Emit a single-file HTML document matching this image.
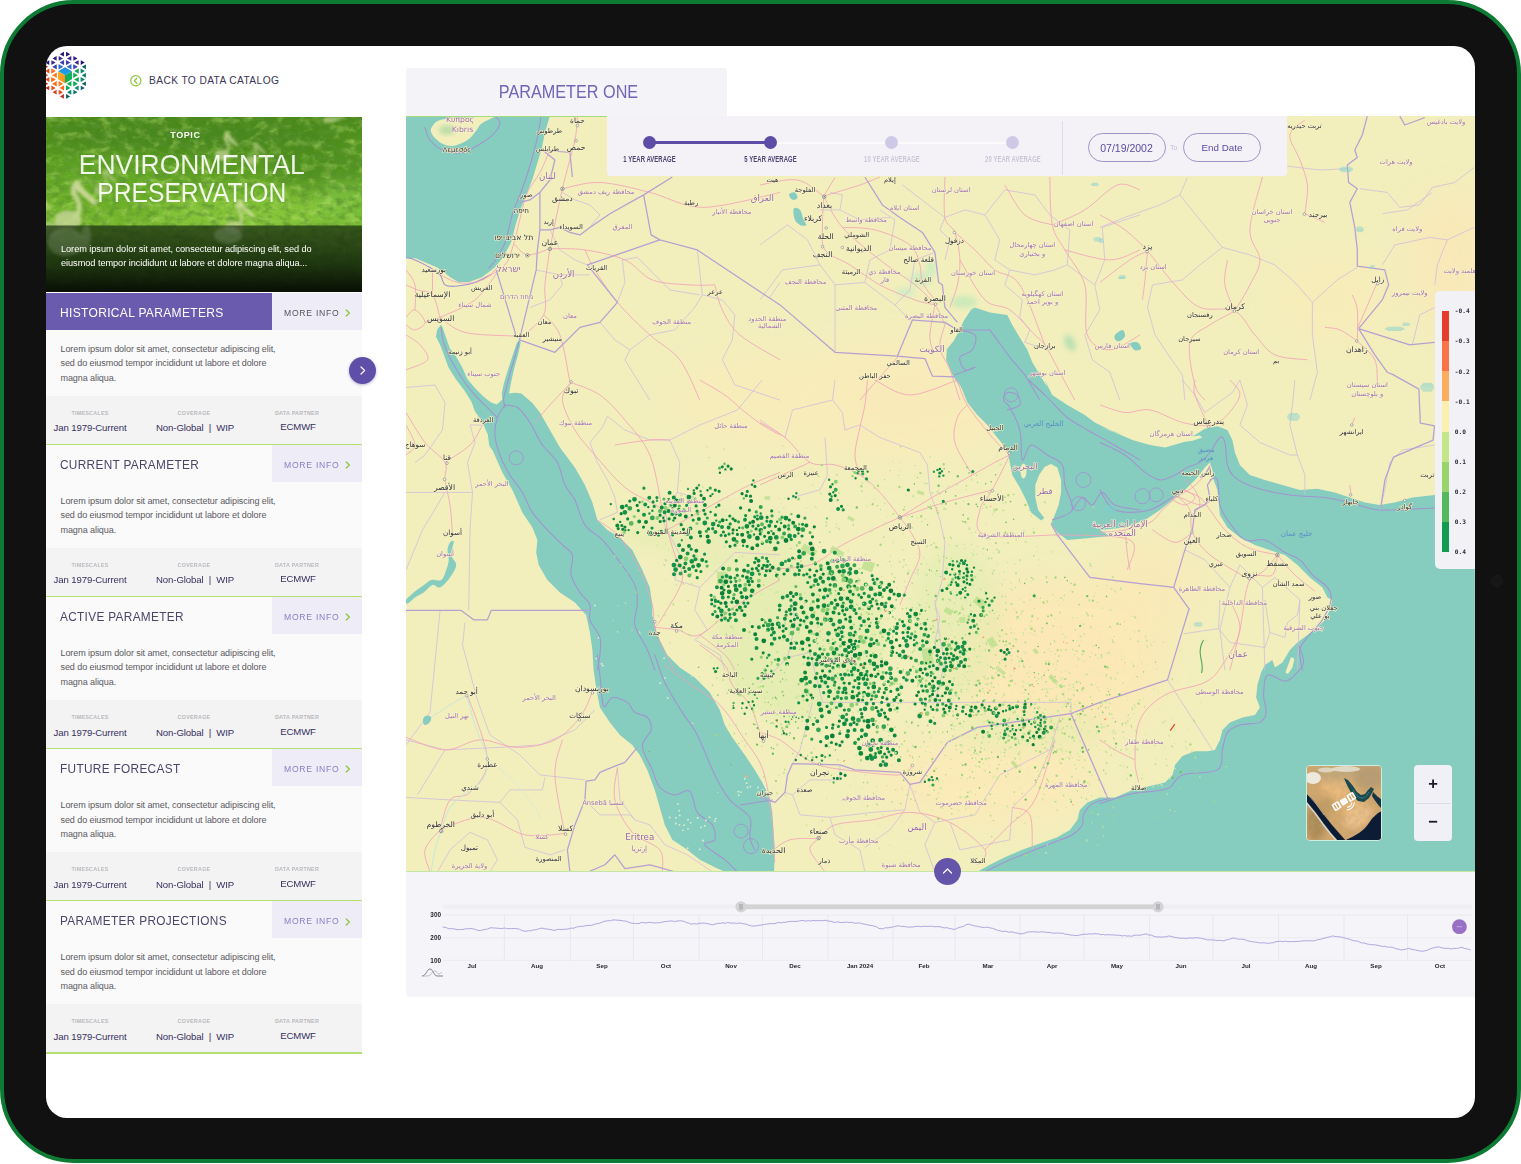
<!DOCTYPE html>
<html lang="en"><head><meta charset="utf-8"><title>Parameter One – Environmental Preservation</title>
<style>
*{box-sizing:border-box;margin:0;padding:0}
html,body{width:1521px;height:1164px;overflow:hidden;background:#fff}
body{position:relative;font-family:"Liberation Sans",sans-serif;color:#3b3558}
.frame{position:absolute;left:0;top:0;width:1520.6px;height:1163.2px;background:#111;border:4px solid #0e7b35;border-radius:74px}
.cam{position:absolute;left:1491px;top:575px;width:12px;height:12px;border-radius:50%;background:#161616;border:1px solid #1b1b1b}
.screen{position:absolute;left:46px;top:46px;width:1428.6px;height:1072px;border-radius:21px;background:#fff;overflow:hidden}
.pg{position:absolute;left:-46px;top:-46px;width:1521px;height:1164px}
.abs{position:absolute}
.nw{white-space:nowrap}
/* sidebar */
.back{position:absolute;left:149px;top:74px;font-size:10.2px;letter-spacing:.4px;color:#3b3558;white-space:nowrap;line-height:14px}
.photo{position:absolute;left:46px;top:117px;width:316px;height:175px;overflow:hidden;background:#4c9422}
.topic{position:absolute;left:-18.6px;width:316px;top:13px;text-align:center;font-size:9px;font-weight:bold;letter-spacing:.55px;color:#fff;line-height:11px}
.big{position:absolute;left:-12.4px;width:316px;text-align:center;color:rgba(255,255,255,.9);font-size:27.6px;line-height:27px;white-space:nowrap}
.big span{display:inline-block;transform-origin:50% 50%}
.plorem{position:absolute;left:15px;top:125px;color:#fff;font-size:9.2px;line-height:14.4px;white-space:nowrap;letter-spacing:-.05px}
.card{position:absolute;left:46px;width:316px;height:153px}
.chd{position:absolute;left:0;top:0;width:226px;height:37px;background:#fbfafb}
.chd.on{background:#6a5bae}
.ctt{position:absolute;left:14px;top:12.2px;font-size:13px;line-height:16px;letter-spacing:.35px;color:#4b4569;white-space:nowrap;transform-origin:0 50%;transform:scaleX(.91)}
.on .ctt{transform:scaleX(.925)}
.on .ctt{color:#fff}
.cmi{position:absolute;left:226px;top:0;width:90px;height:37px;background:#edecf7;font-size:8.6px;letter-spacing:.75px;color:#8a7cc4;line-height:40.6px;padding-left:12px;overflow:hidden;white-space:nowrap}
.cmi.dk{color:#55535f}
.cmi svg{position:absolute;left:73px;top:16.3px}
.cds{position:absolute;left:0;top:37px;width:316px;height:66px;background:#fbfafb;font-size:9.02px;line-height:14.4px;color:#5a5960;padding:12.2px 0 0 14.5px;white-space:nowrap;letter-spacing:-.08px}
.cmt{position:absolute;left:0;top:103px;width:316px;height:48px;background:#f3f3f4}
.cln{position:absolute;left:0;top:151px;width:316px;height:1.6px;background:#b4df72}
.ml{position:absolute;top:14px;font-size:5.4px;letter-spacing:.25px;color:#b9b9be;font-weight:bold;text-align:center;white-space:nowrap;line-height:7px;width:80px}
.mv{position:absolute;top:26.8px;font-size:9.6px;color:#372f5c;text-align:center;white-space:nowrap;line-height:12px;width:100px;letter-spacing:-.1px}
.rbtn{position:absolute;left:349px;top:357px;width:27px;height:27px;border-radius:50%;background:#5f4fa8;box-shadow:0 1px 3px rgba(60,40,120,.35)}
/* right */
.tab{position:absolute;left:406px;top:68.4px;width:321px;height:48px;background:#f4f3f8;border-radius:3px 3px 0 0}
.tabl{position:absolute;left:406px;top:115.6px;width:321px;height:1.1px;background:#a6dc7e}
.tab span{position:absolute;left:2px;width:321px;top:12.8px;text-align:center;font-size:18.6px;line-height:22px;color:#7165b6;white-space:nowrap;transform:scaleX(.872);display:block}
.map{position:absolute;left:406px;top:116px;width:1069px;height:756px;overflow:hidden;background:#f2efbd;border-bottom:1px solid #c3e8a6}
.ctl{position:absolute;left:607px;top:116px;width:680px;height:60px;background:rgba(244,242,249,.965);border-radius:0 0 4px 4px}
.trk{position:absolute;left:42px;top:25.5px;width:364px;height:2px;background:#fbfbfd}
.trk2{position:absolute;left:42px;top:25px;width:122px;height:3px;background:#5d4da6}
.dot{position:absolute;top:20.4px;width:13px;height:13px;border-radius:50%;background:#5d4da6}
.dot.off{background:#cfc9e8}
.sl{position:absolute;top:39px;width:120px;text-align:center;font-size:8.7px;line-height:9px;color:#4a4370;white-space:nowrap;font-weight:bold}
.sl span{display:inline-block;transform:scaleX(.68);letter-spacing:.1px}
.sl.off{color:#c9c6d6}
.vdiv{position:absolute;left:455px;top:5px;width:1.4px;height:54px;background:#e0dcee}
.pill{position:absolute;top:17px;width:78px;height:28.5px;border:1.1px solid #9d94c6;border-radius:15px;text-align:center;font-size:9.8px;line-height:28.3px;color:#5b4ca3;white-space:nowrap}
.to{position:absolute;left:563px;top:27px;font-size:7px;color:#c3bfd3;line-height:9px}
.legend{position:absolute;left:1435px;top:291px;width:45px;height:278px;background:#f2f1f6;border-radius:5px}
.lg{position:absolute;left:6.5px;width:7.4px;height:30.2px}
.ll{position:absolute;left:19.8px;font-family:"DejaVu Sans Mono","Liberation Mono",monospace;font-weight:bold;font-size:6.2px;line-height:8px;color:#2d2d3a;white-space:nowrap;width:20px;text-align:left}
.mini{position:absolute;left:1306px;top:765px;width:76px;height:76px;border-radius:4px;border:1px solid #cdeee4;overflow:hidden;background:#c9a36b}
.zoom{position:absolute;left:1414px;top:765px;width:38px;height:76px;border-radius:4px;background:#f1f0f6}
.zoom i{position:absolute;left:2px;right:2px;top:37.5px;height:1px;background:#dddbe6}
.zoom b{position:absolute;left:0;width:38px;text-align:center;font-size:16.5px;line-height:16px;color:#1a1a2a;font-weight:bold}
.chart{position:absolute;left:406px;top:872px;width:1069px;height:124.5px;background:#f5f4f9;border-radius:0 0 0 4px}
.upb{position:absolute;left:934px;top:858px;width:27px;height:27px;border-radius:50%;background:#6454aa}
</style></head><body>
<div class="frame"></div><div class="cam"></div><div class="screen"><div class="pg"><svg class="abs" style="left:0;top:0" width="110" height="110" viewBox="0 0 110 110"><defs><linearGradient id="lgT" x1="0" y1="0" x2="0" y2="1"><stop offset="0" stop-color="#2a86dc"/><stop offset="1" stop-color="#12a8ec"/></linearGradient><linearGradient id="lgL" x1="0" y1="0" x2="1" y2="1"><stop offset="0" stop-color="#ffb22a"/><stop offset="1" stop-color="#ff8a1f"/></linearGradient><linearGradient id="lgR" x1="0" y1="0" x2="0" y2="1"><stop offset="0" stop-color="#12a86a"/><stop offset="1" stop-color="#12b652"/></linearGradient></defs><path d="M49.28 60.29 49.28 64.96 45.22 62.62z" fill="#1e1677"/><path d="M44.13 64.51 44.13 69.19 48.19 66.85z" fill="#bc3623"/><path d="M49.35 68.61 49.35 73.54 45.07 71.08z" fill="#e84c1b"/><path d="M44.10 72.90 44.10 77.70 48.26 75.30z" fill="#d1411f"/><path d="M49.35 77.06 49.35 81.99 45.07 79.52z" fill="#e84c1b"/><path d="M44.13 81.41 44.13 86.09 48.19 83.75z" fill="#bc3623"/><path d="M49.28 85.64 49.28 90.31 45.22 87.97z" fill="#bc3623"/><path d="M56.63 56.00 56.63 60.80 52.47 58.40z" fill="#2a1e83"/><path d="M51.38 60.16 51.38 65.09 55.65 62.62z" fill="#392791"/><path d="M56.76 64.22 56.76 69.48 52.20 66.85z" fill="#3c44b2"/><path d="M51.28 68.44 51.28 73.71 55.84 71.08z" fill="#fe6814"/><path d="M56.83 72.56 56.83 78.04 52.08 75.30z" fill="#ff7a14"/><path d="M51.28 76.89 51.28 82.16 55.84 79.52z" fill="#fe6814"/><path d="M56.76 81.12 56.76 86.38 52.20 83.75z" fill="#fe6814"/><path d="M51.38 85.51 51.38 90.44 55.65 87.97z" fill="#e84c1b"/><path d="M56.63 89.80 56.63 94.60 52.47 92.20z" fill="#d1411f"/><path d="M63.91 51.84 63.91 56.51 59.86 54.17z" fill="#1e1677"/><path d="M58.70 55.93 58.70 60.87 62.97 58.40z" fill="#392791"/><path d="M64.08 59.99 64.08 65.26 59.52 62.62z" fill="#3c44b2"/><path d="M58.54 64.11 58.54 69.59 63.29 66.85z" fill="#2e69cc"/><path d="M58.54 81.01 58.54 86.49 63.29 83.75z" fill="#ff7a14"/><path d="M64.08 85.34 64.08 90.61 59.52 87.97z" fill="#fe6814"/><path d="M58.70 89.73 58.70 94.67 62.97 92.20z" fill="#e84c1b"/><path d="M63.91 94.09 63.91 98.76 59.86 96.42z" fill="#bc3623"/><path d="M66.09 51.84 66.09 56.51 70.14 54.17z" fill="#1e1677"/><path d="M71.30 55.93 71.30 60.87 67.03 58.40z" fill="#392791"/><path d="M65.92 59.99 65.92 65.26 70.48 62.62z" fill="#3c44b2"/><path d="M71.46 64.11 71.46 69.59 66.71 66.85z" fill="#2e69cc"/><path d="M71.46 81.01 71.46 86.49 66.71 83.75z" fill="#0eaf4b"/><path d="M65.92 85.34 65.92 90.61 70.48 87.97z" fill="#0ca456"/><path d="M71.30 89.73 71.30 94.67 67.03 92.20z" fill="#0a856e"/><path d="M66.09 94.09 66.09 98.76 70.14 96.42z" fill="#0a5d6e"/><path d="M73.37 56.00 73.37 60.80 77.53 58.40z" fill="#2a1e83"/><path d="M78.62 60.16 78.62 65.09 74.35 62.62z" fill="#392791"/><path d="M73.24 64.22 73.24 69.48 77.80 66.85z" fill="#3c44b2"/><path d="M78.72 68.44 78.72 73.71 74.16 71.08z" fill="#0ca456"/><path d="M73.17 72.56 73.17 78.04 77.92 75.30z" fill="#0eaf4b"/><path d="M78.72 76.89 78.72 82.16 74.16 79.52z" fill="#0ca456"/><path d="M73.24 81.12 73.24 86.38 77.80 83.75z" fill="#0ca456"/><path d="M78.62 85.51 78.62 90.44 74.35 87.97z" fill="#0a856e"/><path d="M73.37 89.80 73.37 94.60 77.53 92.20z" fill="#0a706e"/><path d="M80.72 60.29 80.72 64.96 84.78 62.62z" fill="#1e1677"/><path d="M85.87 64.51 85.87 69.19 81.81 66.85z" fill="#0a5d6e"/><path d="M80.65 68.61 80.65 73.54 84.93 71.08z" fill="#0a856e"/><path d="M85.90 72.90 85.90 77.70 81.74 75.30z" fill="#0a706e"/><path d="M80.65 77.06 80.65 81.99 84.93 79.52z" fill="#0a856e"/><path d="M85.87 81.41 85.87 86.09 81.81 83.75z" fill="#0a5d6e"/><path d="M80.72 85.64 80.72 90.31 84.78 87.97z" fill="#0a5d6e"/><path d="M65.00 67.27 71.95 71.29 65.00 75.30 58.05 71.29z" fill="url(#lgT)"/><path d="M58.05 71.29 65.00 75.30 65.00 83.33 58.05 79.31z" fill="url(#lgL)"/><path d="M65.00 75.30 71.95 71.29 71.95 79.31 65.00 83.33z" fill="url(#lgR)"/></svg><svg class="abs" style="left:129px;top:73.6px" width="14" height="14" viewBox="0 0 14 14"><circle cx="6.8" cy="6.8" r="5.1" fill="none" stroke="#8dc63f" stroke-width="1.2"/><path d="M7.9 4.2 5.3 6.8 7.9 9.4" fill="none" stroke="#8dc63f" stroke-width="1.3" stroke-linecap="round" stroke-linejoin="round"/></svg><div class="back">BACK TO DATA CATALOG</div><div class="photo"><svg class="abs" style="left:0;top:0" width="316" height="175" viewBox="0 0 316 175"><defs><linearGradient id="pg1" x1="0" y1="0" x2="0" y2="1"><stop offset="0" stop-color="#4b8a1b"/><stop offset=".25" stop-color="#5a9c21"/><stop offset=".55" stop-color="#74b62d"/><stop offset=".75" stop-color="#7dbd33"/><stop offset="1" stop-color="#5fa128"/></linearGradient><linearGradient id="pg2" x1="0" y1="0" x2="0" y2="1"><stop offset="0" stop-color="#1c3312" stop-opacity=".74"/><stop offset=".55" stop-color="#12240b" stop-opacity=".86"/><stop offset="1" stop-color="#050a03" stop-opacity=".97"/></linearGradient><filter id="pn" x="0" y="0" width="100%" height="100%"><feTurbulence type="fractalNoise" baseFrequency=".09 .13" numOctaves="4" seed="5" result="n"/><feColorMatrix type="matrix" values="0 0 0 0 .56  0 0 0 0 .8  0 0 0 0 .2  2.4 0 0 0 -1.12"/></filter><filter id="pn2" x="0" y="0" width="100%" height="100%"><feTurbulence type="fractalNoise" baseFrequency=".11 .16" numOctaves="4" seed="23"/><feColorMatrix type="matrix" values="0 0 0 0 .1  0 0 0 0 .28  0 0 0 0 .03  0 2.6 0 0 -1.12"/></filter><filter id="pb"><feGaussianBlur stdDeviation="1.6"/></filter><filter id="pb2"><feGaussianBlur stdDeviation="9"/></filter></defs><rect width="316" height="175" fill="url(#pg1)"/><g filter="url(#pb2)"><ellipse cx="150" cy="20" rx="150" ry="16" fill="#45821a" opacity=".7"/><ellipse cx="270" cy="50" rx="50" ry="22" fill="#4a8a1c" opacity=".7"/><ellipse cx="200" cy="95" rx="90" ry="22" fill="#8bc93c" opacity=".75"/><ellipse cx="70" cy="60" rx="60" ry="18" fill="#66ab26" opacity=".6"/><ellipse cx="295" cy="85" rx="25" ry="20" fill="#86c94a" opacity=".6"/></g><rect width="316" height="175" filter="url(#pn)" opacity=".5"/><rect width="316" height="175" filter="url(#pn2)" opacity=".7"/><g filter="url(#pb)"><g transform="translate(22 82) scale(1.5 1.5)" opacity="0.8"><ellipse cx="0" cy="14" rx="9" ry="6.5" fill="#c9d79a"/><path d="M5 12C9 8 8 2 5-2S3-9 6-10" fill="none" stroke="#d2dda2" stroke-width="3.2" stroke-linecap="round"/><circle cx="6" cy="-10" r="2.6" fill="#d6dfa6"/><path d="M6-12L20 3 17 4 4-7z" fill="#e0e3ae"/></g><g transform="translate(4 96) scale(-1.2 1.2)" opacity="0.55"><ellipse cx="0" cy="14" rx="9" ry="6.5" fill="#c9d79a"/><path d="M5 12C9 8 8 2 5-2S3-9 6-10" fill="none" stroke="#d2dda2" stroke-width="3.2" stroke-linecap="round"/><circle cx="6" cy="-10" r="2.6" fill="#d6dfa6"/><path d="M6-12L20 3 17 4 4-7z" fill="#e0e3ae"/></g><g transform="translate(176 26) scale(0.85 0.85)" opacity="0.7"><ellipse cx="0" cy="14" rx="9" ry="6.5" fill="#c9d79a"/><path d="M5 12C9 8 8 2 5-2S3-9 6-10" fill="none" stroke="#d2dda2" stroke-width="3.2" stroke-linecap="round"/><circle cx="6" cy="-10" r="2.6" fill="#d6dfa6"/><path d="M6-12L20 3 17 4 4-7z" fill="#e0e3ae"/></g><g transform="translate(206 34) scale(0.7 0.7)" opacity="0.6"><ellipse cx="0" cy="14" rx="9" ry="6.5" fill="#c9d79a"/><path d="M5 12C9 8 8 2 5-2S3-9 6-10" fill="none" stroke="#d2dda2" stroke-width="3.2" stroke-linecap="round"/><circle cx="6" cy="-10" r="2.6" fill="#d6dfa6"/><path d="M6-12L20 3 17 4 4-7z" fill="#e0e3ae"/></g><g transform="translate(188 96) scale(1.05 1.05)" opacity="0.7"><ellipse cx="0" cy="14" rx="9" ry="6.5" fill="#c9d79a"/><path d="M5 12C9 8 8 2 5-2S3-9 6-10" fill="none" stroke="#d2dda2" stroke-width="3.2" stroke-linecap="round"/><circle cx="6" cy="-10" r="2.6" fill="#d6dfa6"/><path d="M6-12L20 3 17 4 4-7z" fill="#e0e3ae"/></g><g transform="translate(55 62) scale(0.8 0.8)" opacity="0.55"><ellipse cx="0" cy="14" rx="9" ry="6.5" fill="#c9d79a"/><path d="M5 12C9 8 8 2 5-2S3-9 6-10" fill="none" stroke="#d2dda2" stroke-width="3.2" stroke-linecap="round"/><circle cx="6" cy="-10" r="2.6" fill="#d6dfa6"/><path d="M6-12L20 3 17 4 4-7z" fill="#e0e3ae"/></g><path d="M300 0l-14 6-8 0 0-6z" fill="#d2dda2" opacity=".6"/></g><rect x="0" y="108.5" width="316" height="67" fill="url(#pg2)"/><g filter="url(#pb)" fill="#9aa98a" opacity=".28"><ellipse cx="182" cy="118" rx="14" ry="9"/><ellipse cx="20" cy="125" rx="18" ry="14"/><ellipse cx="40" cy="120" rx="5" ry="12"/></g></svg><div class="topic">TOPIC</div><div class="big" style="top:33.5px"><span id="bg1" style="transform:scaleX(.959)">ENVIRONMENTAL</span></div><div class="big" style="top:61.5px"><span id="bg2" style="transform:scaleX(.893)">PRESERVATION</span></div><div class="plorem">Lorem ipsum dolor sit amet, consectetur adipiscing elit, sed do<br>eiusmod tempor incididunt ut labore et dolore magna aliqua...</div></div><div class="card" style="top:292.5px"><div class="chd on"><div class="ctt">HISTORICAL PARAMETERS</div></div><div class="cmi dk">MORE INFO<svg width="6" height="8" viewBox="0 0 6 8"><path d="M1.2 1 4.4 4 1.2 7" fill="none" stroke="#8dc63f" stroke-width="1.3" stroke-linecap="round" stroke-linejoin="round"/></svg></div><div class="cds">Lorem ipsum dolor sit amet, consectetur adipiscing elit,<br>sed do eiusmod tempor incididunt ut labore et dolore<br>magna aliqua.</div><div class="cmt"><div class="ml" style="left:4px">TIMESCALES</div><div class="mv" style="left:-6px">Jan 1979-Current</div><div class="ml" style="left:108px">COVERAGE</div><div class="mv" style="left:99px">Non-Global &nbsp;|&nbsp; WIP</div><div class="ml" style="left:211px">DATA PARTNER</div><div class="mv" style="left:202px;top:25.8px">ECMWF</div></div><div class="cln"></div></div><div class="card" style="top:444.7px"><div class="chd"><div class="ctt">CURRENT PARAMETER</div></div><div class="cmi">MORE INFO<svg width="6" height="8" viewBox="0 0 6 8"><path d="M1.2 1 4.4 4 1.2 7" fill="none" stroke="#8dc63f" stroke-width="1.3" stroke-linecap="round" stroke-linejoin="round"/></svg></div><div class="cds">Lorem ipsum dolor sit amet, consectetur adipiscing elit,<br>sed do eiusmod tempor incididunt ut labore et dolore<br>magna aliqua.</div><div class="cmt"><div class="ml" style="left:4px">TIMESCALES</div><div class="mv" style="left:-6px">Jan 1979-Current</div><div class="ml" style="left:108px">COVERAGE</div><div class="mv" style="left:99px">Non-Global &nbsp;|&nbsp; WIP</div><div class="ml" style="left:211px">DATA PARTNER</div><div class="mv" style="left:202px;top:25.8px">ECMWF</div></div><div class="cln"></div></div><div class="card" style="top:596.9px"><div class="chd"><div class="ctt">ACTIVE PARAMETER</div></div><div class="cmi">MORE INFO<svg width="6" height="8" viewBox="0 0 6 8"><path d="M1.2 1 4.4 4 1.2 7" fill="none" stroke="#8dc63f" stroke-width="1.3" stroke-linecap="round" stroke-linejoin="round"/></svg></div><div class="cds">Lorem ipsum dolor sit amet, consectetur adipiscing elit,<br>sed do eiusmod tempor incididunt ut labore et dolore<br>magna aliqua.</div><div class="cmt"><div class="ml" style="left:4px">TIMESCALES</div><div class="mv" style="left:-6px">Jan 1979-Current</div><div class="ml" style="left:108px">COVERAGE</div><div class="mv" style="left:99px">Non-Global &nbsp;|&nbsp; WIP</div><div class="ml" style="left:211px">DATA PARTNER</div><div class="mv" style="left:202px;top:25.8px">ECMWF</div></div><div class="cln"></div></div><div class="card" style="top:749.1px"><div class="chd"><div class="ctt">FUTURE FORECAST</div></div><div class="cmi">MORE INFO<svg width="6" height="8" viewBox="0 0 6 8"><path d="M1.2 1 4.4 4 1.2 7" fill="none" stroke="#8dc63f" stroke-width="1.3" stroke-linecap="round" stroke-linejoin="round"/></svg></div><div class="cds">Lorem ipsum dolor sit amet, consectetur adipiscing elit,<br>sed do eiusmod tempor incididunt ut labore et dolore<br>magna aliqua.</div><div class="cmt"><div class="ml" style="left:4px">TIMESCALES</div><div class="mv" style="left:-6px">Jan 1979-Current</div><div class="ml" style="left:108px">COVERAGE</div><div class="mv" style="left:99px">Non-Global &nbsp;|&nbsp; WIP</div><div class="ml" style="left:211px">DATA PARTNER</div><div class="mv" style="left:202px;top:25.8px">ECMWF</div></div><div class="cln"></div></div><div class="card" style="top:901.3px"><div class="chd"><div class="ctt">PARAMETER PROJECTIONS</div></div><div class="cmi">MORE INFO<svg width="6" height="8" viewBox="0 0 6 8"><path d="M1.2 1 4.4 4 1.2 7" fill="none" stroke="#8dc63f" stroke-width="1.3" stroke-linecap="round" stroke-linejoin="round"/></svg></div><div class="cds">Lorem ipsum dolor sit amet, consectetur adipiscing elit,<br>sed do eiusmod tempor incididunt ut labore et dolore<br>magna aliqua.</div><div class="cmt"><div class="ml" style="left:4px">TIMESCALES</div><div class="mv" style="left:-6px">Jan 1979-Current</div><div class="ml" style="left:108px">COVERAGE</div><div class="mv" style="left:99px">Non-Global &nbsp;|&nbsp; WIP</div><div class="ml" style="left:211px">DATA PARTNER</div><div class="mv" style="left:202px;top:25.8px">ECMWF</div></div><div class="cln"></div></div><div class="rbtn"><svg class="abs" style="left:10px;top:8px" width="8" height="11" viewBox="0 0 8 11"><path d="M2 2 5.6 5.5 2 9" fill="none" stroke="#fff" stroke-width="1.2" stroke-linecap="round" stroke-linejoin="round"/></svg></div><div class="tab"><span>PARAMETER ONE</span></div><div class="map"><svg class="abs" style="left:0;top:0" width="1069" height="756" viewBox="406 116 1069 756"><defs><filter id="b20" x="-20%" y="-20%" width="140%" height="140%"><feGaussianBlur stdDeviation="18"/></filter><filter id="b8" x="-20%" y="-20%" width="140%" height="140%"><feGaussianBlur stdDeviation="7"/></filter><filter id="b3" x="-20%" y="-20%" width="140%" height="140%"><feGaussianBlur stdDeviation="2.5"/></filter></defs><rect x="406" y="116" width="1069" height="756" fill="#f2efbd"/><g filter="url(#b20)"><ellipse cx="1060" cy="660" rx="105" ry="80" fill="#fbe8b6"/><ellipse cx="990" cy="780" rx="110" ry="45" fill="#faeab8"/><ellipse cx="900" cy="400" rx="120" ry="60" fill="#f8ebb9"/><ellipse cx="760" cy="400" rx="90" ry="50" fill="#f8ecba" opacity=".8"/><ellipse cx="1150" cy="590" rx="45" ry="50" fill="#fae9b6" opacity=".8"/><ellipse cx="1330" cy="300" rx="60" ry="50" fill="#f8ebb8" opacity=".7"/><ellipse cx="1450" cy="260" rx="40" ry="70" fill="#fbe8b8" opacity=".9"/></g><g filter="url(#b8)" opacity=".38"><ellipse cx="800" cy="640" rx="85" ry="80" fill="#d3eaa0"/><ellipse cx="730" cy="540" rx="70" ry="35" fill="#dcecaa"/><ellipse cx="955" cy="620" rx="45" ry="75" fill="#d9ecaa"/><ellipse cx="660" cy="525" rx="40" ry="25" fill="#dcecaa"/><ellipse cx="1030" cy="730" rx="70" ry="22" fill="#dfedae"/></g><path d="M406.0 116.0 549.9 116.0 545.1 131.8 542.0 147.6 537.2 163.4 532.5 179.2 526.2 195.1 519.8 210.9 515.1 226.7 511.1 242.5 502.4 258.3 494.5 267.8 481.9 277.3 469.2 282.0 458.2 282.0 450.3 277.3 443.9 272.5 437.6 267.8 426.6 263.0 415.5 258.3 406.0 258.3z" fill="#86cdc0"/><path d="M431.0 129.0C431.7 127.0 433.7 123.7 436.0 122.0C438.3 120.3 441.3 119.7 445.0 119.0C448.7 118.3 453.8 118.2 458.0 118.0C462.2 117.8 465.2 117.8 470.0 117.5C474.8 117.2 482.7 116.5 487.0 116.2C491.3 116.0 495.5 115.5 496.0 116.0C496.5 116.5 492.5 117.7 490.0 119.0C487.5 120.3 483.3 122.0 481.0 124.0C478.7 126.0 477.8 128.7 476.0 131.0C474.2 133.3 472.3 136.0 470.0 138.0C467.7 140.0 465.0 141.7 462.0 143.0C459.0 144.3 455.2 145.8 452.0 146.0C448.8 146.2 445.7 145.2 443.0 144.0C440.3 142.8 437.8 140.7 436.0 139.0C434.2 137.3 432.8 135.7 432.0 134.0C431.2 132.3 430.3 131.0 431.0 129.0z" fill="#f2efbd"/><ellipse cx="447" cy="130" rx="8" ry="4.5" fill="#b9dda6" filter="url(#b3)"/><path d="M441.0 324.8 437.4 329.2 435.9 336.5 440.3 345.3 444.7 357.0 448.4 367.2 455.7 378.9 464.4 390.6 471.7 402.3 474.7 411.0 482.0 421.3 487.8 434.4 489.3 446.1 492.4 450.0 502.4 472.4 512.4 489.9 522.4 512.4 532.4 527.4 537.4 539.9 536.2 552.4 538.7 564.9 547.4 579.9 559.9 592.4 574.9 602.4 586.1 615.0 589.9 632.5 592.4 650.0 593.6 670.0 596.1 687.4 599.9 707.4 609.9 722.4 619.9 734.9 632.3 744.9 639.8 754.9 647.3 769.9 654.8 789.9 659.8 807.4 664.8 824.9 672.3 839.8 687.3 849.8 699.8 859.8 714.8 867.3 724.8 871.8 724.8 873.0 774.0 873.0 774.8 849.8 773.5 829.9 772.3 812.4 769.8 797.4 762.3 782.4 754.8 769.9 744.8 754.9 732.3 737.4 724.8 724.9 719.8 709.9 709.8 692.4 694.8 677.4 679.8 667.5 667.3 655.0 657.3 635.0 652.3 615.0 652.3 604.9 649.8 587.4 642.3 569.9 632.3 549.9 619.9 537.4 607.4 529.9 597.4 519.9 592.4 502.4 584.9 484.9 574.9 467.4 559.9 447.5 549.9 430.0 539.9 412.5 532.4 403.0 523.7 395.5 521.5 393.5 515.0 392.8 509.0 393.5 511.2 381.8 514.1 368.7 517.8 355.5 520.7 342.4 519.3 339.6 517.0 342.4 512.6 355.5 508.3 368.7 503.9 383.3 501.7 393.5 502.4 399.3 499.5 402.3 496.6 404.5 490.7 402.3 483.4 396.4 474.7 387.7 467.4 378.9 462.2 367.2 456.4 357.0 449.8 348.2 446.2 338.0 442.5 327.0z" fill="#86cdc0"/><path d="M971.1 309.4 963.6 321.1 959.1 331.1 953.6 341.1 946.9 349.3 946.1 359.8 952.4 374.8 959.9 387.3 957.4 380.0 962.4 390.0 967.4 402.5 977.4 415.0 987.4 425.0 997.3 437.5 1007.3 450.0 1009.8 462.4 1012.3 474.9 1019.8 487.4 1026.1 499.9 1031.1 512.4 1041.1 520.4 1044.3 517.9 1038.1 509.9 1035.3 497.4 1035.3 484.9 1039.1 474.9 1044.8 466.7 1051.1 463.9 1057.3 467.4 1061.1 479.9 1061.1 492.4 1058.6 504.9 1054.8 514.9 1051.1 523.7 1057.3 532.4 1067.3 539.9 1084.8 538.6 1109.8 536.1 1100.0 529.9 1125.0 527.4 1145.0 519.9 1160.0 509.9 1172.5 499.9 1184.9 489.9 1197.4 477.4 1204.9 467.4 1209.9 462.4 1212.4 469.9 1213.7 479.9 1217.4 489.9 1218.7 502.4 1219.9 514.9 1227.4 527.4 1239.9 537.4 1254.9 544.9 1272.4 551.1 1284.9 554.9 1297.4 564.9 1309.9 577.4 1322.4 587.4 1327.4 597.4 1332.3 600.0 1329.9 610.0 1324.9 620.0 1317.4 627.5 1307.4 635.0 1297.4 642.5 1289.9 650.0 1282.4 662.5 1274.9 667.5 1272.4 660.0 1264.9 665.0 1261.1 672.5 1257.4 684.9 1256.1 697.4 1259.9 707.4 1254.9 714.9 1242.4 717.4 1229.9 722.4 1222.4 729.9 1219.9 739.9 1214.9 749.9 1207.4 751.2 1194.9 751.2 1182.4 756.1 1175.0 764.9 1172.5 774.9 1165.0 782.4 1150.0 786.1 1132.5 789.9 1115.0 797.4 1099.8 797.4 1087.3 802.4 1079.8 809.9 1077.3 819.9 1069.8 829.9 1057.3 837.3 1039.8 843.6 1022.3 849.8 1004.8 857.3 989.9 864.8 977.4 871.8 977.0 873.0 1475.0 873.0 1474.8 493.7 1434.8 494.9 1412.3 497.4 1394.8 502.4 1379.8 504.9 1364.8 502.4 1349.8 497.4 1334.8 492.4 1317.4 488.7 1299.9 489.9 1282.4 484.9 1264.9 479.9 1249.9 474.9 1239.9 464.9 1234.9 452.5 1232.4 440.0 1227.4 430.0 1217.4 426.2 1204.9 428.7 1194.9 435.0 1182.4 442.5 1165.0 447.5 1150.0 445.0 1132.5 440.0 1115.0 432.5 1100.0 427.5 1124.8 435.0 1109.8 430.0 1094.8 422.5 1084.8 415.0 1067.3 405.0 1052.3 395.0 1044.8 380.0 1047.3 387.3 1039.8 374.8 1032.3 362.3 1027.3 349.8 1019.8 337.4 1012.3 324.9 1007.3 314.9 989.9 312.4 974.9 307.4z" fill="#86cdc0"/><g filter="url(#b3)" opacity=".75"><ellipse cx="921" cy="279" rx="11" ry="7" fill="#c6ebc4"/><ellipse cx="931" cy="268" rx="5" ry="8" fill="#c6ebc4"/><ellipse cx="964" cy="302" rx="13" ry="6" fill="#bfe8b8"/><ellipse cx="905" cy="292" rx="10" ry="4" fill="#c9ecc6"/><ellipse cx="1070" cy="343" rx="5" ry="9" fill="#a9dcae" transform="rotate(-25 1070 343)"/></g><ellipse cx="1023.5" cy="471" rx="3" ry="7.5" fill="#f2efbd"/><path d="M1291.1 657.0 1294.4 658.7 1292.4 667.5 1287.9 674.0 1285.4 672.5 1288.6 663.7z" fill="#f2efbd"/><path d="M1175.0 439.5 1187.4 437.0 1199.9 435.5 1202.4 437.5 1192.4 440.7 1179.9 442.5z" fill="#f2efbd"/><path d="M453.7 541.9C453.9 544.0 450.8 551.1 451.2 554.9C451.6 558.7 456.4 561.1 456.2 564.9C456.0 568.6 452.7 573.6 450.0 577.4C447.3 581.1 442.9 586.1 440.0 587.4C437.1 588.6 435.2 584.0 432.5 584.9C429.8 585.7 426.6 590.3 423.7 592.4C420.8 594.4 417.7 595.5 415.0 597.4C412.3 599.2 409.0 603.2 407.5 603.6C406.0 604.0 405.0 601.7 406.0 599.9C407.0 598.0 411.0 594.7 413.7 592.4C416.5 590.1 419.6 588.2 422.5 586.1C425.4 584.0 428.1 580.9 431.2 579.9C434.4 578.8 438.7 581.5 441.2 579.9C443.7 578.2 445.0 573.2 446.2 569.9C447.5 566.5 448.5 563.2 448.7 559.9C448.9 556.6 447.3 552.8 447.5 549.9C447.7 547.0 448.9 543.7 450.0 542.4C451.0 541.1 453.5 539.8 453.7 541.9z" fill="#86cdc0"/><path d="M793.7 208.7C794.6 207.0 798.3 208.1 800.0 209.9C801.6 211.8 802.7 217.4 803.7 219.9C804.8 222.4 806.6 224.0 806.2 224.9C805.8 225.8 803.1 226.3 801.2 225.4C799.3 224.6 796.2 222.7 795.0 219.9C793.7 217.1 792.9 210.4 793.7 208.7z" fill="#86cdc0"/><path d="M789.5 193.7C790.3 192.9 793.6 191.8 795.0 192.4C796.3 193.1 797.7 196.2 797.5 197.4C797.3 198.7 795.0 199.9 793.7 199.9C792.5 199.9 790.7 198.5 790.0 197.4C789.3 196.4 788.6 194.5 789.5 193.7z" fill="#86cdc0"/><path d="M1115.0 334.9C1116.2 333.2 1120.8 329.6 1122.5 329.9C1124.2 330.1 1125.4 334.2 1125.0 336.1C1124.6 338.0 1121.6 340.5 1120.0 341.1C1118.4 341.7 1116.3 340.9 1115.5 339.9C1114.7 338.8 1113.8 336.5 1115.0 334.9z" fill="#86cdc0"/><path d="M1130.0 343.6C1130.4 342.3 1135.6 341.5 1137.5 342.3C1139.3 343.2 1141.6 347.3 1141.2 348.6C1140.8 349.9 1136.9 351.2 1135.0 350.3C1133.1 349.5 1129.6 344.9 1130.0 343.6z" fill="#86cdc0"/><path d="M504.9 405.0C503.7 407.1 499.1 412.5 497.4 417.5C495.8 422.5 494.5 428.7 494.9 435.0C495.4 441.2 497.4 448.3 499.9 455.0C502.4 461.6 506.2 468.7 509.9 474.9C513.7 481.2 518.7 486.2 522.4 492.4C526.2 498.7 528.2 506.2 532.4 512.4C536.6 518.7 542.4 524.5 547.4 529.9C552.4 535.3 558.2 540.7 562.4 544.9C566.6 549.1 570.9 549.9 572.4 554.9C573.8 559.9 569.9 568.6 571.1 574.9C572.4 581.1 576.8 587.4 579.9 592.4C583.0 597.4 588.2 600.3 589.9 604.9C591.5 609.4 588.2 614.4 589.9 619.8C591.5 625.3 598.2 631.5 599.9 637.3C601.5 643.2 600.3 649.4 599.9 654.8C599.5 660.3 597.8 667.5 597.4 670.1" fill="none" stroke="#a393d0" stroke-width="1.05" stroke-linejoin="round" stroke-linecap="round"/><path d="M504.9 405.0C507.0 405.4 513.3 404.6 517.4 407.5C521.6 410.4 525.8 416.2 529.9 422.5C534.1 428.7 537.8 438.3 542.4 445.0C547.0 451.6 553.7 455.8 557.4 462.4C561.1 469.1 562.0 478.7 564.9 484.9C567.8 491.2 571.6 493.3 574.9 499.9C578.2 506.6 580.3 518.2 584.9 524.9C589.5 531.6 596.5 533.7 602.4 539.9C608.2 546.1 614.4 554.9 619.9 562.4C625.3 569.9 631.9 577.8 634.8 584.9C637.8 591.9 637.3 598.2 637.3 604.9C637.3 611.5 633.2 617.3 634.8 624.8C636.5 632.3 644.0 642.3 647.3 649.8C650.7 657.4 653.6 666.7 654.8 670.1" fill="none" stroke="#a393d0" stroke-width="1.05" stroke-linejoin="round" stroke-linecap="round"/><path d="M597.4 655.0C597.8 658.3 598.8 666.4 599.9 675.0C600.9 683.5 601.5 702.4 603.6 706.2C605.7 709.9 608.4 698.1 612.4 697.4C616.3 696.8 623.6 699.9 627.4 702.4C631.1 704.9 631.5 709.9 634.8 712.4C638.2 714.9 644.6 714.5 647.3 717.4C650.0 720.3 651.9 725.1 651.1 729.9C650.3 734.7 642.1 739.5 642.3 746.2C642.6 752.8 649.4 763.0 652.3 769.9C655.3 776.8 656.1 783.2 659.8 787.4C663.6 791.5 669.8 794.2 674.8 794.9C679.8 795.5 686.1 788.2 689.8 791.1C693.6 794.0 693.6 806.7 697.3 812.4C701.1 818.0 709.4 820.3 712.3 824.9C715.2 829.4 716.0 836.5 714.8 839.8C713.5 843.2 703.1 841.5 704.8 844.8C706.5 848.2 719.4 855.3 724.8 859.8C730.2 864.3 735.2 869.8 737.3 871.8" fill="none" stroke="#a393d0" stroke-width="1.05" stroke-linejoin="round" stroke-linecap="round"/><path d="M654.8 655.0C656.5 659.5 660.2 672.9 664.8 682.4C669.4 692.0 676.9 703.7 682.3 712.4C687.7 721.2 691.9 724.5 697.3 734.9C702.7 745.3 709.4 764.1 714.8 774.9C720.2 785.7 724.0 792.8 729.8 799.9C735.6 806.9 746.4 811.1 749.8 817.4C753.1 823.6 748.9 831.9 749.8 837.3C750.6 842.8 753.9 847.8 754.8 849.8" fill="none" stroke="#a393d0" stroke-width="1.05" stroke-linejoin="round" stroke-linecap="round"/><path d="M739.8 804.9 772.3 799.9" fill="none" stroke="#a393d0" stroke-width="1.05" stroke-linejoin="round" stroke-linecap="round"/><path d="M441.0 327.8C441.5 330.5 442.1 338.0 444.0 343.8C445.9 349.6 449.3 356.5 452.7 362.8C456.1 369.1 460.5 376.2 464.4 381.8C468.3 387.4 472.2 392.0 476.1 396.4C480.0 400.8 484.4 404.7 487.8 408.1C491.2 411.5 495.1 415.4 496.6 416.9" fill="none" stroke="#a393d0" stroke-width="1.05" stroke-linejoin="round" stroke-linecap="round"/><path d="M518.8 342.4C518.1 344.8 516.2 352.1 514.8 357.0C513.4 361.9 511.8 366.7 510.5 371.6C509.2 376.5 507.9 381.6 506.8 386.2C505.7 390.8 503.9 395.8 503.6 399.3C503.4 402.8 505.0 406.0 505.3 407.4" fill="none" stroke="#a393d0" stroke-width="1.05" stroke-linejoin="round" stroke-linecap="round"/><path d="M406.0 257.4C407.5 257.8 411.4 258.4 415.0 259.9C418.6 261.4 423.3 263.7 427.5 266.1C431.6 268.6 437.1 271.8 440.0 274.9C442.9 278.0 442.1 283.0 445.0 284.9C447.9 286.8 452.5 286.6 457.5 286.1C462.5 285.7 469.5 284.3 475.0 282.4C480.4 280.5 487.4 276.1 489.9 274.9" fill="none" stroke="#a393d0" stroke-width="1.05" stroke-linejoin="round" stroke-linecap="round"/><path d="M425.0 127.5C425.8 129.6 427.1 136.2 430.0 140.0C432.9 143.7 437.1 147.9 442.5 150.0C447.9 152.1 455.8 153.7 462.5 152.5C469.1 151.2 477.0 145.8 482.4 142.5C487.9 139.1 492.0 135.8 494.9 132.5C497.9 129.2 499.9 125.2 499.9 122.5C499.9 119.8 495.8 117.3 494.9 116.2" fill="none" stroke="#a393d0" stroke-width="1.05" stroke-linejoin="round" stroke-linecap="round"/><path d="M541.0 116.0C540.5 119.2 539.3 128.5 538.0 135.0C536.7 141.5 534.8 148.3 533.0 155.0C531.2 161.7 529.2 168.3 527.0 175.0C524.8 181.7 522.3 188.8 520.0 195.0C517.7 201.2 514.8 206.5 513.0 212.0C511.2 217.5 510.3 222.8 509.0 228.0C507.7 233.2 507.0 238.0 505.0 243.0C503.0 248.0 499.7 253.8 497.0 258.0C494.3 262.2 490.3 266.3 489.0 268.0" fill="none" stroke="#a393d0" stroke-width="1.05" stroke-linejoin="round" stroke-linecap="round"/><path d="M957.4 329.9 989.9 329.9 1009.8 357.3 1024.8 374.8 1039.8 400.1" fill="none" stroke="#a393d0" stroke-width="1.05" stroke-linejoin="round" stroke-linecap="round"/><path d="M957.4 329.9C960.3 330.7 972.4 331.5 974.9 334.9C977.4 338.2 974.9 346.1 972.4 349.8C969.9 353.6 961.1 354.0 959.9 357.3C958.6 360.7 962.4 368.2 964.9 369.8C967.4 371.5 976.5 366.5 974.9 367.3C973.2 368.2 958.2 373.6 954.9 374.8" fill="none" stroke="#a393d0" stroke-width="1.05" stroke-linejoin="round" stroke-linecap="round"/><path d="M1028.6 380.0C1031.7 382.9 1040.9 391.2 1047.3 397.5C1053.8 403.7 1060.6 412.1 1067.3 417.5C1074.0 422.9 1080.2 425.8 1087.3 430.0C1094.4 434.1 1101.0 437.5 1109.8 442.5C1118.6 447.5 1135.0 457.0 1140.0 459.9" fill="none" stroke="#a393d0" stroke-width="1.05" stroke-linejoin="round" stroke-linecap="round"/><path d="M1007.3 410.0C1009.4 409.1 1018.2 407.5 1019.8 405.0C1021.5 402.5 1019.4 397.1 1017.3 395.0C1015.3 392.9 1009.6 391.7 1007.3 392.5C1005.0 393.3 1003.2 397.5 1003.6 400.0C1004.0 402.5 1007.1 402.5 1009.8 407.5C1012.5 412.5 1017.7 421.2 1019.8 430.0C1021.9 438.7 1020.5 457.4 1022.3 459.9C1024.2 462.4 1026.9 445.8 1031.1 445.0C1035.2 444.1 1042.1 451.6 1047.3 455.0C1052.5 458.3 1059.4 459.9 1062.3 464.9C1065.2 469.9 1063.1 477.4 1064.8 484.9C1066.5 492.4 1074.4 504.1 1072.3 509.9C1070.2 515.7 1055.6 518.2 1052.3 519.9" fill="none" stroke="#a393d0" stroke-width="1.05" stroke-linejoin="round" stroke-linecap="round"/><path d="M1072.3 509.9C1074.0 507.8 1079.0 498.3 1082.3 497.4C1085.6 496.6 1089.0 505.8 1092.3 504.9C1095.6 504.1 1098.5 492.4 1102.3 492.4C1106.0 492.4 1108.5 502.0 1114.8 504.9C1121.1 507.8 1135.8 509.1 1140.0 509.9" fill="none" stroke="#a393d0" stroke-width="1.05" stroke-linejoin="round" stroke-linecap="round"/><path d="M1100.0 442.5C1104.2 444.5 1117.5 450.0 1125.0 455.0C1132.5 459.9 1139.1 468.3 1145.0 472.4C1150.8 476.6 1155.0 479.5 1160.0 479.9C1165.0 480.4 1170.4 477.0 1175.0 474.9C1179.5 472.9 1183.3 469.5 1187.4 467.4C1191.6 465.4 1196.2 464.9 1199.9 462.4C1203.7 459.9 1206.6 456.6 1209.9 452.5C1213.3 448.3 1217.4 439.1 1219.9 437.5C1222.4 435.8 1223.7 437.9 1224.9 442.5C1226.2 447.0 1225.8 459.1 1227.4 464.9C1229.1 470.8 1230.3 473.7 1234.9 477.4C1239.5 481.2 1245.7 484.5 1254.9 487.4C1264.1 490.3 1278.2 493.3 1289.9 494.9C1301.5 496.6 1314.9 496.2 1324.9 497.4C1334.8 498.7 1340.7 500.3 1349.8 502.4C1359.0 504.5 1365.7 509.0 1379.8 509.9C1394.0 510.8 1425.6 508.2 1434.8 507.9" fill="none" stroke="#a393d0" stroke-width="1.05" stroke-linejoin="round" stroke-linecap="round"/><path d="M1209.9 479.9C1211.2 479.9 1215.8 475.8 1217.4 479.9C1219.1 484.1 1218.3 498.3 1219.9 504.9C1221.6 511.6 1223.3 514.1 1227.4 519.9C1231.6 525.7 1238.7 536.6 1244.9 539.9C1251.2 543.2 1258.2 537.8 1264.9 539.9C1271.6 542.0 1279.1 549.1 1284.9 552.4C1290.7 555.7 1295.3 556.1 1299.9 559.9C1304.5 563.6 1307.8 570.3 1312.4 574.9C1316.9 579.5 1324.2 583.2 1327.4 587.4C1330.5 591.5 1331.9 594.4 1331.1 599.9C1330.3 605.3 1326.3 613.6 1322.4 619.8C1318.4 626.1 1311.1 632.3 1307.4 637.3C1303.6 642.3 1300.7 644.4 1299.9 649.8C1299.0 655.3 1302.0 666.7 1302.4 670.1" fill="none" stroke="#a393d0" stroke-width="1.05" stroke-linejoin="round" stroke-linecap="round"/><path d="M1298.6 645.0C1299.5 647.9 1304.2 657.5 1303.6 662.5C1303.0 667.5 1298.0 671.8 1294.9 675.0C1291.8 678.1 1289.5 681.2 1284.9 681.2C1280.3 681.2 1270.9 672.7 1267.4 675.0C1263.9 677.2 1263.9 688.7 1263.6 694.9C1263.4 701.2 1266.8 707.8 1266.1 712.4C1265.5 717.0 1264.3 720.3 1259.9 722.4C1255.5 724.5 1245.3 723.3 1239.9 724.9C1234.5 726.6 1230.3 728.2 1227.4 732.4C1224.5 736.6 1224.1 743.7 1222.4 749.9C1220.8 756.1 1224.1 765.7 1217.4 769.9C1210.8 774.1 1190.4 772.0 1182.4 774.9C1174.5 777.8 1174.5 784.7 1170.0 787.4C1165.4 790.1 1161.2 790.1 1155.0 791.1C1148.7 792.2 1141.6 791.5 1132.5 793.6C1123.3 795.7 1105.4 802.0 1100.0 803.6" fill="none" stroke="#a393d0" stroke-width="1.05" stroke-linejoin="round" stroke-linecap="round"/><path d="M1109.8 798.6C1106.9 799.5 1096.7 800.9 1092.3 803.6C1087.9 806.3 1085.2 811.3 1083.5 814.9C1081.9 818.4 1084.2 821.5 1082.3 824.9C1080.4 828.2 1076.5 832.1 1072.3 834.8C1068.1 837.6 1063.6 838.6 1057.3 841.1C1051.1 843.6 1042.7 846.7 1034.8 849.8C1026.9 853.0 1018.2 856.2 1009.8 859.8C1001.5 863.5 989.0 869.8 984.9 871.8" fill="none" stroke="#a393d0" stroke-width="1.05" stroke-linejoin="round" stroke-linecap="round"/><path d="M1100.0 489.9C1102.5 493.3 1106.7 506.6 1115.0 509.9C1123.3 513.2 1138.7 513.2 1150.0 509.9C1161.2 506.6 1177.0 493.3 1182.4 489.9" fill="none" stroke="#a393d0" stroke-width="1.05" stroke-linejoin="round" stroke-linecap="round"/><circle cx="516.2" cy="457.9" r="7" fill="none" stroke="#a393d0" stroke-width=".9"/><circle cx="1083.5" cy="479.9" r="7.5" fill="none" stroke="#a393d0" stroke-width=".9"/><circle cx="1078.5" cy="503.7" r="7" fill="none" stroke="#a393d0" stroke-width=".9"/><circle cx="1142.5" cy="496.2" r="7.5" fill="none" stroke="#a393d0" stroke-width=".9"/><circle cx="1156.2" cy="494.9" r="7" fill="none" stroke="#a393d0" stroke-width=".9"/><circle cx="741.0" cy="831.1" r="7" fill="none" stroke="#a393d0" stroke-width=".9"/><circle cx="751.0" cy="846.1" r="7.5" fill="none" stroke="#a393d0" stroke-width=".9"/><circle cx="1011.1" cy="394.8" r="7" fill="none" stroke="#a393d0" stroke-width=".9"/><path d="M607.4 416.2 602.4 427.5 589.9 442.5 597.4 462.4 607.4 479.9 614.9 497.4 617.4 512.4 599.9 519.9M607.4 416.2 624.9 430.0 649.8 440.0 669.8 440.0 679.8 462.4 677.3 492.4 694.8 497.4M669.8 440.0 699.8 425.0 737.3 410.0 762.3 380.0M677.3 492.4 662.3 519.9 679.8 554.9 674.8 579.9 699.8 587.4 714.8 572.4 734.8 552.4 780.0 554.9M699.8 587.4 694.8 609.9 707.3 629.8 694.8 639.8 719.8 654.8 724.8 670.1M832.5 400.0 842.4 412.5 844.9 430.0 859.9 425.0 879.9 437.5 899.9 445.0 919.9 452.5 927.4 464.9 929.9 492.4 939.9 519.9 944.9 542.4 942.4 579.9 934.9 604.9 939.9 617.3 934.9 642.3 939.9 670.1M760.0 420.0 785.0 437.5 792.5 410.0 832.5 400.0M825.0 437.5 827.5 474.9 820.0 489.9 792.5 497.4M832.5 400.0 835.0 380.0M822.5 702.4 1071.0 702.4 1071.0 713.7M934.9 600.0 939.9 637.5 944.9 662.5 934.9 702.4M812.5 702.4 800.0 749.9 792.5 763.6M787.5 657.5 810.0 652.5 822.5 702.4M760.0 682.4 775.0 670.0 787.5 657.5 795.0 625.0 792.5 600.0M839.9 764.9 839.9 779.9 810.0 779.9 792.5 794.9 785.0 792.4M792.5 794.9 800.0 814.9 830.0 817.4 835.0 834.8 859.9 849.8 864.9 871.8M830.0 817.4 872.4 812.4 904.9 809.9 909.9 784.4M904.9 809.9 889.9 829.9 864.9 847.3M909.9 784.4 919.9 812.4 934.9 822.4 924.9 844.8 934.9 871.8M934.9 822.4 974.9 814.9 999.8 774.9 1049.8 749.9 1059.8 717.4M949.9 822.4 959.9 849.8 1009.8 839.8 1012.3 807.4 1034.8 784.9 1054.8 739.9M1167.5 679.9 1212.4 749.9M1183.7 633.7 1218.7 628.7 1219.9 600.0M1218.7 628.7 1229.9 642.5 1264.9 647.5 1269.9 632.5 1264.9 600.0M1269.9 632.5 1284.9 637.5 1287.4 622.5 1297.4 615.0 1299.9 600.0M1224.9 670.1 1219.9 629.8 1229.9 587.4 1239.9 564.9 1249.9 574.9 1262.4 587.4 1264.9 670.1M1184.9 549.9 1204.9 559.9 1229.9 587.4M1297.4 670.1 1299.9 599.9 1274.9 577.4 1262.4 587.4M760.0 244.9 787.5 224.9 807.5 239.9 820.0 264.9 835.0 284.9 835.0 352.3M820.0 264.9 782.5 269.9 760.0 299.9M835.0 284.9 864.9 282.4 894.9 304.9 909.9 319.9M864.9 282.4 869.9 259.9 889.9 249.9 894.9 219.9 879.9 209.9M894.9 304.9 909.9 289.9 914.9 259.9 934.9 252.4M830.0 192.4 842.4 194.9 839.9 209.9 820.0 209.9M839.9 209.9 859.9 219.9 889.9 217.4M902.4 185.0 934.9 209.9 944.9 217.4 939.9 229.9 949.9 239.9 944.9 259.9M944.9 217.4 964.9 209.9 984.9 214.9 999.8 239.9 994.8 259.9 1009.8 269.9 1004.8 284.9 1022.3 299.9 1019.8 317.4 1029.8 329.9 1024.8 342.3 1047.3 349.8M984.9 214.9 1004.8 189.9 1034.8 194.9 1049.8 214.9 1069.8 229.9 1067.3 264.9 1094.8 284.9 1104.8 259.9 1102.3 227.4 1124.8 219.9 1140.0 214.9M1094.8 284.9 1099.8 309.9 1084.8 334.9 1092.3 359.8 1109.8 372.3 1119.8 400.1M1009.8 269.9 1034.8 274.9 1054.8 269.9 1067.3 264.9M1100.0 227.4 1125.0 217.4 1160.0 204.9 1179.9 194.9 1187.4 177.5M1179.9 194.9 1199.9 219.9 1222.4 247.4 1249.9 254.9 1274.9 264.9 1294.9 282.4 1312.4 302.4 1337.3 279.9 1357.3 267.4M1222.4 247.4 1199.9 264.9 1182.4 279.9 1152.5 284.9 1147.5 307.4 1155.0 334.9 1170.0 357.3 1182.4 374.8 1184.9 400.1M1312.4 302.4 1312.4 334.9 1317.4 372.3 1309.9 400.1M1287.4 166.2 1319.9 170.0 1347.3 168.7M1359.8 188.7 1387.3 192.4 1399.8 207.4 1419.8 204.9 1432.3 187.4 1454.8 182.5 1474.0 167.5M1382.3 213.7 1407.3 209.9 1432.3 192.4M1382.3 264.9 1394.8 244.9 1429.8 237.4 1447.3 239.9 1474.0 227.4M1447.3 239.9 1437.3 264.9 1434.8 284.9M1412.3 344.8 1419.8 314.9 1434.8 307.4M1294.9 380.0 1292.4 405.0 1289.9 425.0 1297.4 455.0 1304.9 474.9 1304.9 494.9M1239.9 380.0 1247.4 405.0 1239.9 425.0 1259.9 442.5 1289.9 455.0 1297.4 455.0M1182.4 380.0 1194.9 395.0 1204.9 412.5 1232.4 392.5 1239.9 380.0M1434.8 445.0 1402.3 450.0 1389.8 462.4 1384.8 489.9 1379.8 509.9M406.0 387.5 435.0 385.0 445.0 402.5 442.5 430.0 425.0 455.0 415.0 462.4M472.5 492.4 470.0 529.9 468.7 610.4M406.0 492.4 472.5 492.4 467.5 462.4 475.0 442.5 470.0 425.0 482.4 425.0M406.0 569.9 422.5 529.9 445.0 492.4M440.0 611.2 430.0 712.4 406.0 744.9M465.0 622.5 462.5 645.0 477.4 699.9 489.9 734.9 519.9 754.9 539.9 774.9 584.9 779.9M445.0 749.9 499.9 747.4 539.9 744.9 574.9 729.9 594.9 709.9M406.0 797.4 450.0 799.9 499.9 802.4 517.4 819.9 524.9 847.3 549.9 854.8 564.9 849.8M499.9 802.4 509.9 789.9 542.4 789.9 544.9 777.4M406.0 739.9 445.0 749.9 417.5 794.9M617.4 767.4 619.9 799.9 634.8 819.9 649.8 824.9 664.8 844.8 687.3 854.8 712.3 871.8M584.9 799.9 599.9 814.9 629.9 814.9 634.8 819.9M437.5 871.8 450.0 849.8 470.0 832.3 487.4 839.8 497.4 859.8 489.9 871.8M589.9 227.4 599.9 214.9 589.9 204.9 574.9 199.9 562.4 192.4M549.9 229.9 559.9 249.9 574.9 259.9 587.4 264.9M536.2 269.9 559.9 274.9 589.9 274.9M529.9 307.4 549.9 299.9 562.4 284.9 559.9 274.9M617.4 302.4 624.9 282.4 622.4 259.9 637.3 257.4M599.9 322.4 614.9 339.9 629.9 349.8 624.9 359.8 649.8 400.1M629.9 349.8 649.8 334.9 674.8 329.9 694.8 307.4 702.3 294.9 697.3 249.9M702.3 294.9 722.3 299.9 734.8 314.9 732.3 339.9 722.3 359.8 734.8 384.8 780.0 400.1M637.3 257.4 669.8 289.9 699.8 294.9M769.8 297.4 780.0 282.4" fill="none" stroke="#d3bddb" stroke-width=".8" stroke-linejoin="round"/><path d="M899.9 517.4C905.3 514.1 920.3 504.5 932.4 497.4C944.5 490.3 962.0 480.8 972.4 474.9C982.8 469.1 988.6 465.8 994.8 462.4C1001.1 459.1 1007.3 456.2 1009.8 455.0M899.9 517.4C896.6 513.2 886.6 499.5 879.9 492.4C873.3 485.3 867.4 479.5 859.9 474.9C852.4 470.4 843.3 467.0 835.0 464.9C826.6 462.9 818.3 467.0 810.0 462.4C801.6 457.9 793.3 444.1 785.0 437.5C776.7 430.8 764.2 425.0 760.0 422.5M899.9 517.4C895.3 519.5 882.0 525.3 872.4 529.9C862.8 534.5 852.9 539.1 842.4 544.9C832.0 550.7 823.7 560.7 810.0 564.9C796.2 569.0 768.3 569.0 760.0 569.9M899.9 517.4C902.0 520.3 909.1 528.7 912.4 534.9C915.7 541.1 920.3 547.4 919.9 554.9C919.5 562.4 913.2 571.5 909.9 579.9C906.6 588.2 901.6 600.7 899.9 604.9M1009.8 455.0C1006.9 452.0 999.4 445.8 992.3 437.5C985.3 429.1 973.2 414.6 967.4 405.0C961.5 395.4 959.0 384.2 957.4 380.0M1009.8 455.0C1006.9 460.8 997.3 480.8 992.3 489.9C987.4 499.1 981.1 502.4 979.9 509.9C978.6 517.4 971.9 530.7 984.9 534.9C997.8 539.1 1045.2 534.9 1057.3 534.9M992.3 489.9C984.4 492.0 960.3 497.8 944.9 502.4C929.5 507.0 907.4 514.9 899.9 517.4M867.4 380.0C867.0 384.2 866.2 397.1 864.9 405.0C863.7 412.9 861.6 419.1 859.9 427.5C858.3 435.8 854.9 447.0 854.9 455.0C854.9 462.9 859.1 471.6 859.9 474.9M810.0 462.4 760.0 484.9M967.4 405.0C965.7 407.1 959.5 411.2 957.4 417.5C955.3 423.7 952.4 432.9 954.9 442.5C957.4 452.0 969.4 469.5 972.4 474.9M957.4 380.0C949.5 382.5 923.6 395.0 909.9 395.0C896.2 395.0 880.8 382.5 874.9 380.0M1057.3 534.9C1069.4 535.7 1118.1 534.1 1129.8 539.9C1141.4 545.7 1127.7 564.9 1127.3 569.9M571.1 382.5C569.7 385.4 561.8 392.1 562.4 400.0C563.0 407.9 569.5 420.8 574.9 430.0C580.3 439.1 586.5 445.4 594.9 455.0C603.2 464.5 613.6 478.3 624.9 487.4C636.1 496.6 655.3 502.8 662.3 509.9C669.4 517.0 665.2 522.4 667.3 529.9C669.4 537.4 672.3 546.6 674.8 554.9C677.3 563.2 684.4 569.5 682.3 579.9C680.2 590.3 666.9 609.4 662.3 617.3C657.7 625.3 656.1 625.7 654.8 627.3M667.3 529.9C674.8 525.7 698.6 512.4 712.3 504.9C726.0 497.4 738.5 490.3 749.8 484.9C761.1 479.5 775.0 474.5 780.0 472.4M654.8 627.3C658.6 627.8 669.8 628.6 677.3 629.8C684.8 631.1 689.8 639.0 699.8 634.8C709.8 630.7 723.9 614.0 737.3 604.9C750.6 595.7 772.9 584.0 780.0 579.9M597.4 519.9C601.1 522.8 612.8 529.1 619.9 537.4C626.9 545.7 634.4 558.6 639.8 569.9C645.3 581.1 649.8 595.3 652.3 604.9C654.8 614.4 652.8 619.4 654.8 627.3C656.9 635.3 661.5 645.2 664.8 652.3C668.2 659.4 673.2 667.1 674.8 670.1M571.1 382.5C575.9 384.6 590.9 388.7 599.9 395.0C608.8 401.2 616.5 410.0 624.9 420.0C633.2 430.0 643.6 440.0 649.8 455.0C656.1 469.9 660.2 500.8 662.3 509.9M571.1 382.5C567.6 386.2 555.9 398.3 549.9 405.0C543.9 411.6 537.4 419.6 534.9 422.5M699.8 634.8C704.0 638.2 719.0 649.0 724.8 654.8C730.6 660.7 733.1 667.5 734.8 670.1M742.3 410.0C739.4 407.5 731.9 400.0 724.8 395.0C717.7 390.0 704.0 382.5 699.8 380.0M742.3 410.0C745.6 412.5 756.0 420.8 762.3 425.0C768.6 429.1 777.0 433.3 780.0 435.0M614.9 445.0C620.7 444.1 640.7 440.8 649.8 440.0C659.0 439.1 666.5 440.0 669.8 440.0M664.8 665.0C668.6 667.9 678.2 675.8 687.3 682.4C696.5 689.1 710.2 695.4 719.8 704.9C729.4 714.5 738.1 730.3 744.8 739.9C751.4 749.5 756.0 754.5 759.8 762.4C763.5 770.3 765.2 777.0 767.3 787.4C769.3 797.8 771.0 812.4 772.3 824.9C773.5 837.3 774.3 856.1 774.8 862.3M699.8 645.0C704.0 648.3 719.4 658.3 724.8 665.0C730.2 671.6 728.1 678.3 732.3 684.9C736.4 691.6 744.8 695.8 749.8 704.9C754.8 714.1 760.2 734.1 762.3 739.9M760.0 732.4C763.3 733.7 773.3 736.2 780.0 739.9C786.6 743.7 793.5 750.7 800.0 754.9C806.4 759.1 811.2 762.4 818.7 764.9C826.2 767.4 831.4 768.2 844.9 769.9C858.5 771.6 888.7 775.7 899.9 774.9C911.2 774.1 910.3 766.6 912.4 764.9M818.7 838.6C821.4 836.3 826.0 828.0 835.0 824.9C843.9 821.7 859.9 821.9 872.4 819.9C884.9 817.8 897.0 811.9 909.9 812.4C922.8 812.8 937.4 816.1 949.9 822.4C962.4 828.6 980.3 842.8 984.9 849.8C989.4 856.9 978.6 862.3 977.4 864.8M818.7 838.6C817.3 840.5 808.9 844.3 810.0 849.8C811.0 855.4 822.5 868.2 825.0 871.8M818.7 838.6C813.9 838.8 798.1 837.6 790.0 839.8C781.9 842.1 773.3 850.3 770.0 852.3M984.9 849.8C989.0 845.7 1001.5 833.2 1009.8 824.9C1018.2 816.5 1027.3 814.0 1034.8 799.9C1042.3 785.7 1051.5 749.9 1054.8 739.9M1012.3 807.4C1015.3 808.6 1026.5 807.8 1029.8 814.9C1033.2 821.9 1031.9 844.0 1032.3 849.8M406.0 317.4C407.5 316.1 411.8 309.0 415.0 309.9C418.2 310.7 425.0 319.0 425.0 322.4C425.0 325.7 418.2 329.4 415.0 329.9C411.8 330.3 407.5 325.7 406.0 324.9M406.0 284.9C407.9 285.7 413.1 288.2 417.5 289.9C421.9 291.5 428.7 290.3 432.5 294.9C436.2 299.5 438.7 313.6 440.0 317.4M406.0 269.9C407.5 272.4 413.5 278.2 415.0 284.9C416.5 291.5 415.0 305.7 415.0 309.9M432.5 269.9 432.5 294.9M425.0 322.4C427.5 321.5 431.6 321.1 440.0 317.4C448.3 313.6 465.4 307.4 475.0 299.9C484.5 292.4 493.7 277.0 497.4 272.4M440.0 317.4C444.1 319.9 452.5 329.2 465.0 332.4C477.4 335.5 506.6 335.5 514.9 336.1M406.0 334.9C408.3 336.5 416.4 340.7 420.0 344.8C423.6 349.0 429.8 355.7 427.5 359.8C425.2 364.0 409.6 368.2 406.0 369.8M432.5 269.9C436.6 272.0 449.1 280.7 457.5 282.4C465.8 284.1 475.4 282.8 482.4 279.9C489.5 277.0 497.0 267.4 499.9 264.9M406.0 412.5C409.2 417.5 418.5 434.1 425.0 442.5C431.5 450.8 441.6 456.2 445.0 462.4C448.3 468.7 444.1 472.9 445.0 479.9C445.8 487.0 448.7 496.2 450.0 504.9C451.2 513.7 452.0 527.8 452.5 532.4M445.0 462.4C449.1 459.5 463.7 451.2 470.0 445.0C476.2 438.7 480.4 428.3 482.4 425.0M406.0 425.0C407.5 428.3 415.0 440.0 415.0 445.0C415.0 450.0 407.5 453.3 406.0 455.0M406.0 737.4C412.5 739.5 432.6 749.5 445.0 749.9C457.3 750.3 467.9 740.3 479.9 739.9C492.0 739.5 504.9 747.4 517.4 747.4C529.9 747.4 544.5 744.9 554.9 739.9C565.3 734.9 573.6 725.3 579.9 717.4C586.1 709.5 590.3 696.6 592.4 692.4M440.0 829.9C441.6 824.9 445.0 806.1 450.0 799.9C455.0 793.6 463.7 799.0 470.0 792.4C476.2 785.7 487.9 776.1 487.4 759.9C487.0 743.7 470.8 705.8 467.5 694.9M440.0 829.9C447.1 827.8 468.3 816.5 482.4 817.4C496.6 818.2 511.2 832.1 524.9 834.8C538.7 837.6 558.2 833.8 564.9 833.6M564.9 833.6C563.2 823.8 555.3 790.5 554.9 774.9C554.5 759.3 561.1 745.7 562.4 739.9M440.0 829.9C437.5 833.2 426.6 842.8 425.0 849.8C423.3 856.8 429.1 868.2 430.0 871.8M617.4 767.4C616.9 772.8 612.4 789.0 614.9 799.9C617.4 810.7 624.9 824.0 632.3 832.3C639.8 840.7 654.8 843.3 659.8 849.8C664.8 856.4 661.9 868.2 662.3 871.8M549.9 248.7C552.0 238.7 558.2 206.8 562.4 188.7C566.6 170.6 572.4 152.1 574.9 140.0C577.4 127.9 577.0 120.2 577.4 116.2M549.9 248.7C549.1 254.7 545.9 273.9 544.9 284.9C543.9 295.9 547.8 305.9 543.7 314.9C539.5 323.8 523.9 334.6 519.9 338.6M549.9 248.7C555.7 248.9 572.4 248.0 584.9 249.9C597.4 251.8 613.6 254.9 624.9 259.9C636.1 264.9 641.5 275.7 652.3 279.9C663.2 284.1 679.4 284.1 689.8 284.9C700.2 285.7 710.6 284.9 714.8 284.9M562.4 188.7C568.6 187.7 585.3 181.8 599.9 182.5C614.4 183.1 634.6 188.5 649.8 192.4C665.0 196.4 678.6 204.1 691.1 206.2C703.6 208.3 710.0 207.2 724.8 204.9C739.6 202.6 770.8 194.5 780.0 192.4M513.7 243.7C516.0 245.5 521.4 254.1 527.4 254.9C533.5 255.7 546.2 249.7 549.9 248.7M521.2 213.7C519.9 218.7 516.4 235.1 513.7 243.7C511.0 252.2 510.1 258.9 504.9 264.9C499.7 270.9 486.2 277.4 482.4 279.9M549.9 150.0C548.2 153.7 543.7 165.4 539.9 172.5C536.2 179.5 530.5 185.6 527.4 192.4C524.3 199.3 522.2 210.1 521.2 213.7M543.7 314.9C546.4 318.2 555.5 323.6 559.9 334.9C564.3 346.1 568.2 374.4 569.9 382.3M584.9 249.9C586.5 253.2 589.5 261.2 594.9 269.9C600.3 278.6 608.2 291.5 617.4 302.4C626.5 313.2 639.4 325.3 649.8 334.9C660.2 344.4 671.5 349.0 679.8 359.8C688.1 370.7 696.5 393.4 699.8 400.1M714.8 284.9C716.0 289.1 718.1 301.5 722.3 309.9C726.5 318.2 730.2 326.5 739.8 334.9C749.4 343.2 773.3 355.7 780.0 359.8M823.7 196.2C826.8 201.4 833.1 216.8 842.4 227.4C851.8 238.0 867.8 250.3 879.9 259.9C892.0 269.5 905.7 277.4 914.9 284.9C924.1 292.4 929.9 298.2 934.9 304.9C939.9 311.5 943.2 321.5 944.9 324.9M823.7 196.2C819.3 193.5 808.1 181.8 797.5 180.0C786.9 178.1 766.2 184.1 760.0 185.0M823.7 196.2C823.5 201.0 822.3 216.0 822.5 224.9C822.7 233.9 820.4 243.2 825.0 249.9C829.5 256.6 840.8 259.1 849.9 264.9C859.1 270.7 869.1 279.1 879.9 284.9C890.7 290.7 905.7 296.5 914.9 299.9C924.1 303.2 931.6 304.0 934.9 304.9M823.7 196.2 835.0 177.5M823.7 196.2C829.7 194.3 850.6 188.2 859.9 185.0C869.3 181.7 876.6 178.3 879.9 177.0M842.4 227.4C847.9 227.8 863.7 227.0 874.9 229.9C886.2 232.8 902.4 239.1 909.9 244.9C917.4 250.7 917.8 258.7 919.9 264.9C922.0 271.1 919.9 276.6 922.4 282.4C924.9 288.2 932.8 297.0 934.9 299.9M944.9 324.9C944.0 328.6 939.1 339.9 939.9 347.3C940.7 354.8 946.5 361.0 949.9 369.8C953.2 378.6 958.2 395.0 959.9 400.1M934.9 304.9C934.1 309.9 930.3 327.4 929.9 334.9C929.5 342.3 932.0 347.3 932.4 349.8M898.7 356.1C895.1 360.0 883.9 372.5 877.4 379.8C871.0 387.2 862.8 396.7 859.9 400.1M944.9 177.0C944.9 183.7 943.2 208.2 944.9 217.4C946.5 226.7 952.4 225.3 954.9 232.4C957.4 239.5 959.5 251.2 959.9 259.9C960.3 268.6 959.0 277.0 957.4 284.9C955.7 292.8 951.1 303.6 949.9 307.4M954.9 232.4C958.2 235.3 968.2 243.7 974.9 249.9C981.5 256.2 987.4 264.1 994.8 269.9C1002.3 275.7 1011.5 272.4 1019.8 284.9C1028.2 297.4 1040.7 334.9 1044.8 344.8M959.9 259.9C964.0 266.6 976.5 291.5 984.9 299.9C993.2 308.2 1001.5 304.0 1009.8 309.9C1018.2 315.7 1029.0 329.0 1034.8 334.9C1040.7 340.7 1040.7 338.6 1044.8 344.8C1049.0 351.1 1054.8 363.1 1059.8 372.3C1064.8 381.5 1072.3 395.4 1074.8 400.1M1049.8 177.0C1050.2 185.0 1049.8 212.8 1052.3 224.9C1054.8 237.1 1059.4 239.9 1064.8 249.9C1070.2 259.9 1081.0 270.7 1084.8 284.9C1088.5 299.0 1083.1 324.0 1087.3 334.9C1091.5 345.7 1101.0 349.8 1109.8 349.8C1118.6 349.8 1135.0 337.4 1140.0 334.9M1052.3 224.9C1047.7 223.3 1032.7 221.6 1024.8 214.9C1016.9 208.3 1008.2 189.9 1004.8 185.0M1052.3 224.9C1057.7 222.4 1074.0 216.6 1084.8 209.9C1095.6 203.3 1108.1 188.3 1117.3 185.0C1126.5 181.6 1136.2 189.1 1140.0 189.9M1064.8 249.9C1072.3 251.6 1097.2 259.9 1109.8 259.9C1122.3 259.9 1135.0 251.6 1140.0 249.9M1100.0 214.9C1104.2 217.4 1117.1 223.9 1125.0 229.9C1132.9 236.0 1139.1 242.0 1147.5 251.2C1155.8 260.3 1166.2 275.5 1175.0 284.9C1183.7 294.3 1189.9 303.0 1199.9 307.4C1209.9 311.7 1225.8 306.5 1234.9 311.1C1244.1 315.7 1248.2 327.6 1254.9 334.9C1261.6 342.1 1266.1 350.7 1274.9 354.8C1283.6 359.0 1302.0 359.0 1307.4 359.8M1147.5 251.2C1144.6 252.6 1137.9 254.7 1130.0 259.9C1122.1 265.1 1105.0 278.6 1100.0 282.4M1147.5 251.2C1147.1 255.9 1145.8 271.8 1145.0 279.9C1144.1 288.0 1142.9 296.5 1142.5 299.9M1234.9 311.1C1230.7 313.4 1217.4 319.7 1209.9 324.9C1202.4 330.1 1192.4 332.4 1189.9 342.3C1187.4 352.3 1192.4 375.2 1194.9 384.8C1197.4 394.4 1203.3 397.5 1204.9 400.1M1234.9 311.1C1233.2 306.7 1226.2 293.4 1224.9 284.9C1223.7 276.4 1227.0 264.1 1227.4 259.9M1234.9 311.1C1237.4 306.7 1245.7 293.4 1249.9 284.9C1254.1 276.4 1259.9 269.1 1259.9 259.9C1259.9 250.7 1249.5 243.7 1249.9 229.9C1250.3 216.1 1260.3 185.8 1262.4 177.0M1304.9 213.7C1305.3 208.9 1308.2 193.9 1307.4 185.0C1306.5 176.0 1302.8 168.3 1299.9 160.0C1297.0 151.6 1289.0 141.6 1289.9 135.0C1290.7 128.3 1302.4 122.5 1304.9 120.0M1304.9 213.7 1324.9 222.4M1357.3 341.1C1357.3 335.9 1358.2 317.6 1357.3 309.9C1356.5 302.2 1353.2 297.4 1352.3 294.9M1357.3 341.1C1354.4 339.2 1345.3 332.1 1339.8 329.9C1334.4 327.6 1327.4 327.8 1324.9 327.4M1357.3 341.1C1360.2 344.2 1371.5 352.6 1374.8 359.8C1378.2 367.1 1376.9 380.7 1377.3 384.8M1357.3 328.6C1359.4 323.8 1366.5 307.6 1369.8 299.9C1373.2 292.2 1376.1 285.3 1377.3 282.4M1208.7 426.2C1211.4 424.8 1219.7 422.7 1224.9 417.5C1230.1 412.3 1239.1 401.2 1239.9 395.0C1240.7 388.7 1231.6 382.5 1229.9 380.0M1208.7 426.2C1204.3 425.6 1192.2 425.2 1182.4 422.5C1172.7 419.8 1159.5 411.6 1150.0 410.0C1140.4 408.3 1133.3 413.3 1125.0 412.5C1116.7 411.6 1104.2 406.2 1100.0 405.0M1208.7 426.2C1206.4 421.0 1197.2 402.7 1194.9 395.0C1192.6 387.3 1194.9 382.5 1194.9 380.0M1351.8 425.0 1354.8 417.5M1351.1 494.9 1349.8 484.9M1177.4 496.2C1179.9 494.7 1187.9 491.0 1192.4 487.4C1197.0 483.9 1202.0 478.7 1204.9 474.9C1207.8 471.2 1209.1 466.6 1209.9 464.9M1177.4 496.2C1179.5 498.5 1187.4 503.9 1189.9 509.9C1192.4 516.0 1189.1 524.9 1192.4 532.4C1195.8 539.9 1200.4 547.0 1209.9 554.9C1219.5 562.8 1243.2 575.7 1249.9 579.9M1177.4 496.2C1175.0 498.5 1167.0 505.5 1162.5 509.9C1157.9 514.3 1156.2 519.1 1150.0 522.4C1143.7 525.7 1133.3 528.2 1125.0 529.9C1116.7 531.6 1104.2 532.0 1100.0 532.4M1177.4 496.2C1181.2 497.6 1194.1 504.3 1199.9 504.9C1205.8 505.5 1210.3 500.8 1212.4 499.9M1182.4 489.9C1185.4 491.2 1195.4 494.1 1199.9 497.4C1204.5 500.8 1205.8 504.5 1209.9 509.9C1214.1 515.3 1218.7 523.7 1224.9 529.9C1231.2 536.1 1238.7 543.2 1247.4 547.4C1256.1 551.6 1272.4 553.6 1277.4 554.9M1172.5 499.9C1174.5 500.8 1181.2 505.3 1184.9 504.9C1188.7 504.5 1195.4 499.9 1194.9 497.4C1194.5 494.9 1186.2 489.5 1182.4 489.9C1178.7 490.3 1174.1 498.3 1172.5 499.9M1184.9 479.9C1186.6 481.6 1192.4 485.8 1194.9 489.9C1197.4 494.1 1200.4 500.8 1199.9 504.9C1199.5 509.1 1193.7 513.2 1192.4 514.9M1192.4 532.4C1189.5 534.1 1181.6 542.8 1175.0 542.4C1168.3 542.0 1156.2 532.0 1152.5 529.9M1277.4 554.9C1276.6 558.2 1277.0 570.7 1272.4 574.9C1267.8 579.0 1255.3 570.7 1249.9 579.9C1244.5 589.0 1243.2 614.8 1239.9 629.8C1236.6 644.9 1231.6 663.4 1229.9 670.1M1277.4 554.9C1280.3 558.2 1288.6 568.8 1294.9 574.9C1301.1 580.9 1311.5 588.4 1314.9 591.1M1277.4 554.9C1275.3 557.4 1269.5 565.7 1264.9 569.9C1260.3 574.0 1252.4 578.2 1249.9 579.9M1125.0 529.9C1125.4 534.1 1126.6 548.2 1127.5 554.9C1128.3 561.5 1129.6 567.4 1130.0 569.9M1229.9 600.0C1231.6 605.0 1241.2 619.2 1239.9 630.0C1238.7 640.8 1228.2 656.2 1222.4 665.0C1216.6 673.7 1214.5 677.4 1204.9 682.4C1195.4 687.4 1175.8 688.7 1165.0 694.9C1154.1 701.2 1145.0 709.1 1140.0 719.9C1135.0 730.7 1135.2 749.5 1135.0 759.9C1134.8 770.3 1138.1 778.6 1138.7 782.4M1135.0 759.9C1131.6 758.2 1120.8 753.2 1115.0 749.9C1109.2 746.6 1102.5 741.6 1100.0 739.9" fill="none" stroke="#f3a0b8" stroke-width=".9" stroke-linejoin="round" opacity=".9"/><path d="M672.3 177.0 643.6 194.9 609.9 213.7 589.9 227.4 579.9 234.9 569.9 232.4 559.9 227.4 549.9 229.9 539.9 229.9M643.6 194.9 651.1 234.9 659.8 239.9M659.8 239.9 587.4 264.9 617.4 302.4 599.9 322.4 579.9 327.4 554.9 352.3 519.4 339.9M659.8 239.9 697.3 249.9 780.0 304.9 835.0 352.3 897.4 356.1 924.9 358.6 932.4 376.1 954.9 376.8M897.4 356.1 912.4 319.9 944.9 322.4 957.4 329.9M864.9 177.0 869.9 185.0 882.4 204.9 899.9 217.4 922.4 232.4 934.9 252.4 938.6 282.4 942.4 284.9 944.9 307.4 957.4 322.4M496.2 269.9 516.2 336.1M539.9 229.9 537.4 249.9 536.2 269.9 519.4 339.9M542.4 150.0 554.9 160.0 549.9 180.0 539.9 192.4 539.9 229.9M519.9 202.4 529.9 199.9 539.9 192.4M542.4 150.0 569.9 152.5 572.4 177.0M406.0 610.4 461.2 610.4 473.7 619.8 487.4 619.8 491.2 610.4 588.6 610.4M1051.1 523.7 1057.3 534.9 1089.8 577.4 1140.0 583.6 1173.7 587.4M1173.7 587.4 1189.4 609.4 1188.7 610.0 1167.5 679.9 1100.0 702.4 1071.0 713.7M1071.0 713.7 977.4 727.4 947.4 742.4 919.9 782.4 909.9 784.4 899.9 772.4 854.9 769.9 839.9 764.9 792.5 763.6 787.5 774.9 785.0 792.4 775.0 802.4 760.0 797.4M1071.0 713.7 1108.5 799.9M1173.7 587.4 1184.9 549.9 1192.4 529.9 1194.9 509.9 1204.9 504.9 1209.9 497.4 1207.4 484.9 1211.2 479.9M1209.9 466.2 1204.9 474.9 1199.9 477.4M1367.3 116.2 1362.3 135.0 1354.8 150.0 1357.3 157.5 1347.3 165.0 1348.6 182.5 1357.3 188.7 1349.8 202.4 1354.8 227.4 1357.3 249.9 1357.3 266.1 1384.8 269.9 1388.6 284.9 1382.3 299.9 1358.6 328.6M1358.6 328.6 1409.8 344.8 1434.8 342.3M1358.6 328.6 1374.8 354.8 1387.3 372.3 1393.4 374.9 1418.9 389.1 1420.3 423.1 1434.5 425.9 1433.1 440.1 1393.4 457.1 1384.9 479.8 1380.7 508.2M1399.8 116.2 1404.8 125.0 1424.8 117.5M637.3 747.4 624.9 762.4 614.9 766.1 599.9 772.4 594.9 779.9 586.1 781.1 584.9 799.9 574.9 824.9 567.4 849.8 569.9 871.8M588.6 871.8 604.9 864.8 614.9 854.8 624.9 868.6 649.8 864.8 674.8 871.8" fill="none" stroke="#b79fd2" stroke-width="1.25" stroke-linejoin="round"/><path d="M1289.4 413.6h8.5M1288.2 414.7h10.8M1287.4 415.8h12.4M1287.1 416.9h13.0M1287.4 418.0h12.4M1288.2 419.1h10.8M1289.4 420.2h8.5" stroke="#7fd0cf" stroke-width=".55" fill="none"/><path d="M1341.3 167.2h9.6M1339.7 168.3h12.8M1339.1 169.4h14.0M1339.7 170.5h12.8M1341.3 171.6h9.6" stroke="#7fd0cf" stroke-width=".55" fill="none"/><path d="M1357.1 227.2h5.5M1356.2 228.3h7.3M1355.8 229.4h8.0M1356.2 230.5h7.3M1357.1 231.6h5.5" stroke="#7fd0cf" stroke-width=".55" fill="none"/><path d="M1370.4 265.7h3.9M1369.8 266.8h5.0M1370.4 267.9h3.9" stroke="#7fd0cf" stroke-width=".55" fill="none"/><path d="M1387.6 327.2h14.4M1385.2 328.3h19.3M1385.2 329.4h19.3M1387.6 330.5h14.4" stroke="#7fd0cf" stroke-width=".55" fill="none"/><path d="M1403.0 323.2h6.2M1402.1 324.3h8.0M1403.0 325.4h6.2" stroke="#7fd0cf" stroke-width=".55" fill="none"/><path d="M1422.8 383.4h8.9M1421.7 384.5h11.2M1420.8 385.6h12.9M1420.3 386.7h13.9M1420.3 387.8h13.9M1420.8 388.9h12.9M1421.7 390.0h11.2M1422.8 391.1h8.9" stroke="#7fd0cf" stroke-width=".55" fill="none"/><path d="M1106.2 505.5h7.7M1105.2 506.6h9.6M1104.4 507.7h11.1M1104.0 508.8h11.9M1104.0 509.9h11.9M1104.4 511.0h11.1M1105.2 512.1h9.6M1106.2 513.2h7.7" stroke="#7fd0cf" stroke-width=".55" fill="none"/><path d="M1099.4 239.0h3.6M1098.8 240.1h4.8M1098.8 241.2h4.8M1099.4 242.3h3.6" stroke="#7fd0cf" stroke-width=".55" fill="none"/><path d="M1118.5 277.5h6.9M1118.5 278.6h6.9" stroke="#7fd0cf" stroke-width=".55" fill="none"/><path d="M1094.4 237.7h5.8M1093.4 238.8h7.7M1093.4 239.9h7.7M1094.4 241.0h5.8" stroke="#7fd0cf" stroke-width=".55" fill="none"/><path d="M1091.7 183.3h6.2M1090.8 184.4h8.0M1091.7 185.5h6.2" stroke="#7fd0cf" stroke-width=".55" fill="none"/><path d="M1194.9 622.8h6.5M1193.8 623.9h8.7M1193.8 625.0h8.7M1194.9 626.1h6.5" stroke="#7fd0cf" stroke-width=".55" fill="none"/><path d="M1119.6 275.7h5.4M1118.8 276.8h7.0M1119.6 277.9h5.4" stroke="#7fd0cf" stroke-width=".55" fill="none"/><path d="M466.7 695.7C468.1 700.6 471.5 714.4 475.0 724.9C478.4 735.5 486.2 749.7 487.4 758.9C488.7 768.1 485.4 774.7 482.4 779.9C479.5 785.0 475.4 785.3 470.0 789.9C464.5 794.5 454.8 800.5 450.0 807.4C445.2 814.2 443.7 824.0 441.2 831.1C438.7 838.2 436.6 843.1 435.0 849.8C433.3 856.6 431.9 868.2 431.2 871.8" fill="none" stroke="#bfe6dc" stroke-width=".9"/><path d="M423.7 717.4C424.5 716.3 426.2 715.4 427.5 715.4C428.7 715.4 430.9 716.3 431.2 717.4C431.6 718.6 430.5 721.2 429.5 722.4C428.4 723.7 426.1 725.0 425.0 724.9C423.9 724.8 423.2 723.2 423.0 721.9C422.8 720.7 423.0 718.5 423.7 717.4z" fill="#86cdc0"/><path d="M466.7 695.7C463.9 697.2 455.9 701.3 450.0 704.9C444.1 708.6 434.4 715.3 431.2 717.4" fill="none" stroke="#bfe6dc" stroke-width=".9"/><path d="M487.4 758.9C491.6 762.4 504.5 771.8 512.4 779.9C520.3 788.0 530.3 800.7 534.9 807.4C539.5 814.0 539.1 817.8 539.9 819.9" fill="none" stroke="#cfeadf" stroke-width=".7"/><path d="M679.1 810.7h0M709.6 817.1h0M704.7 825.9h0M678.0 804.1h0M684.0 825.2h0M690.7 822.8h0M687.7 848.2h0M703.1 840.5h0M688.0 819.7h0M697.6 818.0h0M715.0 821.1h0M705.9 820.3h0M699.8 849.3h0M715.6 818.6h0M688.0 828.8h0M701.0 827.4h0M757.9 787.5h0M738.8 795.1h0M740.8 792.1h0M767.0 791.7h0M744.8 778.7h0M746.7 783.2h0M747.5 787.5h0M750.3 786.6h0M763.6 782.8h0M738.3 791.7h0M682.9 830.3h0M675.9 817.8h0M679.6 824.8h0M679.8 815.4h0M669.6 817.4h0M675.9 823.5h0M594.9 605.4h0M603.0 665.7h0M596.2 658.6h0M598.4 637.8h0M601.6 663.9h0M660.1 683.2h0M664.1 658.2h0M665.1 677.8h0M667.7 698.0h0" stroke="#eef2d2" stroke-width="1.8" stroke-linecap="round" fill="none" opacity=".9"/><rect x="801.4" y="546.7" width="15.3" height="7.0" fill="#b7de8a" opacity=".75" transform="rotate(30 809.1 550.2)"/><rect x="862.7" y="561.0" width="11.1" height="9.8" fill="#b7de8a" opacity=".75" transform="rotate(20 868.3 565.9)"/><rect x="830.0" y="548.8" width="13.9" height="6.3" fill="#b7de8a" opacity=".75" transform="rotate(30 836.9 552.0)"/><rect x="717.1" y="571.8" width="9.8" height="12.5" fill="#b7de8a" opacity=".75" transform="rotate(0 722.0 578.1)"/><rect x="922.6" y="648.1" width="9.8" height="16.7" fill="#b7de8a" opacity=".75" transform="rotate(-10 927.5 656.5)"/><rect x="973.5" y="599.0" width="12.5" height="7.0" fill="#b7de8a" opacity=".75" transform="rotate(35 979.8 602.5)"/><rect x="988.5" y="637.7" width="7.0" height="9.8" fill="#b7de8a" opacity=".75" transform="rotate(-30 992.0 642.5)"/><rect x="880.1" y="740.8" width="11.1" height="5.6" fill="#b7de8a" opacity=".75" transform="rotate(0 885.7 743.6)"/><rect x="944.3" y="608.4" width="8.4" height="5.6" fill="#b7de8a" opacity=".75" transform="rotate(30 948.4 611.2)"/><rect x="995.1" y="668.7" width="11.1" height="3.5" fill="#b7de8a" opacity=".75" transform="rotate(40 1000.7 670.4)"/><rect x="959.6" y="617.1" width="5.6" height="5.6" fill="#b7de8a" opacity=".75" transform="rotate(0 962.4 619.9)"/><rect x="764.5" y="496.2" width="5.6" height="3.5" fill="#b7de8a" opacity=".75" transform="rotate(0 767.2 497.9)"/><rect x="847.4" y="517.1" width="7.0" height="3.5" fill="#b7de8a" opacity=".75" transform="rotate(30 850.9 518.9)"/><rect x="917.1" y="491.0" width="7.0" height="3.5" fill="#b7de8a" opacity=".75" transform="rotate(20 920.6 492.7)"/><rect x="1010.5" y="762.8" width="8.4" height="3.5" fill="#b7de8a" opacity=".75" transform="rotate(50 1014.6 764.5)"/><rect x="1048.1" y="677.0" width="9.8" height="4.2" fill="#b7de8a" opacity=".75" transform="rotate(50 1053.0 679.1)"/><rect x="1032.8" y="649.5" width="5.6" height="3.5" fill="#b7de8a" opacity=".75" transform="rotate(50 1035.5 651.3)"/><path d="M1045.5 741.3l1.4 1.3M1042.4 711.8l1.9 2.2M1019.9 812.0l0.4 1.6M1044.4 688.3l0.5 1.1M1109.4 747.6l1.4 1.5M987.5 719.6l1.1 1.5M993.8 775.4l0.8 1.3M1015.6 728.6l2.0 1.7M994.7 725.0l2.4 1.7M1024.5 822.5l1.1 1.2M914.4 790.6l1.5 2.4M1059.9 747.8l0.8 2.4M1005.3 654.7l1.0 0.9M1007.6 773.9l1.1 0.9M1053.1 730.2l1.3 1.9M1041.7 798.0l1.6 2.1M1010.4 675.1l1.0 2.1M1061.2 748.6l1.6 2.2M1072.1 684.1l1.7 1.4M967.4 671.3l0.5 1.2M1043.6 752.0l1.0 1.3M1017.9 739.6l1.2 2.2M973.8 701.3l1.1 2.5M1056.8 808.9l0.6 2.6M1059.9 743.6l0.8 1.2M1033.7 704.2l0.7 0.8M980.3 707.7l1.4 1.9M1123.8 621.0l0.9 1.5M912.4 700.6l0.9 1.2M998.6 614.9l1.2 1.5M1086.9 782.5l1.6 1.4M975.1 765.0l1.5 1.5M927.5 693.2l1.2 2.2M1022.1 680.6l2.0 2.1M1050.8 651.1l1.0 0.8M1061.5 700.6l0.7 0.6M1071.8 648.5l2.1 1.8M1078.9 786.7l1.5 1.4M1070.5 754.6l0.7 0.8M1009.4 654.5l1.3 1.3M1091.5 821.9l1.0 1.4M1054.5 785.3l0.1 0.8M1131.1 615.8l1.0 0.9M990.0 683.0l1.8 1.4M1072.7 694.1l1.9 2.3M1048.7 749.3l2.3 1.6M1133.9 704.4l1.4 1.9M1054.7 740.9l0.8 1.7M1013.7 802.5l2.0 2.1M1054.0 738.6l0.8 2.4M1174.0 743.0l0.5 1.1M1054.1 723.2l0.9 1.2M1000.2 759.9l0.9 0.8M1088.9 730.8l0.6 1.2M950.6 738.7l1.2 2.2M1056.4 663.7l1.1 0.9M1102.0 704.2l0.6 0.8M1060.8 729.0l0.9 1.8M987.5 664.8l0.7 0.8M968.2 748.9l1.5 1.5M1077.7 779.5l1.4 1.9M1103.0 835.7l1.1 1.2M982.2 736.4l2.1 2.1M984.1 748.8l1.2 1.5M886.5 695.7l1.7 0.9M1108.1 706.6l0.9 1.4M983.5 769.7l2.3 1.7M1025.2 628.4l0.5 1.7M1070.8 725.9l1.5 2.5M937.9 680.5l0.9 1.7M1097.0 686.8l1.4 1.5M997.8 737.5l1.7 2.3M971.4 746.9l0.8 1.3M983.8 677.0l1.3 1.7M1039.5 719.3l0.5 1.4M1107.2 688.4l0.7 0.5M957.5 724.1l0.8 0.8M921.3 767.0l0.3 0.7M1103.8 725.9l0.8 1.6M1102.3 825.5l1.2 2.0M1060.7 677.1l0.8 1.6M987.3 688.0l0.8 0.7M1065.5 806.9l0.5 0.8M984.7 648.7l1.0 2.7M994.5 618.9l0.3 0.7M1114.5 590.2l1.4 2.5M1011.4 602.8l1.6 2.0M995.4 672.3l1.0 1.8M1058.4 605.3l0.8 0.7M1029.6 625.1l0.7 2.3M950.6 758.7l1.1 1.4M951.4 653.0l0.6 0.9M977.7 661.7l1.3 1.2M1072.1 757.3l0.5 0.9M1067.8 688.6l1.0 1.4M950.2 599.0l0.8 2.4M1010.6 658.9l1.0 1.5M1057.2 683.5l0.6 0.6M1012.9 645.5l1.4 1.6M952.3 724.8l2.0 1.5M1018.3 665.3l1.5 2.2M1076.3 665.8l1.1 1.1M968.6 527.4l0.9 0.4M1025.4 651.9l1.2 1.8M1110.2 689.3l0.9 0.6M1014.4 682.9l1.7 1.5M957.5 736.2l0.8 1.4M983.5 713.1l2.2 1.6M1038.4 677.9l1.1 1.6M1008.0 710.0l0.5 1.0M937.6 547.2l1.3 2.0M1029.9 632.0l0.7 1.0M978.1 713.1l1.8 1.9M944.0 666.4l1.2 2.4M1023.2 663.0l0.7 1.4M980.4 661.6l0.8 1.5M951.6 670.9l0.9 0.6M1109.3 702.3l1.8 2.0M941.1 685.1l1.3 1.7M975.1 757.2l1.1 2.2M1038.3 730.5l0.4 1.7M1078.3 604.6l0.7 1.0M911.5 660.1l0.7 0.6M1068.5 684.3l1.7 1.7M1019.4 618.9l0.9 0.6M1016.7 655.8l2.1 1.7M1083.4 632.6l1.1 2.7M942.5 710.0l1.4 1.7M1013.8 632.9l0.8 1.0M1035.9 680.0l0.7 1.5M944.0 692.1l1.1 2.1M961.8 652.3l1.9 1.2M985.4 678.9l0.3 1.1M915.4 702.3l0.6 1.0M953.7 729.0l0.9 1.6M997.2 742.4l0.4 1.2M1054.5 618.4l0.5 0.8M1076.7 656.5l1.0 1.2M1030.4 515.4l1.5 1.0M934.6 608.1l0.7 2.0M1051.1 550.5l1.6 2.3M991.4 637.1l1.4 1.7M1084.2 541.3l0.4 1.0M1080.4 750.3l1.1 1.4M1043.6 787.5l1.1 1.6M1126.6 777.7l1.2 2.2M1112.7 730.5l0.6 2.3M1129.5 753.4l0.6 0.9M1156.6 784.0l2.1 1.5M1133.3 748.6l1.9 1.7M1047.9 761.1l2.2 1.9M1090.4 696.0l0.5 1.0M1059.3 761.7l1.1 2.0M1045.6 757.3l1.6 1.5M1091.4 795.0l0.6 1.4M1111.2 713.7l1.3 1.7M1070.5 800.9l0.7 1.2M1129.6 717.8l0.3 1.4M1185.0 741.1l1.7 1.1M1129.5 756.8l1.3 1.7M1199.3 776.1l1.2 2.0M1127.0 748.9l1.3 1.3M1225.7 766.1l1.3 1.1M1099.0 714.5l0.4 0.7M1194.7 756.4l1.2 2.3M1154.8 744.9l0.3 1.8M1164.5 720.2l1.2 1.6M1112.8 806.4l1.2 1.8M1139.3 698.9l1.2 2.4M1059.1 759.6l0.4 1.0M1180.6 787.3l0.7 0.5M1019.6 757.5l1.0 1.5M1169.4 809.4l1.1 1.5M1082.6 766.6l1.2 2.0M1089.2 784.1l0.9 1.4M1133.0 758.9l1.3 1.2M1006.3 805.3l1.6 2.1M971.8 552.5l0.9 0.9M1020.4 582.7l0.5 0.9M1005.3 601.8l1.3 2.7M993.7 677.4l0.8 1.8M984.9 587.1l0.6 0.6M968.5 567.2l1.0 0.9M915.1 572.3l0.9 1.3M951.5 630.1l0.6 1.1M970.9 478.6l2.0 2.1M976.1 553.6l0.9 1.3M1003.9 579.4l0.9 0.8M992.9 511.7l1.5 1.0M917.2 572.0l1.1 1.9M938.7 557.9l0.6 1.3M935.0 706.0l1.9 1.8M970.4 579.3l1.3 1.9M892.5 541.8l1.5 1.3M946.4 645.5l1.8 1.7M989.2 537.4l0.6 2.7M1013.6 710.0l0.9 2.4M941.2 647.3l1.3 1.0M925.3 683.0l0.5 1.8M868.6 646.1l0.5 1.3M962.4 673.9l0.5 0.9M902.8 699.7l1.5 1.7M938.4 511.7l0.6 1.4M933.0 703.3l0.6 1.5M997.1 631.6l1.0 2.5M916.2 636.6l1.2 1.1M930.3 504.1l0.4 1.2M996.9 670.1l1.5 2.4M1010.6 582.3l1.0 1.4M1001.4 583.3l1.2 2.3M918.3 602.8l1.0 1.9M970.4 610.1l1.9 2.2M967.0 650.5l0.9 1.4M952.0 609.6l1.5 1.7M961.7 744.3l1.0 2.0M1011.4 588.6l1.3 2.0M956.6 661.4l1.2 1.6M1094.6 592.6l0.5 0.7M1130.0 637.8l0.8 2.4M1052.4 593.9l1.3 1.6M1091.4 652.2l0.5 0.8M1157.9 691.9l0.4 0.9M1156.6 668.6l0.7 1.0M1168.5 734.4l1.2 2.6M1063.5 677.7l1.5 2.2M1068.3 672.0l2.3 1.8M1044.3 672.4l0.8 1.1M1122.3 682.5l1.5 1.2M1147.0 645.2l0.4 2.8M1079.0 715.9l1.2 1.5M1150.2 643.6l2.1 2.0M1056.7 680.5l1.4 1.8M1063.4 599.3l0.6 1.6M1091.2 683.6l0.8 1.1M1133.9 631.3l0.8 1.4M1144.9 635.4l1.2 2.3M1058.9 702.7l0.3 1.0M1045.9 688.2l1.4 2.2M1067.4 701.3l0.6 0.5M879.2 847.5l0.7 2.2M892.0 765.4l0.7 0.7M901.4 787.6l1.3 2.2M907.3 749.4l1.7 2.0M865.2 813.8l1.6 2.0M938.1 792.7l1.0 1.3M894.5 808.5l0.6 1.1M908.8 771.7l2.0 2.2M806.0 824.0l1.0 2.1M841.4 799.6l0.5 1.8M883.5 737.1l0.7 0.7M964.7 804.9l1.3 1.7M969.4 790.5l2.0 2.2M924.1 778.9l0.6 1.0M748.5 621.3l1.5 2.5M861.6 481.7l1.3 2.3M885.9 564.5l0.4 0.7M844.7 559.5l1.1 1.7M962.6 560.5l1.1 1.2M775.1 571.5l1.6 2.4M840.3 662.5l1.7 2.2M673.1 561.6l0.5 1.4M816.7 603.6l0.5 0.8M669.4 642.1l0.9 1.4M954.9 596.0l1.4 2.3M867.4 740.4l1.2 2.5M818.9 597.5l2.2 1.4M742.0 555.4l1.1 2.2M752.6 553.1l0.5 0.7M897.2 706.1l0.7 2.5M750.4 573.0l1.2 2.6M798.3 497.2l2.1 1.3M840.3 639.2l1.1 2.4M805.9 507.4l0.8 1.4M649.4 526.0l0.6 0.7M752.9 586.3l1.1 1.0M772.3 531.2l0.9 2.7M906.1 721.9l1.3 1.1M706.2 445.7l1.5 1.6M1038.1 717.4l1.6 2.4M744.1 467.8l0.4 0.8M977.2 545.7l1.0 1.4M821.3 546.0l0.6 0.7M970.6 708.9l0.7 1.2M865.2 553.9l0.5 1.4M899.1 462.4l0.6 0.8M824.9 583.7l0.8 1.4M866.7 481.2l1.4 2.1M819.8 492.2l1.8 2.4M804.4 592.0l0.8 1.1M837.6 558.9l0.7 1.5M980.3 588.4l1.2 1.7M732.1 595.7l1.5 2.4M849.9 674.6l1.2 1.5M811.4 528.4l0.8 1.1M870.1 597.2l1.1 1.7M775.0 591.8l0.8 1.0M815.1 506.0l1.4 2.2M778.9 497.7l0.6 0.9M668.5 503.9l0.6 0.9M637.5 569.9l0.6 0.9M784.0 618.4l0.7 1.9M657.3 614.9l1.8 1.7M727.1 596.4l1.5 1.8M732.2 626.9l1.6 1.8M614.4 477.3l1.6 1.5M690.3 532.9l0.8 1.1M727.1 497.1l0.8 1.4M774.5 475.8l0.4 1.1M883.1 632.6l0.9 1.2M968.9 568.5l0.4 0.8M761.0 593.5l0.8 1.3M669.6 515.1l0.9 2.7M657.0 544.3l0.9 1.5M714.8 622.5l0.6 0.8M715.2 570.4l1.5 2.0M665.6 559.4l1.7 1.2M752.3 534.9l1.4 2.2M620.6 564.0l1.1 1.7M727.1 581.7l1.5 1.6M684.4 556.8l1.1 1.4M665.3 579.1l1.0 1.1M702.2 486.4l2.0 2.0M723.7 448.2l1.2 2.0M699.5 491.3l1.7 2.2" stroke="#c4e39a" stroke-width="1.1" fill="none" opacity=".85"/><path d="M1086.8 785.8l1.5 1.6M1075.5 759.0l1.1 1.2M1153.2 688.7l1.8 0.6M1017.2 776.5l0.9 2.0M1022.3 632.7l1.4 1.2M969.8 618.3l1.0 0.9M1093.2 661.6l0.5 0.7M1099.8 674.0l1.4 1.0M1098.9 666.0l0.8 0.8M1027.2 773.1l0.9 0.8M996.8 733.4l0.7 0.5M968.7 804.5l1.3 2.6M1125.6 695.4l1.8 1.5M1098.9 749.2l1.2 1.4M1095.3 683.4l0.8 2.2M936.6 801.9l1.4 1.2M909.8 706.7l1.1 1.8M1041.2 678.9l1.8 1.8M1015.4 709.6l0.7 1.1M995.7 769.4l1.0 2.0M1012.4 638.6l1.6 1.8M1077.5 700.2l1.5 1.5M1055.5 697.7l1.2 1.3M1051.8 776.1l0.4 0.8M1061.3 692.7l0.4 1.8M1053.9 800.6l1.6 2.0M1042.2 743.0l0.9 1.2M1075.9 705.5l1.4 2.3M1024.7 720.2l1.2 2.2M1031.9 719.0l1.6 2.1M1064.5 670.1l0.9 2.0M1132.5 662.2l0.8 2.4M982.5 690.0l1.5 2.1M1083.9 690.9l1.4 0.9M1123.4 736.9l1.5 2.0M1020.2 787.1l1.1 1.8M1017.4 740.4l0.6 1.5M1091.8 717.9l1.3 1.6M1044.6 684.0l0.5 1.0M1023.8 691.7l2.5 1.6M1152.8 786.1l0.9 1.2M947.3 740.9l1.7 2.4M920.0 746.8l0.7 0.5M944.9 709.5l0.2 0.8M961.2 763.2l1.4 2.6M1005.6 683.4l0.2 1.1M996.4 667.4l1.9 1.6M1035.6 635.3l1.2 2.0M1007.4 781.0l1.3 1.4M1083.5 674.5l1.1 1.8M1124.7 746.5l1.6 2.4M1114.8 662.1l0.8 0.6M1091.9 699.3l1.4 2.0M1024.5 676.2l0.6 0.8M1027.7 682.1l1.1 1.5M1145.8 733.0l0.3 2.4M999.9 751.3l1.4 2.5M895.4 762.3l0.6 0.8M1127.6 773.2l1.6 2.0M1007.8 720.0l1.0 1.2M1087.7 791.8l0.7 1.0M974.1 680.8l2.1 1.2M996.6 632.5l1.0 0.9M1045.6 851.7l0.9 2.3M998.4 700.8l0.6 2.1M1023.4 703.7l1.4 1.4M1086.4 839.2l0.9 2.3M972.6 709.2l0.7 1.2M1062.3 831.3l1.0 2.0M1176.5 680.9l0.2 1.1M1142.9 738.0l0.8 1.1M1051.1 688.4l0.3 1.2M991.1 789.6l0.7 1.4M1076.1 640.2l2.6 0.8M979.2 687.4l0.6 1.1M1070.9 737.7l1.2 1.0M984.4 783.9l0.5 1.9M1074.9 682.0l1.2 2.4M1027.3 767.1l0.8 1.2M982.1 642.1l1.2 0.9M1011.2 690.2l1.2 0.5M923.9 669.4l0.9 0.6M998.6 725.3l1.4 1.4M996.4 776.0l1.1 1.6M1109.2 653.2l1.9 2.2M980.6 650.4l1.6 1.7M952.7 698.5l1.0 2.1M965.5 699.1l0.5 0.9M1077.7 659.7l1.2 1.3M999.5 667.8l1.7 2.4M1070.1 590.1l1.8 2.0M1078.1 657.4l0.1 0.8M1018.9 598.3l1.3 1.3M1047.7 648.3l1.8 2.1M996.7 580.5l0.7 0.7M967.5 690.7l1.4 1.0M1024.0 651.1l0.2 2.0M1010.8 662.9l0.8 1.1M1028.4 593.9l0.7 0.9M974.2 753.5l0.4 0.8M935.0 594.1l0.5 0.9M951.4 663.1l0.7 0.9M952.9 593.4l1.0 2.7M998.0 611.3l0.8 1.5M978.0 679.8l1.3 2.2M1008.9 587.5l1.3 2.4M1043.8 512.4l1.4 1.3M1005.6 644.7l2.3 1.1M988.3 542.6l1.1 1.6M1037.3 643.0l1.0 0.8M1025.6 682.5l1.6 2.1M1021.0 599.4l0.3 0.9M997.0 561.8l1.0 2.5M878.4 721.9l1.4 2.2M970.7 615.4l1.3 1.8M998.7 591.9l0.9 1.9M1015.0 640.9l1.6 2.2M979.9 655.5l0.6 0.6M999.2 603.8l0.3 1.0M889.2 581.4l0.6 1.2M1032.7 612.3l0.6 2.0M946.8 601.8l0.8 1.2M991.0 646.1l1.3 2.0M980.1 655.6l2.2 1.9M1023.7 667.0l0.4 1.0M962.4 624.6l1.0 1.9M978.7 630.2l1.0 1.8M1027.3 658.0l0.5 2.0M1003.1 543.0l1.5 1.2M1164.5 747.2l1.3 2.3M1093.5 770.4l0.7 1.1M1174.8 811.0l0.5 0.9M1111.2 731.5l1.4 2.2M1062.4 769.0l0.4 1.1M1099.2 739.2l0.5 1.2M1125.1 748.8l1.6 2.4M1066.3 749.6l1.1 2.3M1105.1 794.2l1.7 2.5M1173.3 767.8l2.5 1.3M1172.0 718.5l0.3 1.8M1096.9 673.0l0.7 0.7M1141.8 773.7l0.9 2.3M1097.3 844.7l0.9 0.7M1161.3 722.7l1.4 1.8M1133.9 706.7l1.4 1.7M1091.2 719.5l0.6 1.0M1079.2 763.2l0.9 1.2M1106.4 702.0l1.5 1.9M1097.0 657.5l0.7 1.3M1082.0 751.6l0.9 1.2M1188.1 728.6l0.2 2.5M1037.2 816.0l2.0 1.7M1160.3 783.7l1.7 1.7M1185.0 745.8l0.9 2.4M1066.9 756.6l0.6 0.8M1110.7 788.3l0.6 0.8M1060.4 791.6l0.8 2.1M998.4 714.9l0.8 0.8M1100.5 791.1l0.8 1.0M1205.8 639.8l1.6 2.4M1174.0 728.2l1.2 2.7M1186.8 749.0l0.7 1.5M1159.0 708.9l1.3 1.6M1070.4 687.8l1.3 2.0M1101.9 702.4l0.5 1.1M1103.1 713.1l0.7 0.5M1128.0 713.6l0.9 0.9M1063.1 690.4l1.3 1.5M1155.5 758.7l0.4 1.1M1046.7 844.5l1.1 0.8M1199.9 701.0l1.7 2.4M1122.1 765.4l2.2 1.6M1104.1 783.4l0.5 1.4M1097.8 813.6l0.9 1.7M1186.4 747.1l1.1 2.1M996.8 793.1l1.2 1.2M1141.4 758.4l0.6 1.2M1162.1 785.7l0.7 0.5M1074.4 712.3l1.2 1.8M1170.0 777.3l0.6 1.8M1077.4 815.7l0.8 2.6M923.7 606.4l1.7 1.4M938.3 616.0l0.5 0.8M985.7 703.8l1.2 1.8M1016.6 739.8l0.3 1.2M966.0 577.1l0.7 0.9M949.2 559.5l1.4 1.5M1039.1 564.7l1.0 2.6M964.9 598.9l1.5 2.0M968.1 665.4l1.2 2.8M952.3 622.6l0.5 2.2M927.0 647.8l1.8 1.9M982.4 566.8l0.7 1.0M952.9 680.9l1.3 1.0M926.6 661.3l0.4 1.7M936.3 636.2l0.2 1.0M922.5 556.7l1.8 2.1M993.4 643.4l0.5 1.0M972.2 591.7l0.6 1.0M1022.2 634.0l1.8 1.8M927.6 617.3l0.4 0.8M929.9 603.7l1.0 1.3M949.1 626.5l1.6 1.6M957.2 646.9l0.6 1.5M955.3 595.8l0.9 1.3M952.3 677.9l1.8 1.2M982.6 552.8l1.1 1.9M941.2 647.3l1.0 1.9M964.9 600.9l2.3 1.5M896.0 615.2l0.6 1.3M950.5 720.8l0.6 0.8M933.1 581.4l0.6 0.7M957.0 584.5l0.9 1.9M975.0 531.6l0.9 1.2M973.0 549.4l0.9 1.6M935.4 574.7l1.6 2.3M950.9 573.3l0.5 1.1M1000.4 490.5l1.4 1.2M936.4 614.1l0.8 0.9M889.6 554.8l1.8 2.1M968.4 633.8l1.9 1.1M1089.5 670.8l1.1 2.2M1124.2 553.2l0.6 1.8M1098.2 657.6l0.4 1.0M1124.0 671.4l2.0 1.8M1081.4 660.0l0.9 1.1M1121.0 655.5l0.5 1.8M1166.7 695.0l1.1 1.4M1102.8 700.9l1.6 2.5M1098.1 640.5l0.9 1.4M1093.5 573.7l0.9 1.6M1114.9 689.2l0.9 1.2M1143.0 697.7l0.9 1.8M1063.6 704.5l2.1 2.1M1127.1 698.9l0.9 2.0M1083.5 654.3l0.5 1.1M1130.6 696.4l0.4 0.7M1135.4 672.7l0.3 0.8M1108.6 608.5l0.7 2.3M1124.0 656.1l0.7 1.2M1076.9 616.8l0.9 2.0M1080.0 639.2l1.2 2.2M1092.8 670.2l1.0 1.0M1105.4 652.9l2.1 2.1M1124.3 628.9l1.0 2.4M1113.5 679.6l0.8 1.1M1147.8 663.8l0.6 1.5M1180.5 650.2l0.5 1.6M1077.4 653.4l0.7 0.5M1074.7 649.9l1.0 1.1M839.4 825.6l1.4 2.1M907.3 796.0l0.8 1.1M886.2 758.6l1.1 2.0M950.8 781.1l0.9 1.0M922.9 780.5l1.9 1.4M901.3 820.3l1.7 2.2M861.5 787.3l1.7 1.4M960.8 803.5l1.9 2.3M798.4 801.8l0.9 1.5M931.5 809.1l0.5 1.8M844.7 772.7l1.6 2.3M922.2 792.0l0.4 0.7M902.4 774.2l1.4 0.7M894.6 805.2l0.9 0.9M881.9 813.8l2.0 1.9M925.0 802.1l1.3 1.1M877.0 790.9l0.9 0.7M906.8 851.3l0.4 1.0M866.6 844.4l0.7 0.8M889.0 844.3l1.6 1.4M974.5 814.3l1.2 1.4M966.8 781.1l0.5 0.8M933.6 802.0l0.5 0.9M763.3 609.8l0.1 1.1M886.5 516.0l1.1 1.6M996.5 454.6l0.9 2.7M870.4 691.6l1.3 1.8M726.1 598.3l1.5 2.0M810.3 468.7l1.1 1.8M691.1 675.8l1.0 1.0M733.9 646.0l0.9 1.3M825.8 668.1l0.7 1.0M797.2 535.9l0.9 1.1M905.9 592.4l1.3 1.7M857.1 611.0l0.8 1.1M903.4 559.2l0.8 2.6M859.0 466.1l0.6 1.2M979.7 593.6l0.7 0.7M831.5 577.2l0.7 0.7M747.7 733.8l1.0 0.9M711.7 570.4l0.3 0.9M741.9 521.3l1.0 1.0M999.2 573.2l0.6 2.0M759.4 525.8l0.2 0.9M614.2 555.6l1.0 1.2M717.4 792.1l0.7 0.9M754.6 649.2l1.1 1.5M846.9 503.4l1.1 2.3M653.6 455.1l1.0 1.3M866.3 504.9l1.7 2.3M858.5 627.5l1.9 2.0M739.6 612.4l1.2 2.3M829.8 519.5l0.8 0.7M872.9 662.8l1.5 2.2M783.6 477.3l1.7 2.1M825.8 533.4l1.0 1.3M986.2 559.0l1.2 1.7M898.4 470.2l1.7 1.3M710.7 655.9l1.7 2.2M808.1 684.9l0.6 1.2M949.0 633.7l1.3 1.9M859.7 668.2l0.7 1.2M668.5 601.6l0.7 2.1M1008.4 709.0l1.0 1.0M842.0 571.5l1.2 0.4M760.8 579.4l1.4 1.2M922.2 501.4l0.9 1.0M804.8 679.1l0.9 0.9M819.5 631.9l0.9 2.8M701.9 500.7l0.8 1.9M692.5 449.5l0.8 0.6M757.6 451.6l0.5 1.0M712.7 602.4l2.3 1.5M624.9 602.4l1.2 1.2M631.4 629.9l1.0 0.5M756.9 548.9l0.9 0.9M612.8 620.2l0.4 0.7M795.0 625.5l0.7 2.0M692.4 549.7l0.7 0.8M745.4 529.2l1.0 1.3M639.2 631.3l1.2 2.6M617.7 605.5l0.7 0.5M741.7 608.5l1.1 2.4M719.4 562.5l0.6 1.0M617.3 631.1l0.9 1.7M667.7 548.2l1.0 2.3M670.2 573.3l0.6 1.6M715.6 557.2l1.4 1.2M792.0 685.2l0.6 2.0M781.0 503.0l0.5 0.7M822.5 529.6l0.9 1.1M680.2 480.1l0.9 1.8M674.1 501.2l1.1 1.6M794.8 474.7l0.9 2.2M687.5 505.8l0.6 0.9M784.4 497.4l0.8 1.6M788.1 643.5l0.6 1.4" stroke="#d6ebb0" stroke-width="1.1" fill="none" opacity=".85"/><path d="M1054.6 787.8l1.2 1.3M1048.0 669.3l0.6 1.7M1038.5 698.5l1.2 2.3M930.8 737.4l0.5 0.8M1124.9 722.6l1.7 1.2M1113.4 748.8l1.4 1.4M1053.4 728.2l1.7 1.6M952.8 711.0l0.6 1.2M1100.1 702.8l0.7 0.9M983.0 762.9l0.4 1.0M1131.0 724.9l0.9 2.7M1051.8 720.2l0.2 1.7M1069.7 798.8l1.8 1.7M1079.8 682.1l1.0 1.8M993.0 820.1l1.1 0.9M1038.5 775.2l0.8 1.7M1120.6 749.2l0.7 1.6M975.7 753.2l1.4 1.1M974.7 684.1l0.6 1.1M916.5 661.1l1.7 1.5M1011.4 648.1l0.6 1.2M1014.4 757.3l1.4 2.5M1032.4 577.4l1.4 2.6M1052.6 725.9l0.2 1.9M986.8 683.1l1.3 1.9M1097.6 837.9l0.4 0.8M983.6 709.4l1.1 1.4M1127.7 715.0l0.9 0.7M1004.3 755.9l0.8 0.8M967.5 704.1l0.9 1.7M1115.3 678.1l0.6 1.1M1171.7 678.0l1.0 2.3M1043.9 718.9l0.9 1.4M1113.2 818.1l1.0 1.7M1111.8 576.2l2.2 1.7M1045.6 576.0l1.4 2.0M1008.4 642.9l1.7 1.7M1046.8 748.8l0.3 1.1M1105.9 762.2l1.5 1.7M1037.2 707.2l1.6 2.3M1085.8 798.0l1.0 1.9M1135.5 730.6l1.6 1.4M1078.0 759.6l1.3 1.2M963.4 734.6l0.2 0.8M1083.1 782.2l1.1 1.9M1054.8 783.6l1.1 0.8M1107.7 690.6l0.9 1.2M993.1 722.2l1.7 2.3M1068.6 757.4l1.2 2.2M984.8 798.8l1.3 2.3M1131.8 707.4l0.9 2.5M1046.3 778.3l1.4 1.9M1064.1 678.2l1.0 1.4M912.5 745.0l1.6 2.2M1095.4 654.1l0.3 1.5M1081.9 653.6l0.5 1.4M1116.6 800.5l0.8 0.6M917.8 683.0l1.2 2.6M1090.9 684.2l1.3 1.3M1119.7 764.9l0.8 1.1M977.0 712.5l0.4 0.9M1191.8 750.5l0.5 0.7M932.8 716.5l1.6 1.5M1030.4 723.7l0.9 1.1M1067.8 698.5l1.6 1.8M1027.0 718.5l0.2 2.0M1078.3 658.9l1.0 0.6M1017.6 753.1l1.9 1.9M1139.6 791.3l0.4 1.6M1191.4 752.0l1.7 1.9M1136.5 748.3l1.8 2.1M1121.5 659.0l0.4 0.8M1018.0 742.1l1.8 1.9M1019.4 751.5l0.8 1.1M1047.4 779.3l1.3 2.6M1113.8 729.8l0.4 1.0M1110.6 754.7l1.3 0.5M1043.5 793.9l0.6 1.1M1023.5 733.1l1.8 2.1M1021.7 793.0l1.0 1.0M1084.6 759.4l0.4 1.5M1114.9 732.5l0.5 1.5M1121.7 723.8l1.1 1.7M1006.6 634.1l0.5 1.0M956.0 749.6l1.2 0.4M1005.2 775.3l1.5 2.5M1124.4 662.0l0.4 1.2M877.5 709.7l1.6 2.1M940.1 680.1l1.0 1.6M993.9 613.0l0.7 0.7M1000.2 735.6l0.8 1.9M960.9 691.1l0.8 1.3M989.2 793.2l1.9 1.9M1097.8 726.5l1.3 1.1M1081.1 729.0l0.6 0.7M1104.9 700.5l1.2 1.8M1073.6 739.9l0.9 1.6M1033.8 629.8l1.6 2.2M994.2 699.2l1.1 1.2M961.4 605.5l0.8 0.9M932.3 624.8l1.4 2.5M1024.6 641.5l1.4 1.9M1010.2 603.7l1.5 0.8M955.5 658.6l0.9 1.3M956.9 611.5l0.4 0.7M969.4 705.4l1.5 2.6M1111.1 588.3l0.9 1.0M978.6 765.9l1.5 1.6M1008.9 735.7l1.8 1.1M948.4 598.7l1.7 2.0M1004.9 596.1l1.1 0.9M1004.5 748.5l1.2 2.3M945.3 754.8l0.2 1.4M1002.5 509.9l1.7 0.9M1023.4 704.0l1.1 2.7M1015.8 611.1l1.5 2.3M1005.2 633.3l2.3 1.6M960.5 597.3l1.0 2.3M979.3 605.5l1.2 2.2M976.9 633.0l1.3 1.6M1116.9 672.6l1.0 0.9M1046.5 600.4l1.6 2.2M991.9 571.9l1.3 2.6M998.9 635.3l1.6 1.7M891.8 573.2l0.6 1.9M934.8 641.3l0.9 2.7M1041.0 726.4l1.3 1.2M948.4 623.3l0.9 1.2M1081.3 688.6l0.9 2.8M903.2 566.3l0.2 1.5M1041.8 627.5l1.2 1.4M857.7 577.8l0.7 1.0M974.6 704.8l0.7 0.8M970.8 708.1l1.1 2.1M1023.4 601.7l1.1 0.9M1019.2 578.5l0.5 1.4M1019.0 660.1l0.9 2.4M1015.3 638.4l1.8 1.9M944.9 640.5l1.9 1.8M1019.2 580.8l0.6 0.9M980.0 620.0l0.7 0.7M1013.5 666.8l0.5 0.8M1076.7 690.5l1.3 1.0M956.6 484.1l0.4 1.1M1054.1 680.0l0.9 0.8M972.4 615.8l1.4 1.8M986.1 642.2l0.7 2.6M1105.9 813.8l0.3 1.0M1041.6 676.3l0.4 1.7M1097.7 779.1l2.0 1.6M1166.4 765.0l1.0 0.8M1012.5 712.1l2.0 1.8M974.7 748.8l1.0 1.8M1154.9 763.6l1.3 1.4M1062.9 794.8l1.3 1.7M1044.3 747.0l1.1 1.6M1113.1 737.6l1.5 1.8M1213.6 801.4l1.6 2.0M1110.3 676.8l1.2 2.5M1100.8 723.8l1.0 0.7M1171.3 745.5l1.9 1.8M1105.4 751.0l1.5 1.8M1038.9 706.5l1.3 1.6M1126.6 766.4l1.3 1.9M1112.9 717.8l0.5 0.7M1108.8 838.2l0.3 0.8M1116.8 825.5l0.8 0.6M1105.0 773.1l1.4 1.3M1162.8 721.9l1.1 0.8M1077.3 790.0l0.1 1.6M1057.9 727.2l0.4 1.1M1079.5 756.1l0.7 0.7M1104.0 740.7l1.8 0.8M1081.1 797.1l0.8 0.7M1144.1 706.2l0.6 1.4M1195.8 771.6l1.1 1.2M1075.8 768.4l0.8 0.8M1074.3 764.3l1.0 0.9M1022.0 739.2l0.8 0.8M1156.6 815.4l0.9 2.0M1193.7 719.6l1.2 2.6M920.8 627.8l1.0 0.8M963.4 615.3l0.7 0.6M1022.4 610.4l0.6 1.7M936.6 512.2l2.3 1.6M1023.2 665.4l1.4 2.4M950.7 563.6l1.8 1.6M957.9 613.2l1.2 1.9M983.0 601.0l2.5 1.2M974.5 575.9l1.7 2.1M993.6 508.8l1.4 2.6M946.5 713.2l1.6 2.3M850.5 636.5l1.1 1.5M938.7 560.5l0.9 1.5M927.6 505.7l1.1 1.8M961.4 609.4l0.9 0.9M973.0 554.1l0.3 1.6M938.2 683.5l1.1 1.1M1029.8 599.5l0.6 1.0M994.1 668.1l0.8 0.9M1005.5 608.6l1.3 2.2M985.4 684.0l0.4 0.8M929.7 545.1l0.8 0.7M836.5 523.6l0.6 0.7M1010.9 632.4l1.1 0.6M933.8 542.1l0.7 1.8M954.4 636.6l0.8 1.5M954.5 602.7l0.4 1.0M931.4 492.0l1.6 1.8M883.3 524.2l0.4 0.7M967.7 575.2l1.2 1.9M958.7 618.9l0.6 0.9M946.1 567.7l1.1 1.0M899.1 561.0l1.0 1.6M970.3 578.2l0.9 1.5M931.8 620.4l1.9 1.6M977.2 481.5l0.6 1.8M996.9 617.3l1.5 2.1M977.2 701.2l0.5 1.8M981.2 570.1l0.9 1.0M984.8 590.9l0.9 1.8M1063.9 594.7l0.8 1.3M1112.0 639.3l0.6 1.2M1076.1 680.9l1.3 2.0M1065.9 703.5l1.4 1.1M1112.5 641.0l1.3 2.3M1045.7 694.9l1.1 2.2M1153.8 641.8l0.6 0.7M1109.5 625.8l1.4 1.9M1120.6 587.6l0.6 2.6M1079.7 635.7l1.9 1.2M1105.2 706.9l1.1 1.5M1053.9 640.1l1.3 2.2M1091.8 615.1l0.9 1.5M1083.7 714.4l1.4 1.4M1106.4 694.3l1.3 1.7M1090.5 626.1l0.5 2.4M1073.2 687.1l0.4 0.8M1052.8 663.7l1.1 0.6M1020.6 657.7l1.1 2.1M1163.2 641.9l0.4 0.8M1155.2 661.0l0.7 2.2M1089.8 696.7l0.8 0.8M1074.7 629.0l0.6 1.4M1134.5 616.1l1.3 2.3M1086.2 612.4l1.7 2.4M1137.2 640.7l1.8 1.5M1048.4 661.2l1.4 2.3M1059.9 611.8l0.7 1.6M1054.5 534.2l0.8 0.8M929.3 794.5l0.6 0.8M938.2 779.5l0.5 2.1M914.4 800.0l0.8 0.8M809.5 835.0l0.4 0.8M891.5 801.1l1.2 1.5M910.2 798.2l1.2 1.7M865.1 774.6l0.8 0.9M935.7 767.5l0.8 1.5M873.2 792.8l1.0 1.4M971.8 770.8l1.0 2.0M925.8 774.8l1.6 1.6M911.9 756.1l1.2 2.4M876.2 803.3l1.6 2.1M989.9 814.7l1.5 1.6M829.6 781.6l0.7 0.6M945.3 774.3l1.1 1.1M866.9 781.6l1.1 2.2M822.2 820.0l0.3 1.7M950.8 808.2l1.5 0.8M991.0 836.0l1.2 1.3M895.6 789.4l0.4 1.2M970.9 813.9l0.7 2.4M908.0 769.6l0.6 1.6M872.0 582.6l1.3 1.7M955.8 695.2l1.7 1.3M779.8 525.8l0.3 1.1M708.6 457.0l1.0 1.1M873.7 487.6l1.3 0.9M825.6 521.3l1.4 2.1M687.4 600.1l1.3 0.9M864.7 667.9l0.7 1.2M819.9 636.0l0.6 0.8M995.0 654.3l1.5 1.3M810.4 603.3l0.7 1.4M868.6 584.7l1.6 2.5M681.9 630.5l0.9 1.4M725.6 633.1l1.2 2.1M804.4 622.3l0.8 2.6M905.3 564.4l1.1 0.9M862.7 608.8l0.8 1.2M838.3 527.8l1.4 2.0M742.9 606.3l0.9 1.5M943.8 507.5l0.7 1.1M754.8 715.7l0.8 1.2M838.4 492.3l1.4 1.3M889.9 470.3l0.5 0.9M831.3 611.3l1.2 1.7M937.9 631.0l0.6 2.1M856.4 603.6l1.2 1.9M771.9 632.8l1.5 2.6M950.2 536.4l1.4 2.6M806.2 614.0l0.9 1.0M861.2 556.9l1.2 2.6M811.5 543.6l2.0 2.1M961.9 607.3l1.9 2.3M836.8 677.0l1.4 1.8M724.2 463.2l0.9 1.5M908.6 570.0l0.8 1.1M951.2 558.1l0.4 0.8M967.9 657.7l1.3 1.9M918.5 663.7l0.6 1.0M809.6 653.3l0.9 2.3M790.0 548.1l1.3 1.0M911.5 582.4l1.2 1.7M742.3 677.9l1.3 1.1M817.8 475.0l1.0 2.1M676.4 564.4l1.1 1.8M737.3 671.6l0.6 2.5M730.6 625.8l1.4 2.0M672.7 602.9l1.2 2.5M665.0 615.0l0.6 1.2M715.9 621.5l1.0 1.8M784.6 621.8l1.3 2.6M727.4 578.8l1.5 1.8M737.5 663.7l1.1 2.0M635.8 590.7l0.7 2.6M665.1 559.4l1.3 2.1M647.3 532.0l0.1 1.0M675.7 584.3l0.8 1.1M690.9 572.6l1.1 2.4M696.8 555.5l0.7 1.2M806.4 523.3l2.1 1.6M701.8 558.6l1.0 2.5M680.7 494.8l0.6 1.2M682.8 582.8l1.2 1.9M681.3 628.4l0.7 0.5M663.6 564.0l1.2 2.0M627.3 572.2l0.4 1.0M697.2 558.6l1.2 2.1M642.6 573.0l0.8 1.2M764.8 566.9l1.4 1.6M678.1 563.1l0.7 1.3M734.2 580.4l0.7 1.0M628.6 612.0l1.0 1.1" stroke="#a9d97e" stroke-width="1.1" fill="none" opacity=".85"/><path d="M831.4 572.6h0" stroke="#35a452" stroke-width="5.6" stroke-linecap="round" fill="none"/><path d="M845.5 579.2h0" stroke="#0f8a3d" stroke-width="5.6" stroke-linecap="round" fill="none"/><path d="M850.2 581.1h0" stroke="#5cb85f" stroke-width="5.6" stroke-linecap="round" fill="none"/><path d="M686.0 558.8h0M729.0 569.2h0M843.8 579.9h0M823.1 610.3h0M857.1 588.8h0M863.4 641.7h0M831.5 648.5h0M860.6 637.5h0M851.7 705.2h0M927.2 713.6h0" stroke="#8ccf73" stroke-width="4.8" stroke-linecap="round" fill="none"/><path d="M676.3 501.0h0M798.3 529.1h0M757.4 538.2h0M743.6 541.1h0M786.0 540.5h0M680.3 557.1h0M722.2 593.3h0M736.9 601.8h0M725.8 581.8h0M763.8 640.8h0M812.3 548.9h0M833.3 578.4h0M811.4 609.0h0M890.9 590.8h0M859.9 654.1h0M850.2 640.8h0M802.2 642.7h0M843.8 643.3h0M886.1 663.3h0M855.1 655.4h0M843.8 665.7h0M883.9 630.8h0M808.5 664.0h0M868.2 726.5h0M832.3 735.9h0M868.0 721.2h0M807.1 728.2h0M937.8 650.9h0" stroke="#0b7f3a" stroke-width="4.8" stroke-linecap="round" fill="none"/><path d="M687.4 533.6h0M629.8 508.3h0M652.3 517.9h0M802.9 529.7h0M745.1 589.5h0M720.4 581.1h0M768.1 625.2h0M803.7 553.3h0M842.5 566.0h0M834.9 585.5h0M825.4 619.6h0M850.0 634.2h0M806.2 691.0h0M832.5 678.8h0M890.4 668.7h0M858.5 720.2h0M883.8 726.7h0M818.4 729.8h0M872.5 719.9h0M943.6 644.3h0M938.2 660.9h0" stroke="#35a452" stroke-width="4.8" stroke-linecap="round" fill="none"/><path d="M624.9 512.3h0M634.5 499.3h0M650.0 533.5h0M776.3 537.4h0M713.2 524.1h0M789.6 536.0h0M704.8 523.0h0M749.4 536.5h0M761.2 517.7h0M691.8 561.3h0M673.9 565.1h0M675.6 569.6h0M752.1 573.8h0M721.4 610.8h0M778.2 623.8h0M799.5 556.9h0M824.1 551.2h0M781.9 563.9h0M849.5 573.3h0M856.1 572.2h0M847.5 564.8h0M843.6 571.3h0M839.8 621.5h0M812.7 616.0h0M851.0 601.3h0M870.9 588.7h0M864.3 603.8h0M828.5 633.3h0M854.0 668.7h0M837.7 634.8h0M907.0 645.5h0M867.1 630.9h0M845.4 650.2h0M865.5 683.9h0M819.2 704.0h0M816.6 664.2h0M840.3 705.2h0M868.1 694.8h0M844.9 689.0h0M865.0 708.8h0M826.9 737.5h0M879.7 714.8h0M880.6 740.2h0M865.7 734.8h0M842.7 716.9h0M888.0 742.9h0M870.8 749.5h0M885.8 764.6h0M871.9 758.5h0M891.1 642.1h0M896.5 627.8h0M905.3 657.0h0M933.2 687.0h0M964.3 642.8h0M958.0 647.3h0M919.7 716.0h0M938.8 682.4h0" stroke="#15924a" stroke-width="4.8" stroke-linecap="round" fill="none"/><path d="M622.2 507.1h0M688.9 497.2h0M746.9 526.3h0M760.8 530.4h0M733.9 539.3h0M708.6 541.5h0M770.3 538.2h0M775.4 548.8h0M785.9 518.1h0M698.6 565.3h0M729.2 591.8h0M736.2 589.7h0M752.2 590.8h0M793.1 625.7h0M815.6 580.7h0M829.2 568.2h0M824.1 605.7h0M848.6 586.6h0M825.2 589.8h0M841.0 598.7h0M830.6 619.9h0M851.2 606.9h0M879.8 593.9h0M898.8 595.1h0M818.9 656.7h0M847.8 660.5h0M873.9 663.9h0M834.0 653.0h0M870.4 645.0h0M861.1 674.1h0M865.9 675.5h0M875.3 656.2h0M810.2 631.8h0M854.1 648.2h0M807.9 639.2h0M829.6 691.6h0M805.6 678.2h0M820.9 709.9h0M801.6 680.2h0M873.8 686.9h0M858.5 678.3h0M852.8 697.2h0M882.2 677.7h0M844.4 723.8h0M860.8 753.4h0M872.7 740.7h0M859.4 748.1h0M847.4 736.0h0M891.3 729.8h0M853.0 718.7h0M868.3 744.9h0M867.3 758.1h0M879.8 752.1h0M915.7 614.1h0M795.2 603.7h0M951.4 666.0h0M944.5 670.1h0" stroke="#0f8a3d" stroke-width="4.8" stroke-linecap="round" fill="none"/><path d="M631.2 523.4h0M683.7 510.7h0M792.0 633.1h0M862.2 588.4h0M895.6 679.8h0M907.9 673.5h0M872.4 708.5h0" stroke="#5cb85f" stroke-width="4.8" stroke-linecap="round" fill="none"/><path d="M657.3 517.9h0M665.6 508.1h0M694.5 498.8h0M780.2 519.6h0M782.4 537.4h0M758.8 580.7h0M745.4 584.7h0M725.1 613.2h0M785.0 658.6h0M842.6 575.5h0M827.5 609.4h0M858.7 658.6h0M878.3 644.0h0M857.9 646.4h0M891.8 683.6h0M916.8 671.3h0M949.1 645.3h0M943.4 715.6h0M835.8 481.8h0" stroke="#8ccf73" stroke-width="4.0" stroke-linecap="round" fill="none"/><path d="M646.0 522.0h0M688.9 502.1h0M674.8 505.6h0M685.8 516.6h0M742.2 534.7h0M752.3 548.2h0M707.6 536.4h0M779.2 529.5h0M722.6 520.2h0M753.1 521.7h0M793.2 522.7h0M798.3 516.3h0M751.1 500.9h0M696.3 550.8h0M723.1 568.4h0M744.1 570.5h0M748.4 581.3h0M758.7 585.7h0M721.6 587.7h0M746.5 597.4h0M725.6 603.1h0M744.5 614.9h0M717.3 616.6h0M772.6 567.5h0M755.2 634.2h0M837.5 560.7h0M810.5 543.6h0M799.1 551.2h0M839.4 571.6h0M827.7 563.2h0M817.8 600.2h0M837.4 604.8h0M847.4 598.6h0M881.8 603.9h0M889.2 584.7h0M891.8 606.3h0M848.8 647.1h0M876.8 623.1h0M892.5 647.4h0M839.1 628.4h0M824.9 675.9h0M815.7 678.1h0M829.1 712.0h0M820.9 677.4h0M871.3 675.4h0M890.2 709.8h0M858.4 699.9h0M930.0 651.4h0M912.4 680.7h0M806.7 626.9h0M794.8 608.9h0M801.6 607.2h0M790.8 592.9h0M964.2 666.2h0M937.2 668.7h0M935.4 700.1h0M949.8 707.4h0M1024.2 724.4h0M1039.6 736.7h0M830.7 500.1h0M983.1 731.8h0" stroke="#0b7f3a" stroke-width="4.0" stroke-linecap="round" fill="none"/><path d="M681.2 500.0h0M760.7 506.9h0M795.1 526.4h0M784.1 533.5h0M766.9 541.3h0M680.5 573.6h0M736.9 569.5h0M748.0 571.7h0M725.1 618.5h0M778.6 569.1h0M837.1 566.7h0M854.4 565.3h0M834.9 608.1h0M829.5 589.9h0M881.3 582.8h0M814.5 640.9h0M871.3 639.3h0M827.8 654.4h0M826.3 665.7h0M838.0 692.2h0M837.5 697.0h0M876.1 696.2h0M846.2 698.0h0M848.9 710.0h0M924.4 634.7h0M909.8 621.1h0M916.0 660.6h0M921.8 662.7h0M941.1 663.8h0M920.8 699.5h0M927.1 691.0h0M1004.3 720.6h0M1051.1 727.5h0M835.7 489.7h0" stroke="#35a452" stroke-width="4.0" stroke-linecap="round" fill="none"/><path d="M676.1 513.4h0M644.0 514.8h0M649.3 497.7h0M690.4 528.6h0M672.3 513.9h0M664.6 512.2h0M639.2 521.4h0M679.9 514.7h0M645.2 504.5h0M715.4 532.0h0M794.7 536.1h0M769.3 525.8h0M745.0 519.8h0M770.9 521.7h0M722.0 527.0h0M689.2 569.1h0M685.4 563.6h0M693.1 566.6h0M687.6 553.5h0M695.4 559.2h0M679.1 545.3h0M674.0 574.3h0M739.9 585.8h0M716.9 587.2h0M726.6 576.1h0M722.8 597.5h0M734.4 613.9h0M735.9 620.3h0M787.5 570.2h0M787.4 639.9h0M769.9 620.6h0M773.9 632.4h0M758.9 627.2h0M768.1 629.7h0M756.5 647.9h0M774.5 638.7h0M756.5 639.0h0M778.4 659.8h0M801.5 566.2h0M795.1 574.5h0M832.4 561.1h0M828.6 578.5h0M834.8 552.7h0M789.0 560.2h0M842.8 560.0h0M850.3 569.0h0M831.6 603.0h0M823.9 597.4h0M854.3 610.1h0M843.1 627.2h0M796.3 594.0h0M846.6 609.2h0M800.8 598.5h0M889.3 598.6h0M879.7 586.9h0M868.9 596.3h0M875.3 594.4h0M874.8 583.3h0M885.1 606.4h0M865.7 584.6h0M838.1 665.7h0M815.0 654.1h0M842.2 678.8h0M794.3 647.9h0M888.5 633.7h0M866.3 651.9h0M877.5 627.0h0M833.4 624.6h0M836.6 648.9h0M906.0 640.7h0M903.8 625.6h0M903.2 651.4h0M869.8 660.9h0M817.0 634.2h0M877.2 666.8h0M841.6 632.2h0M851.6 663.2h0M864.0 621.2h0M819.7 686.2h0M825.4 682.5h0M835.8 659.6h0M821.9 663.8h0M845.0 674.4h0M810.0 682.1h0M901.3 687.2h0M900.5 671.9h0M858.3 687.8h0M866.6 703.4h0M897.4 689.6h0M906.6 679.8h0M890.3 673.6h0M854.6 729.9h0M861.9 730.2h0M855.1 743.0h0M850.6 724.5h0M821.9 716.3h0M846.4 719.9h0M817.3 721.2h0M875.2 757.0h0M925.0 623.7h0M915.4 636.5h0M909.7 616.5h0M920.2 648.9h0M899.6 655.3h0M927.1 674.6h0M806.7 617.4h0M784.9 618.7h0M787.3 595.9h0M779.7 605.6h0M782.7 597.4h0M963.8 563.3h0M981.1 614.9h0M965.2 659.8h0M961.0 661.9h0M963.5 653.8h0M959.0 665.5h0M945.2 658.6h0M962.4 646.7h0M950.0 693.1h0M1024.8 707.6h0M996.7 716.1h0M995.7 708.6h0M993.4 712.9h0M1017.0 706.4h0M1004.9 734.2h0M1043.7 732.7h0M838.1 509.1h0" stroke="#15924a" stroke-width="4.0" stroke-linecap="round" fill="none"/><path d="M673.8 497.4h0M704.0 498.8h0M698.9 518.9h0M668.5 511.0h0M690.9 537.6h0M704.9 505.1h0M699.8 532.3h0M661.8 507.5h0M669.6 492.7h0M617.3 525.6h0M728.6 527.6h0M784.7 526.6h0M806.3 525.4h0M757.3 545.2h0M689.0 546.0h0M679.8 565.6h0M683.0 550.1h0M702.2 560.1h0M735.3 585.8h0M746.9 577.6h0M730.3 577.4h0M739.9 607.5h0M742.1 597.1h0M776.9 575.4h0M767.0 566.0h0M758.5 560.8h0M772.2 628.8h0M783.9 636.4h0M771.8 644.1h0M772.3 624.5h0M744.0 630.1h0M787.1 664.0h0M811.8 558.7h0M823.1 581.7h0M812.6 554.1h0M820.5 577.9h0M833.6 612.4h0M842.4 606.6h0M817.3 618.7h0M850.1 591.5h0M812.9 594.5h0M818.0 606.7h0M840.7 589.1h0M803.5 612.4h0M827.0 613.5h0M811.3 622.9h0M870.3 602.1h0M869.1 608.2h0M884.0 590.0h0M851.3 627.8h0M928.0 636.0h0M892.2 652.1h0M850.2 621.2h0M881.6 665.4h0M859.8 617.9h0M828.4 678.2h0M815.0 686.0h0M805.1 672.4h0M891.1 677.9h0M864.1 692.8h0M886.2 688.7h0M888.4 705.0h0M863.5 678.8h0M894.3 700.0h0M894.7 735.5h0M848.1 731.0h0M807.3 720.7h0M898.9 760.2h0M896.2 752.7h0M893.1 749.8h0M880.7 764.9h0M870.6 755.6h0M926.8 642.2h0M908.6 628.2h0M916.5 624.6h0M920.5 669.6h0M789.8 609.7h0M957.6 584.9h0M958.7 577.8h0M960.3 592.8h0M946.1 572.5h0M973.2 620.7h0M953.1 659.5h0M957.0 658.1h0M946.8 649.3h0M964.1 649.9h0M948.9 700.5h0M943.1 683.4h0M930.5 721.2h0M947.1 688.6h0M975.6 707.4h0M970.1 715.5h0M971.0 710.4h0M858.4 470.1h0" stroke="#0f8a3d" stroke-width="4.0" stroke-linecap="round" fill="none"/><path d="M660.0 511.1h0M762.0 524.2h0M689.3 575.5h0M820.8 566.1h0M798.0 628.9h0M831.5 703.2h0M923.0 645.7h0M919.7 681.2h0M989.3 736.1h0" stroke="#5cb85f" stroke-width="4.0" stroke-linecap="round" fill="none"/><path d="M634.3 516.5h0M697.0 523.5h0M697.9 513.9h0M624.1 532.7h0M751.3 531.0h0M799.4 542.6h0M739.7 580.2h0M723.7 584.9h0M732.5 609.0h0M714.3 597.2h0M761.3 657.2h0M777.8 664.6h0M791.3 566.1h0M830.7 593.2h0M899.5 619.8h0M883.1 672.3h0M890.1 629.5h0M840.5 646.0h0M855.3 664.0h0M880.6 632.9h0M824.2 649.7h0M856.9 704.2h0M870.2 683.6h0M877.1 732.0h0M922.3 678.6h0M800.3 594.7h0M952.7 579.4h0M951.1 648.6h0M956.4 668.6h0M929.8 700.4h0M955.8 692.8h0M985.3 710.7h0M1015.2 738.6h0M854.9 472.6h0" stroke="#8ccf73" stroke-width="3.2" stroke-linecap="round" fill="none"/><path d="M683.5 529.3h0M674.7 518.0h0M660.1 515.2h0M668.6 499.6h0M637.2 505.4h0M660.2 521.5h0M718.9 505.2h0M621.2 513.7h0M756.1 528.9h0M775.5 526.3h0M733.1 529.9h0M757.4 519.0h0M730.0 546.3h0M760.2 534.0h0M762.3 543.3h0M789.3 520.0h0M700.6 536.0h0M740.6 507.9h0M814.3 526.8h0M731.2 468.9h0M701.1 495.3h0M696.8 488.1h0M742.1 493.7h0M728.4 586.4h0M741.0 592.7h0M711.8 599.8h0M770.0 570.7h0M762.3 568.2h0M752.3 626.6h0M791.1 643.4h0M816.7 571.0h0M823.2 574.1h0M814.6 575.3h0M819.8 590.2h0M842.7 610.5h0M850.1 617.2h0M877.2 604.0h0M861.4 597.3h0M896.4 639.9h0M854.5 644.1h0M822.5 654.0h0M855.7 641.0h0M846.8 655.8h0M889.5 612.6h0M925.9 629.2h0M829.6 665.5h0M876.5 618.8h0M835.5 630.1h0M810.2 650.9h0M881.5 661.6h0M822.5 670.8h0M834.3 698.8h0M825.0 658.1h0M827.1 706.4h0M811.0 695.0h0M803.9 657.0h0M812.6 698.0h0M876.3 707.6h0M887.0 698.9h0M871.5 699.5h0M896.6 697.3h0M864.8 663.7h0M861.5 736.7h0M885.5 716.9h0M873.4 724.4h0M839.4 721.1h0M854.0 722.5h0M826.2 745.7h0M836.2 744.1h0M873.1 745.5h0M910.6 637.9h0M899.9 645.6h0M934.9 677.6h0M932.6 681.0h0M800.7 620.2h0M790.8 621.0h0M806.1 601.1h0M967.8 571.9h0M954.8 574.1h0M966.8 568.9h0M961.5 560.5h0M949.1 658.0h0M934.3 647.4h0M947.1 653.8h0M932.5 694.4h0M945.4 692.9h0M916.8 695.5h0M937.8 695.7h0M949.6 681.6h0M946.1 705.5h0M1001.0 650.6h0M1007.3 649.5h0M998.5 713.1h0M1025.2 704.2h0M982.1 704.9h0M999.8 705.2h0M1014.5 734.2h0M1033.2 744.7h0M1036.8 732.3h0M835.2 495.6h0M829.8 494.1h0M862.4 470.9h0M908.3 490.0h0M768.5 677.0h0M840.8 773.7h0M845.1 775.3h0" stroke="#0b7f3a" stroke-width="3.2" stroke-linecap="round" fill="none"/><path d="M706.4 531.2h0M719.7 522.0h0M671.0 505.1h0M707.3 518.0h0M772.0 515.8h0M738.5 521.8h0M804.9 518.1h0M756.3 511.9h0M782.1 517.2h0M710.3 488.1h0M736.0 581.3h0M735.0 578.1h0M715.1 611.6h0M714.7 606.0h0M759.4 574.1h0M762.5 557.5h0M777.6 617.7h0M785.5 561.3h0M843.3 603.0h0M885.9 603.0h0M884.5 645.6h0M835.4 675.8h0M816.9 673.4h0M863.6 667.6h0M891.3 655.4h0M834.3 685.2h0M806.8 683.5h0M872.2 695.8h0M874.2 692.2h0M879.5 688.7h0M811.8 739.2h0M846.6 714.4h0M836.4 707.5h0M882.4 756.9h0M911.8 633.9h0M917.9 619.1h0M916.8 643.0h0M931.2 672.4h0M791.3 606.2h0M963.5 577.5h0M971.5 575.3h0M942.7 703.9h0M951.0 704.1h0M937.1 709.9h0M992.0 600.9h0M983.2 610.8h0M983.0 607.4h0M1040.6 725.7h0M1028.8 733.2h0M1003.7 738.0h0M1044.8 722.1h0M1040.5 715.3h0M1038.1 717.7h0M862.8 473.8h0M932.9 785.0h0M757.9 678.3h0M1034.2 595.8h0" stroke="#35a452" stroke-width="3.2" stroke-linecap="round" fill="none"/><path d="M652.0 528.1h0M693.2 520.1h0M656.9 497.6h0M643.9 488.2h0M626.4 505.7h0M658.5 535.1h0M665.0 503.7h0M653.1 501.9h0M686.7 505.4h0M672.7 534.8h0M697.1 511.1h0M654.2 506.4h0M758.2 525.6h0M735.0 545.2h0M764.7 527.6h0M766.9 521.2h0M729.0 534.1h0M745.6 515.6h0M778.0 542.7h0M802.6 524.3h0M736.9 541.7h0M730.2 523.9h0M721.1 535.3h0M754.8 516.8h0M712.7 528.7h0M729.8 516.0h0M722.3 466.8h0M747.3 491.4h0M685.2 571.4h0M693.9 555.9h0M691.2 549.2h0M706.2 561.5h0M704.6 554.2h0M722.4 577.1h0M750.8 578.3h0M730.9 581.8h0M743.9 603.1h0M731.9 602.2h0M748.0 565.4h0M733.6 598.4h0M751.0 595.8h0M745.4 606.4h0M728.3 620.4h0M729.0 609.7h0M730.2 617.8h0M715.4 600.1h0M711.1 595.3h0M711.7 604.0h0M715.5 601.5h0M754.7 562.4h0M758.1 570.7h0M766.5 558.4h0M767.8 561.3h0M771.5 635.0h0M800.1 625.0h0M779.6 637.8h0M788.9 657.3h0M769.0 655.1h0M751.8 659.2h0M807.7 582.5h0M797.9 563.9h0M803.7 575.0h0M809.8 577.0h0M818.1 584.4h0M792.6 558.0h0M821.0 569.4h0M799.4 570.4h0M815.4 563.8h0M828.3 605.4h0M790.9 600.2h0M827.7 595.8h0M873.1 579.7h0M872.1 575.7h0M871.8 606.0h0M864.2 593.4h0M856.8 581.5h0M858.8 594.9h0M802.7 649.1h0M840.4 639.4h0M833.0 667.7h0M851.7 644.5h0M859.2 641.4h0M842.2 654.9h0M820.0 648.9h0M842.3 636.5h0M829.8 671.2h0M809.5 645.3h0M831.1 659.8h0M907.9 636.5h0M856.1 613.4h0M848.7 674.9h0M893.6 631.2h0M855.2 632.1h0M852.1 674.8h0M851.4 671.4h0M861.2 625.5h0M796.6 643.2h0M812.0 658.6h0M867.0 671.4h0M808.2 658.0h0M823.7 692.7h0M827.8 686.6h0M834.0 663.0h0M798.7 702.8h0M803.0 696.0h0M834.9 682.2h0M868.3 687.8h0M881.7 702.4h0M862.6 700.0h0M874.0 683.0h0M867.4 679.4h0M886.3 672.8h0M875.7 676.5h0M878.4 691.6h0M841.3 698.4h0M861.0 664.7h0M903.6 677.6h0M840.7 674.7h0M884.0 684.3h0M884.3 692.7h0M853.7 687.0h0M890.8 691.4h0M888.3 681.6h0M839.8 733.5h0M838.4 726.4h0M877.3 726.9h0M842.1 741.8h0M856.9 724.3h0M864.1 720.9h0M881.7 709.9h0M832.5 728.1h0M858.5 739.2h0M831.5 742.5h0M860.6 709.6h0M826.5 727.4h0M883.1 761.5h0M877.8 748.3h0M888.9 751.8h0M922.6 640.8h0M907.7 632.4h0M910.8 610.1h0M896.6 633.4h0M903.5 638.2h0M888.3 638.4h0M929.6 666.6h0M933.3 665.7h0M916.4 677.0h0M910.4 670.1h0M796.2 614.7h0M786.3 611.8h0M797.5 617.8h0M972.0 579.8h0M949.7 564.4h0M967.8 594.5h0M970.6 627.3h0M974.3 626.2h0M945.6 662.6h0M946.6 666.7h0M950.4 662.3h0M940.5 657.6h0M951.2 653.6h0M960.3 651.9h0M922.3 703.1h0M933.0 690.9h0M921.7 685.9h0M934.7 723.3h0M930.1 696.4h0M937.6 704.9h0M952.5 684.6h0M1009.0 652.6h0M1005.1 659.2h0M989.2 605.2h0M1024.1 711.5h0M963.2 707.2h0M962.6 711.3h0M1007.3 728.8h0M1027.6 740.5h0M1022.7 720.2h0M1044.1 716.8h0M866.5 478.9h0M843.2 509.8h0M929.1 779.8h0M764.0 678.2h0M943.3 501.3h0M972.8 471.5h0" stroke="#15924a" stroke-width="3.2" stroke-linecap="round" fill="none"/><path d="M627.7 518.9h0M622.7 529.3h0M669.1 518.8h0M696.1 505.9h0M664.1 520.8h0M629.8 501.1h0M705.1 514.1h0M678.7 509.3h0M703.8 510.3h0M718.4 525.6h0M643.5 527.1h0M638.3 510.6h0M681.2 524.7h0M715.4 514.9h0M661.3 531.3h0M637.7 532.6h0M624.9 527.1h0M618.2 528.6h0M621.8 525.5h0M708.5 528.9h0M764.6 536.3h0M735.3 520.7h0M747.8 532.3h0M770.3 542.1h0M747.2 546.3h0M726.3 541.8h0M788.7 528.9h0M802.0 536.0h0M737.4 534.4h0M773.5 533.7h0M791.3 539.4h0M768.5 532.7h0M723.4 532.0h0M812.5 536.8h0M752.9 526.1h0M767.1 517.3h0M771.7 510.9h0M749.4 510.2h0M725.4 535.6h0M733.0 518.8h0M749.9 522.9h0M728.1 466.2h0M715.3 490.1h0M694.1 493.4h0M719.1 491.3h0M746.3 495.7h0M750.5 496.2h0M754.9 486.4h0M700.9 571.5h0M696.1 570.6h0M697.2 577.7h0M683.9 567.7h0M676.6 560.4h0M737.3 575.3h0M728.4 597.0h0M724.0 590.0h0M747.9 603.1h0M741.9 610.5h0M749.4 584.8h0M736.2 560.7h0M752.3 581.4h0M758.7 565.6h0M721.6 620.1h0M712.7 614.3h0M719.0 608.0h0M726.4 606.5h0M720.9 603.2h0M721.6 614.9h0M729.9 614.3h0M736.9 610.0h0M718.2 601.5h0M756.5 568.3h0M765.3 575.4h0M763.7 565.3h0M752.2 568.9h0M766.4 570.8h0M784.1 574.0h0M742.7 576.1h0M756.0 558.4h0M762.1 619.6h0M783.1 631.1h0M779.5 627.2h0M786.0 615.3h0M790.9 648.0h0M763.5 625.6h0M763.2 652.8h0M809.9 569.8h0M830.2 584.8h0M798.8 574.3h0M806.9 574.0h0M797.7 567.1h0M845.8 619.2h0M838.7 593.6h0M793.3 596.3h0M853.1 594.3h0M839.0 613.6h0M817.8 623.0h0M835.3 600.1h0M794.4 619.4h0M811.0 587.0h0M872.6 599.0h0M877.2 579.0h0M868.5 619.0h0M886.9 587.5h0M904.3 595.1h0M878.7 608.6h0M854.6 586.0h0M894.1 594.1h0M853.8 635.3h0M858.1 670.4h0M871.0 655.6h0M804.0 621.0h0M844.7 614.6h0M876.7 640.7h0M851.5 651.6h0M897.4 623.7h0M821.3 624.2h0M827.9 640.5h0M816.9 659.7h0M873.9 643.3h0M848.6 652.7h0M881.5 615.9h0M865.9 637.8h0M878.0 674.1h0M869.5 626.0h0M828.7 696.4h0M821.8 680.9h0M833.2 643.5h0M846.1 692.8h0M855.0 680.5h0M859.1 693.2h0M898.9 694.6h0M842.9 692.4h0M900.8 700.6h0M897.2 708.2h0M882.6 697.4h0M878.0 711.3h0M844.1 683.0h0M873.4 703.7h0M839.1 687.9h0M859.1 683.5h0M844.4 710.0h0M874.5 669.3h0M884.5 713.1h0M857.2 695.7h0M852.4 691.7h0M849.4 683.4h0M807.1 700.1h0M820.7 741.7h0M833.0 724.8h0M862.0 717.1h0M888.0 719.1h0M813.3 724.3h0M861.7 713.7h0M839.9 745.4h0M887.5 748.7h0M886.7 757.2h0M891.2 755.1h0M884.6 754.0h0M881.2 747.5h0M875.4 753.5h0M921.2 628.4h0M921.5 610.4h0M902.5 621.6h0M903.0 632.5h0M907.5 613.5h0M911.1 658.2h0M914.3 644.9h0M919.4 676.5h0M925.9 686.2h0M925.3 668.9h0M918.5 692.1h0M923.1 690.8h0M786.0 628.6h0M779.5 609.9h0M790.9 614.0h0M783.3 625.8h0M964.0 581.8h0M966.9 575.8h0M959.5 571.3h0M969.9 584.3h0M958.5 565.9h0M942.2 590.4h0M946.9 588.6h0M953.0 565.1h0M974.6 615.4h0M953.7 655.7h0M955.3 649.8h0M945.4 638.5h0M943.5 653.5h0M952.1 641.8h0M969.8 649.1h0M956.0 643.2h0M937.0 655.5h0M925.4 699.0h0M943.7 709.1h0M929.5 683.8h0M925.2 704.2h0M932.9 709.5h0M944.9 712.4h0M915.1 704.0h0M1004.3 652.3h0M979.0 601.2h0M1009.1 706.0h0M1012.8 707.6h0M1009.9 708.9h0M957.7 714.8h0M988.6 709.4h0M1038.9 729.2h0M1033.5 736.2h0M1044.4 729.1h0M1022.7 736.9h0M1034.7 722.1h0M830.5 486.8h0M841.5 506.3h0M939.8 473.0h0M822.0 755.5h0M762.1 673.6h0M765.2 670.0h0M715.6 671.5h0M837.4 778.4h0" stroke="#0f8a3d" stroke-width="3.2" stroke-linecap="round" fill="none"/><path d="M663.9 499.0h0M679.4 506.0h0M742.7 527.8h0M810.1 532.6h0M788.7 525.4h0M719.5 468.1h0M707.1 566.1h0M734.1 594.7h0M765.5 622.5h0M795.9 586.5h0M813.8 585.3h0M813.2 601.7h0M859.5 608.5h0M876.2 600.8h0M838.9 655.0h0M976.3 632.3h0M950.2 670.4h0" stroke="#5cb85f" stroke-width="3.2" stroke-linecap="round" fill="none"/><path d="M642.3 501.8h0M976.7 624.5h0M951.6 689.8h0M1023.4 727.7h0M852.5 476.1h0M798.5 499.2h0M934.2 770.9h0M812.7 757.6h0M748.7 693.5h0" stroke="#8ccf73" stroke-width="2.4" stroke-linecap="round" fill="none"/><path d="M663.3 517.8h0M648.3 507.1h0M732.7 533.3h0M736.9 530.1h0M739.3 527.8h0M719.9 472.8h0M710.5 496.0h0M707.5 490.2h0M922.8 673.0h0M967.1 583.3h0M924.7 709.6h0M937.9 688.5h0M942.4 696.0h0M966.0 714.1h0M956.4 706.0h0M1003.1 711.3h0M971.5 706.8h0M1012.5 725.7h0M1030.2 737.6h0M1040.5 722.8h0M788.5 498.8h0M939.9 468.9h0M742.5 703.3h0M738.2 693.4h0M783.9 733.3h0M773.4 674.0h0M833.9 778.2h0" stroke="#0b7f3a" stroke-width="2.4" stroke-linecap="round" fill="none"/><path d="M716.2 507.1h0M657.0 500.8h0M681.8 540.3h0M771.4 531.1h0M688.0 489.0h0M700.6 491.2h0M698.9 485.3h0M767.1 657.8h0M959.8 563.4h0M957.1 561.4h0M951.0 593.6h0M965.3 590.9h0M952.8 561.1h0M978.2 628.8h0M949.3 711.0h0M993.9 701.0h0M1010.3 731.1h0M1004.9 730.8h0M1006.3 724.8h0M1031.3 724.0h0M1012.0 737.5h0M933.9 471.8h0M786.5 734.3h0M802.4 717.0h0M788.4 721.9h0" stroke="#35a452" stroke-width="2.4" stroke-linecap="round" fill="none"/><path d="M649.4 513.5h0M672.5 508.2h0M639.6 502.3h0M652.4 510.8h0M673.4 520.5h0M710.6 512.0h0M625.3 530.3h0M754.1 534.5h0M777.2 521.7h0M743.1 545.7h0M760.7 513.5h0M757.4 515.6h0M712.5 494.1h0M752.0 484.7h0M770.1 564.6h0M767.4 665.9h0M914.1 639.9h0M896.8 652.9h0M930.9 675.8h0M930.4 662.1h0M965.3 587.6h0M963.9 573.3h0M955.6 577.5h0M950.7 584.7h0M950.2 574.6h0M966.8 579.5h0M971.9 571.7h0M967.0 565.0h0M965.2 597.4h0M967.6 622.6h0M970.9 614.3h0M1006.6 654.4h0M955.9 709.1h0M1006.0 710.5h0M978.5 711.2h0M1024.3 714.9h0M1031.2 704.1h0M1020.6 729.9h0M1017.6 719.0h0M1019.3 725.1h0M1012.8 729.2h0M1003.3 725.2h0M989.5 722.4h0M1035.3 727.0h0M1045.5 726.4h0M1037.2 712.3h0M829.1 479.8h0M832.5 484.2h0M831.6 496.5h0M857.6 473.2h0M796.4 493.3h0M795.8 497.3h0M939.3 476.4h0M937.5 469.9h0M943.4 475.6h0M941.9 471.3h0M805.8 758.4h0M822.0 760.6h0M812.2 760.1h0M829.8 755.4h0M748.6 702.1h0M733.5 707.9h0M786.8 726.8h0M785.7 721.7h0M771.3 671.1h0M713.9 668.4h0M717.4 668.1h0" stroke="#15924a" stroke-width="2.4" stroke-linecap="round" fill="none"/><path d="M691.9 515.1h0M613.7 519.0h0M610.8 504.1h0M628.6 530.1h0M620.2 521.9h0M726.5 519.9h0M781.1 523.1h0M798.4 533.5h0M716.3 520.6h0M725.4 469.4h0M693.8 490.4h0M753.4 480.4h0M926.1 663.0h0M955.9 582.4h0M952.2 569.3h0M962.8 589.3h0M965.3 560.7h0M951.6 582.3h0M974.0 567.6h0M969.5 633.6h0M930.9 706.7h0M939.9 700.2h0M985.5 601.9h0M986.1 593.3h0M987.3 598.6h0M994.5 597.6h0M984.5 707.7h0M991.2 710.3h0M989.3 706.4h0M1046.6 730.9h0M991.6 726.0h0M1016.0 730.2h0M997.6 724.0h0M1029.0 721.5h0M1041.0 719.9h0M833.3 492.2h0M867.6 471.6h0M855.6 478.3h0M793.3 496.3h0M931.8 777.1h0M932.7 780.1h0M924.9 781.7h0M937.0 778.5h0M795.8 760.0h0M800.7 755.0h0M816.5 757.1h0M752.7 701.5h0M744.7 713.7h0M754.9 694.6h0M746.6 707.8h0M754.0 705.3h0M752.2 708.7h0M776.6 726.4h0M776.8 720.2h0M840.7 778.6h0" stroke="#0f8a3d" stroke-width="2.4" stroke-linecap="round" fill="none"/><path d="M799.2 524.2h0M724.5 463.7h0M743.8 498.4h0M775.0 659.8h0M959.7 574.1h0M957.0 594.9h0M968.6 619.8h0M991.9 728.9h0M1035.3 718.0h0M1037.9 724.9h0M825.1 757.0h0M733.6 703.0h0M833.6 782.5h0" stroke="#5cb85f" stroke-width="2.4" stroke-linecap="round" fill="none"/><path d="M836.6 724.9h0M852.9 591.7h0M839.5 629.8h0M828.9 743.3h0M1044.9 502.2h0M845.0 596.8h0M928.0 668.7h0M777.7 591.9h0M992.0 676.8h0M865.9 584.8h0M1000.5 464.6h0M854.9 589.7h0M861.1 691.9h0M787.3 665.1h0M901.9 744.2h0M917.9 570.0h0M852.2 637.5h0M829.7 531.9h0M900.0 684.2h0M931.2 697.8h0M877.1 584.7h0M914.2 650.4h0M921.3 564.0h0M817.3 595.1h0M691.7 584.0h0M863.7 673.5h0M796.0 697.8h0M888.7 612.6h0M835.8 595.4h0M803.3 663.9h0M857.4 582.5h0M778.4 576.5h0M758.8 687.2h0M876.7 583.2h0M824.2 622.4h0M815.5 640.5h0M837.4 654.5h0M786.1 679.8h0M824.3 658.3h0M1002.1 596.3h0M777.1 652.3h0M880.4 609.4h0M818.3 626.8h0M849.2 588.3h0M954.3 573.2h0M864.2 694.1h0M958.5 624.9h0M1004.0 694.7h0M922.6 732.8h0M897.4 711.9h0M977.2 656.6h0M997.4 778.4h0M874.9 634.6h0M918.4 682.1h0M960.3 576.7h0M897.5 668.3h0M986.0 759.0h0M912.6 652.4h0M1057.3 650.3h0M880.6 653.7h0M893.3 705.4h0M866.1 677.3h0M926.6 574.8h0M1016.0 573.2h0M864.2 652.3h0M986.7 507.2h0M940.8 788.2h0M965.2 797.5h0M965.7 705.0h0M960.5 797.2h0M969.4 528.9h0M826.5 525.7h0M987.9 623.9h0M1146.8 640.6h0M989.0 558.2h0M1030.7 736.6h0M934.0 790.1h0M1059.6 685.9h0M1036.2 718.6h0M1057.8 710.9h0M1101.7 657.1h0M954.2 678.4h0M1098.5 731.2h0M1005.3 645.1h0M968.8 684.0h0M1061.3 685.3h0M984.1 676.6h0M1050.2 700.4h0M1050.5 721.8h0M1102.0 727.5h0M1070.7 699.5h0M858.0 711.6h0M981.9 742.8h0M888.6 731.6h0M960.4 735.9h0M991.4 683.2h0M1109.7 713.7h0M981.0 748.1h0M895.6 752.9h0M945.0 747.3h0M952.9 736.1h0M1052.4 737.9h0M777.2 744.7h0M798.4 696.4h0M773.4 723.5h0M777.0 793.1h0M803.6 700.3h0M807.3 711.8h0M771.4 664.7h0M1019.8 560.1h0M1082.8 650.9h0M1088.0 615.5h0M1089.2 600.2h0M1061.3 597.9h0M1042.0 631.7h0M1090.1 564.0h0M1047.3 692.2h0M1051.1 718.6h0M1046.8 623.2h0M1003.2 676.8h0M945.4 509.1h0M937.7 491.7h0M861.9 491.1h0M913.1 496.2h0M1005.6 502.3h0M871.9 531.1h0M1025.6 542.1h0M996.9 549.6h0M1023.7 531.2h0M984.3 504.6h0M956.9 545.9h0M999.2 551.1h0" stroke="#c9e6a0" stroke-width="2.4" stroke-linecap="round" fill="none"/><path d="M894.1 627.0h0M894.2 683.6h0M882.6 637.0h0M900.3 693.6h0M944.9 621.4h0M836.0 632.3h0M968.1 518.8h0M955.9 503.5h0M814.4 612.4h0M786.5 726.5h0M942.9 621.5h0M959.9 656.9h0M847.7 670.5h0M868.7 614.0h0M771.7 662.5h0M714.2 636.3h0M808.8 693.4h0M919.8 614.1h0M1031.6 628.7h0M913.2 666.6h0M805.9 735.7h0M749.4 632.1h0M761.8 531.0h0M811.4 633.6h0M912.0 544.3h0M814.1 634.2h0M762.2 542.3h0M868.8 606.9h0M890.0 685.6h0M853.8 624.6h0M796.8 545.4h0M960.2 723.6h0M930.6 688.5h0M917.6 676.9h0M877.7 727.1h0M884.1 683.6h0M870.3 664.3h0M915.1 631.7h0M831.1 709.5h0M788.1 710.4h0M1006.1 641.4h0M988.0 692.7h0M981.9 759.1h0M877.7 565.3h0M994.1 701.2h0M954.8 612.2h0M908.0 573.5h0M951.3 725.1h0M969.7 666.1h0M942.9 599.3h0M986.5 614.9h0M948.3 585.5h0M859.3 580.5h0M894.5 608.2h0M926.2 680.6h0M875.7 721.1h0M930.9 628.8h0M1002.0 630.3h0M905.0 732.8h0M861.2 614.6h0M878.5 622.3h0M1051.4 615.3h0M938.2 818.7h0M992.4 678.0h0M996.4 509.5h0M910.3 620.7h0M968.9 616.4h0M894.6 709.8h0M1032.3 616.3h0M871.5 693.7h0M880.7 618.2h0M972.6 727.7h0M1033.9 532.4h0M1013.3 646.0h0M968.4 666.1h0M965.2 521.9h0M976.4 714.8h0M927.4 685.5h0M890.6 651.1h0M873.1 653.8h0M880.6 544.7h0M1029.9 685.3h0M1063.2 694.2h0M1012.0 680.6h0M1018.0 701.8h0M1041.7 738.3h0M1061.4 686.9h0M1035.0 721.5h0M1046.0 663.8h0M987.8 721.0h0M975.1 738.1h0M932.3 758.9h0M977.8 680.8h0M976.9 695.4h0M1039.8 787.8h0M1010.6 681.1h0M1008.9 740.4h0M987.7 732.3h0M1056.1 751.9h0M1068.0 703.6h0M984.3 700.2h0M1043.8 767.6h0M979.8 690.7h0M1060.3 721.2h0M1089.7 772.0h0M1056.6 775.7h0M1040.2 751.8h0M1062.6 759.1h0M1046.1 719.0h0M1072.6 737.4h0M996.3 707.5h0M1025.8 855.4h0M953.2 715.6h0M962.0 774.9h0M1064.6 733.7h0M961.2 752.4h0M967.3 796.6h0M1079.7 702.9h0M1002.6 704.4h0M1030.1 731.0h0M1008.5 735.7h0M1070.2 752.2h0M860.9 760.3h0M839.1 667.5h0M1005.9 742.5h0M980.3 752.0h0M979.4 761.9h0M1092.4 812.6h0M1190.4 744.4h0M929.4 732.3h0M789.2 723.9h0M763.1 686.2h0M767.4 711.7h0M809.9 717.5h0M776.0 781.1h0M716.6 735.4h0M764.5 669.4h0M739.9 695.2h0M782.2 728.2h0M782.4 691.8h0M811.5 752.8h0M798.6 684.3h0M1117.5 623.7h0M1107.5 667.5h0M1053.2 746.4h0M1017.6 617.1h0M1083.5 651.2h0M1009.2 685.4h0M1092.8 600.8h0M1138.5 703.6h0M1055.5 577.5h0M1028.1 698.9h0M1074.6 584.7h0M1043.5 602.5h0M1083.2 688.3h0M921.2 516.2h0M899.4 487.0h0M872.7 504.3h0M861.4 486.2h0M936.3 547.2h0M943.7 464.3h0M945.8 503.7h0M821.7 465.1h0M930.0 507.2h0M878.0 485.7h0M1005.5 532.7h0M1005.4 533.8h0M1025.4 505.0h0M1008.3 495.3h0" stroke="#a6d97a" stroke-width="2.4" stroke-linecap="round" fill="none"/><path d="M886.3 640.4h0M931.8 685.9h0M882.4 596.8h0M827.0 518.4h0M962.4 638.2h0M938.7 700.1h0M859.9 629.0h0M894.0 581.8h0M935.7 596.0h0M825.0 619.9h0M805.5 684.6h0M770.7 568.7h0M791.4 514.1h0M856.8 507.4h0M920.9 713.2h0M828.8 604.9h0M863.2 696.6h0M772.9 753.8h0M815.0 562.5h0M950.0 690.5h0M925.5 705.7h0M765.5 673.7h0M737.2 542.8h0M848.9 586.6h0M941.7 684.9h0M901.9 657.8h0M1018.0 651.3h0M983.2 701.1h0M957.8 476.3h0M989.1 650.5h0M994.0 712.9h0M933.1 673.8h0M936.9 640.7h0M835.2 642.2h0M920.8 680.7h0M968.5 504.1h0M998.6 675.3h0M873.0 683.0h0M879.0 750.3h0M943.6 677.1h0M861.9 572.9h0M912.0 722.7h0M959.0 698.4h0M950.5 592.3h0M1025.1 701.0h0M1069.8 719.3h0M1119.4 694.5h0M1080.2 625.9h0M1022.3 661.1h0M1082.9 706.2h0M1097.0 726.7h0M1047.8 732.2h0M1034.3 738.6h0M916.5 672.0h0M1025.7 799.6h0M1098.9 731.3h0M1015.7 744.7h0M1082.4 747.8h0M976.4 685.3h0M1084.5 781.5h0M1172.7 778.0h0M997.9 757.0h0M992.4 722.6h0M972.2 728.1h0M979.7 683.4h0M1047.8 763.5h0M1004.8 770.9h0M965.6 764.4h0M1180.6 772.0h0M1130.8 775.4h0M915.5 747.0h0M1116.1 743.6h0M1035.1 767.5h0M1019.7 771.6h0M794.0 738.3h0M757.6 728.1h0M757.1 744.6h0M1048.9 664.1h0M1080.5 713.9h0M1083.0 751.8h0M1105.3 666.6h0M1087.2 596.1h0M837.7 500.1h0M938.6 485.8h0" stroke="#6fc067" stroke-width="2.4" stroke-linecap="round" fill="none"/><path d="M862.8 665.5h0M922.1 713.5h0M944.4 578.9h0M746.1 776.2h0" stroke="#f8b070" stroke-width="2.4" stroke-linecap="round" fill="none"/><path d="M783.1 730.9h0M796.2 717.2h0" stroke="#0b7f3a" stroke-width="1.6" stroke-linecap="round" fill="none"/><path d="M791.6 719.3h0" stroke="#35a452" stroke-width="1.6" stroke-linecap="round" fill="none"/><path d="M733.3 705.7h0M784.1 716.5h0" stroke="#15924a" stroke-width="1.6" stroke-linecap="round" fill="none"/><path d="M741.8 708.2h0M749.3 688.3h0M757.1 698.3h0M798.7 718.2h0M792.7 717.0h0" stroke="#0f8a3d" stroke-width="1.6" stroke-linecap="round" fill="none"/><path d="M795.7 721.9h0M790.1 733.0h0" stroke="#5cb85f" stroke-width="1.6" stroke-linecap="round" fill="none"/><path d="M833.7 618.0h0M926.7 563.7h0M813.7 748.3h0M843.9 594.5h0M903.1 550.1h0M800.9 673.9h0M888.0 618.8h0M804.2 603.7h0M850.7 575.8h0M958.6 684.2h0M894.2 758.0h0M699.1 677.0h0M839.2 555.7h0M867.2 699.7h0M829.5 665.0h0M692.8 723.4h0M902.3 624.5h0M845.5 643.7h0M766.4 609.6h0M822.6 588.4h0M736.9 724.9h0M764.6 698.0h0M935.9 732.0h0M864.2 750.0h0M841.5 701.9h0M970.4 603.0h0M1003.0 615.8h0M770.1 589.3h0M854.3 648.6h0M817.3 699.9h0M904.5 581.4h0M870.7 678.3h0M989.8 641.0h0M920.5 540.4h0M831.8 573.8h0M799.1 632.7h0M1010.8 628.7h0M880.0 583.5h0M918.2 553.8h0M802.3 721.0h0M848.1 574.5h0M814.7 568.2h0M971.6 671.4h0M998.1 645.1h0M877.7 593.2h0M955.0 695.7h0M1038.6 559.8h0M941.1 742.1h0M917.9 669.9h0M809.0 705.5h0M790.9 658.2h0M853.2 712.5h0M732.5 709.4h0M716.7 677.9h0M899.5 625.8h0M783.8 507.8h0M763.1 572.8h0M811.9 719.9h0M820.2 733.6h0M891.5 566.0h0M804.1 640.4h0M972.0 714.7h0M795.5 713.1h0M897.5 697.3h0M910.2 598.8h0M1016.6 619.2h0M797.0 614.2h0M872.2 700.6h0M967.8 680.0h0M818.2 647.0h0M893.2 617.5h0M873.8 753.9h0M927.0 635.1h0M777.9 704.1h0M812.7 698.9h0M971.5 533.0h0M814.4 659.4h0M810.0 633.7h0M876.6 584.6h0M848.2 550.4h0M782.7 640.4h0M921.3 604.7h0M898.4 475.2h0M836.3 527.4h0M908.9 770.4h0M871.5 753.7h0M884.7 503.4h0M917.6 518.1h0M782.7 446.1h0M921.9 521.4h0M1033.9 634.8h0M982.3 508.0h0M955.1 726.5h0M855.1 671.5h0M929.5 714.0h0M919.3 712.3h0M907.3 678.5h0M980.8 691.9h0M882.5 649.2h0M935.7 603.9h0M905.4 587.1h0M828.0 704.4h0M988.8 742.3h0M922.4 682.5h0M1030.7 581.0h0M945.3 685.6h0M949.5 545.2h0M935.5 573.7h0M984.1 721.6h0M961.9 684.6h0M996.0 722.2h0M975.6 794.6h0M969.2 680.5h0M998.3 684.8h0M880.1 704.6h0M962.2 620.9h0M999.6 664.0h0M888.6 735.7h0M948.2 654.8h0M1026.8 673.3h0M883.3 766.7h0M963.1 658.2h0M974.1 685.0h0M978.0 755.0h0M971.7 544.4h0M1003.9 571.9h0M881.8 576.7h0M961.4 746.4h0M1074.5 704.2h0M941.5 742.3h0M876.6 786.5h0M1060.1 787.2h0M938.2 555.4h0M984.6 677.8h0M949.8 663.4h0M965.3 548.2h0M966.7 689.2h0M992.9 777.8h0M1064.1 697.5h0M1033.4 712.1h0M914.8 668.8h0M958.7 810.7h0M872.7 740.8h0M1015.3 587.4h0M1001.4 669.9h0M917.9 678.2h0M918.1 619.9h0M1065.8 751.7h0M981.6 708.6h0M1166.2 759.4h0M1056.7 696.2h0M898.5 709.6h0M965.2 702.5h0M1065.6 700.5h0M1021.4 658.2h0M991.3 686.8h0M1086.3 715.4h0M1012.0 655.6h0M939.8 648.8h0M974.5 650.5h0M1074.3 695.1h0M945.4 637.7h0M1074.9 654.6h0M975.0 730.5h0M1099.0 690.9h0M917.2 646.4h0M1062.9 633.9h0M1009.2 748.3h0M1036.9 680.8h0M1081.2 707.3h0M1038.0 770.9h0M1074.7 740.8h0M1013.7 670.8h0M1106.0 676.9h0M930.0 677.6h0M1074.0 690.3h0M1030.0 707.1h0M1102.0 703.6h0M1051.1 689.2h0M1023.4 686.7h0M1017.0 716.1h0M1028.9 672.1h0M977.1 634.2h0M919.6 642.7h0M962.6 726.6h0M1022.8 686.4h0M1055.6 669.2h0M1080.1 741.2h0M1040.1 774.0h0M1011.7 703.2h0M961.5 778.4h0M1057.6 729.8h0M1013.7 729.4h0M1017.9 739.3h0M985.7 799.2h0M907.3 751.6h0M1022.2 693.3h0M1058.7 721.9h0M1018.4 728.2h0M912.4 723.1h0M1045.3 709.4h0M974.5 747.3h0M1133.9 713.7h0M952.5 723.0h0M965.9 808.6h0M1005.0 667.2h0M1167.2 794.0h0M1035.3 785.3h0M1052.5 750.4h0M965.3 830.8h0M971.1 755.1h0M973.5 709.1h0M886.7 785.7h0M1055.6 702.0h0M856.2 755.3h0M911.8 770.7h0M1077.7 753.6h0M1017.1 704.8h0M967.1 715.7h0M921.4 782.8h0M1028.1 743.7h0M1022.4 738.6h0M785.1 728.8h0M785.4 795.6h0M744.6 746.4h0M768.0 711.5h0M742.2 741.0h0M729.7 725.0h0M746.4 743.7h0M820.4 760.3h0M759.9 734.7h0M756.3 624.8h0M776.4 713.8h0M778.9 775.1h0M738.0 684.1h0M753.3 708.7h0M811.9 714.1h0M1141.8 662.5h0M1093.4 507.3h0M1062.2 707.4h0M1055.2 654.3h0M1093.2 646.0h0M993.1 642.8h0M1046.0 661.6h0M1065.3 637.3h0M1111.4 610.1h0M1030.1 666.9h0M1012.2 660.1h0M1097.4 602.3h0M1072.3 617.9h0M1036.9 546.7h0M964.9 676.8h0M1102.6 608.2h0M1048.1 688.3h0M1031.4 621.1h0M1015.0 639.4h0M1097.2 586.0h0M1034.3 608.8h0M1094.1 596.2h0M1056.4 684.1h0M1023.4 632.7h0M1021.1 614.2h0M1106.9 585.7h0M1026.4 579.0h0M924.2 483.4h0M921.7 473.3h0M948.6 486.3h0M930.2 456.7h0M915.1 465.5h0M925.4 519.3h0M907.1 517.0h0M812.6 484.8h0M966.2 489.8h0M947.0 488.0h0M943.8 509.6h0M1002.8 503.2h0M985.5 548.8h0M992.5 514.7h0M975.7 532.1h0M993.9 553.3h0M1016.3 539.9h0M1014.7 564.2h0M1018.5 537.7h0" stroke="#c9e6a0" stroke-width="1.6" stroke-linecap="round" fill="none"/><path d="M836.1 654.8h0M854.6 559.3h0M836.8 474.8h0M867.5 806.1h0M849.9 694.6h0M900.8 803.6h0M866.5 612.4h0M932.4 653.5h0M863.3 603.5h0M856.5 744.0h0M835.1 587.2h0M981.6 614.9h0M689.4 635.0h0M875.2 724.2h0M837.8 673.3h0M887.1 688.5h0M776.8 540.1h0M727.2 693.3h0M885.2 681.4h0M829.7 609.4h0M819.6 595.6h0M946.5 558.1h0M966.8 651.4h0M828.9 643.2h0M837.9 760.0h0M894.7 577.5h0M906.3 721.4h0M979.5 646.4h0M829.1 747.1h0M937.5 661.1h0M872.1 613.9h0M768.3 702.4h0M819.9 654.8h0M927.0 546.2h0M763.6 584.9h0M915.2 617.4h0M752.8 710.4h0M922.8 611.3h0M851.9 599.6h0M815.1 717.5h0M820.7 575.1h0M745.8 733.7h0M906.5 608.2h0M905.4 629.7h0M891.1 740.5h0M829.6 620.3h0M772.0 645.8h0M865.3 625.5h0M902.5 608.8h0M839.4 664.4h0M831.5 775.4h0M1035.5 703.9h0M927.9 794.8h0M966.3 486.0h0M821.9 622.6h0M779.2 512.1h0M788.9 540.7h0M835.2 689.1h0M933.2 632.4h0M904.1 559.8h0M839.3 715.6h0M991.7 752.3h0M805.5 601.9h0M800.7 561.2h0M736.3 562.8h0M895.4 618.8h0M859.5 568.7h0M689.4 745.7h0M894.8 727.2h0M853.3 525.1h0M939.9 686.8h0M883.9 537.1h0M919.5 756.8h0M778.4 578.9h0M943.1 663.2h0M1033.9 555.8h0M883.7 730.0h0M935.6 780.5h0M807.8 652.1h0M789.3 634.5h0M778.9 623.9h0M957.7 621.7h0M944.2 537.9h0M904.3 645.8h0M900.7 756.9h0M712.6 685.3h0M873.7 589.6h0M879.0 604.6h0M878.8 670.9h0M890.6 703.3h0M822.6 677.5h0M882.2 596.5h0M832.8 639.3h0M990.0 611.7h0M973.2 577.8h0M907.1 794.8h0M959.8 586.3h0M949.2 584.2h0M845.7 655.2h0M920.6 623.9h0M980.1 570.2h0M880.4 586.4h0M950.2 700.0h0M892.7 610.8h0M922.9 623.3h0M972.3 697.1h0M1009.3 718.9h0M943.6 556.5h0M912.4 607.8h0M951.0 698.3h0M940.4 576.5h0M926.6 590.6h0M916.4 623.4h0M853.1 706.7h0M892.7 636.9h0M912.0 527.8h0M950.0 704.8h0M999.6 640.9h0M963.9 721.5h0M844.3 636.5h0M1021.9 717.5h0M919.7 605.4h0M995.8 733.9h0M942.7 732.3h0M958.1 714.8h0M956.4 611.4h0M856.5 634.3h0M956.0 745.8h0M969.8 777.2h0M982.7 600.3h0M928.1 594.7h0M936.5 799.0h0M936.6 689.9h0M898.1 703.5h0M917.5 686.2h0M875.9 624.3h0M993.7 687.2h0M882.0 658.6h0M951.6 728.7h0M974.2 648.9h0M1031.3 577.6h0M903.4 528.6h0M890.2 677.5h0M903.4 669.2h0M897.3 683.6h0M857.2 703.0h0M1031.2 628.8h0M929.2 606.9h0M1039.5 739.0h0M961.1 689.8h0M1004.4 677.3h0M1051.2 677.7h0M1065.9 679.1h0M1087.5 534.8h0M1042.6 744.3h0M863.5 782.5h0M1101.4 654.9h0M1106.5 674.8h0M1046.0 681.9h0M1052.8 700.7h0M938.7 662.6h0M1095.0 716.9h0M1025.3 726.7h0M1014.3 792.1h0M999.4 662.5h0M1143.6 671.9h0M1005.8 665.7h0M1034.7 677.2h0M1044.2 737.5h0M1022.5 719.8h0M992.6 668.4h0M1016.4 704.9h0M954.2 738.8h0M1008.0 720.8h0M1137.2 676.8h0M1103.6 770.4h0M988.0 678.6h0M1072.0 776.7h0M1122.6 723.5h0M1042.3 689.5h0M1044.4 652.5h0M1123.1 732.1h0M1061.3 650.2h0M1098.4 708.4h0M945.2 674.7h0M1055.3 676.5h0M1084.5 722.5h0M900.6 702.9h0M1000.3 732.7h0M981.8 714.7h0M1070.4 706.6h0M1063.2 728.0h0M1056.3 699.2h0M1061.3 763.5h0M1069.0 736.6h0M1057.6 661.1h0M1127.8 721.2h0M1100.9 706.4h0M965.3 661.5h0M980.7 707.5h0M1004.7 702.4h0M932.4 762.0h0M1062.2 733.1h0M1007.5 741.1h0M972.1 726.2h0M927.7 725.4h0M1062.6 718.9h0M1004.4 752.5h0M1067.3 726.3h0M1114.7 815.5h0M994.6 803.3h0M899.3 746.9h0M998.9 764.8h0M1008.6 706.6h0M1057.1 750.1h0M972.2 758.4h0M1036.0 750.9h0M1115.9 747.3h0M904.5 741.1h0M1083.4 788.1h0M974.0 778.1h0M959.2 723.3h0M1091.8 709.5h0M1017.3 817.5h0M1141.8 778.8h0M1107.8 725.9h0M1010.7 747.1h0M1015.3 712.0h0M1036.2 782.2h0M940.9 807.4h0M989.1 758.3h0M1008.8 726.4h0M960.3 744.8h0M974.2 752.9h0M1070.2 711.5h0M967.9 792.4h0M924.2 741.9h0M1040.1 728.5h0M997.4 768.5h0M1003.7 704.9h0M951.8 813.8h0M734.4 733.5h0M726.4 730.4h0M763.9 776.7h0M780.5 682.0h0M770.9 705.0h0M801.4 743.1h0M770.8 723.4h0M764.6 713.6h0M792.8 753.6h0M771.6 669.7h0M783.9 773.1h0M772.8 698.1h0M807.7 755.8h0M754.1 712.0h0M781.1 724.4h0M784.4 672.6h0M784.7 769.5h0M772.1 682.3h0M767.2 692.2h0M738.8 743.7h0M799.7 649.3h0M807.1 689.2h0M789.4 716.4h0M722.9 680.0h0M760.8 686.6h0M804.3 736.4h0M781.7 734.6h0M1139.7 593.1h0M1060.2 685.4h0M996.0 693.6h0M1038.5 673.7h0M1086.7 674.6h0M1055.8 801.7h0M1002.2 659.7h0M1079.3 645.8h0M1120.3 624.4h0M1138.8 630.9h0M1058.9 656.1h0M1010.3 643.4h0M1076.7 651.0h0M1079.1 604.4h0M1071.1 583.3h0M1038.1 683.8h0M1041.4 729.7h0M965.2 663.8h0M1053.2 625.8h0M1090.8 566.2h0M1064.0 686.1h0M1066.0 649.9h0M1072.7 591.9h0M1050.5 643.9h0M1127.2 542.5h0M1133.6 666.1h0M1108.5 652.5h0M941.9 503.9h0M889.8 561.5h0M936.7 508.1h0M926.5 483.5h0M893.4 513.9h0M877.5 505.7h0M900.6 446.8h0M917.5 477.5h0M976.5 475.3h0M988.9 492.7h0M993.9 570.6h0M966.0 522.7h0M998.9 552.6h0M983.0 548.6h0M1012.8 533.1h0M1005.0 497.4h0M1013.6 494.4h0M1008.0 542.9h0M991.8 558.5h0" stroke="#a6d97a" stroke-width="1.6" stroke-linecap="round" fill="none"/><path d="M833.6 668.9h0M835.4 750.0h0M657.5 638.0h0M842.9 612.9h0M789.7 529.9h0M931.9 650.0h0M767.2 630.9h0M830.7 572.7h0M798.0 728.1h0M892.9 616.9h0M790.6 627.4h0M959.9 613.1h0M866.7 656.3h0M836.0 580.2h0M903.6 780.2h0M884.4 609.9h0M775.5 697.4h0M816.7 638.6h0M992.6 610.4h0M1047.0 623.4h0M698.6 667.3h0M817.5 643.5h0M728.8 690.1h0M962.9 521.5h0M1028.6 694.0h0M840.1 730.9h0M753.0 684.0h0M846.7 608.3h0M764.5 620.2h0M887.7 724.8h0M851.6 586.4h0M819.8 542.3h0M885.6 661.1h0M835.6 590.7h0M927.5 619.5h0M780.9 670.2h0M717.9 695.1h0M766.5 721.0h0M918.1 725.6h0M1010.5 501.6h0M852.6 608.1h0M945.7 491.9h0M1034.3 672.6h0M773.4 748.8h0M794.4 641.7h0M828.4 574.1h0M927.5 524.8h0M842.6 508.9h0M914.3 775.4h0M649.2 751.5h0M984.2 616.4h0M1024.7 583.4h0M1067.4 580.8h0M939.1 639.8h0M987.4 549.8h0M957.1 718.8h0M1013.6 519.2h0M979.6 787.9h0M989.8 772.3h0M929.6 570.0h0M896.2 599.9h0M925.4 610.9h0M1047.0 582.3h0M936.9 570.7h0M990.8 667.0h0M934.1 620.5h0M930.0 655.1h0M870.9 622.8h0M1032.1 684.6h0M874.9 699.2h0M973.1 712.0h0M1034.7 708.2h0M1053.5 752.9h0M1026.3 740.7h0M1077.2 690.2h0M1115.5 721.8h0M1023.1 726.0h0M1096.2 645.4h0M1044.2 723.4h0M1025.2 689.8h0M970.5 605.2h0M1003.2 641.4h0M947.4 731.8h0M1031.0 705.4h0M1036.5 713.1h0M931.1 709.0h0M1074.9 720.2h0M1082.9 711.1h0M911.7 773.1h0M1035.3 780.3h0M1054.8 751.5h0M1071.2 801.9h0M935.1 690.9h0M1109.6 694.7h0M975.0 750.9h0M962.8 765.2h0M782.7 679.0h0M794.1 715.1h0M783.5 695.6h0M753.5 724.0h0M764.3 796.2h0M776.3 698.7h0M815.2 718.1h0M731.0 764.7h0M771.3 747.7h0M754.9 724.5h0M806.7 695.2h0M1088.6 749.8h0M1073.3 640.7h0M1102.7 712.3h0M1048.0 616.2h0M1106.5 596.4h0M1064.9 577.4h0M1038.1 646.5h0M1066.4 706.5h0M1092.2 703.7h0M1044.1 675.3h0M1098.8 647.7h0M967.0 467.6h0M944.1 468.8h0M903.9 509.8h0M963.2 514.9h0M976.3 504.4h0M931.3 508.7h0M992.7 499.0h0M914.4 483.9h0M949.0 471.9h0M1006.1 522.4h0M920.2 473.0h0M991.2 481.8h0M977.5 506.5h0M912.1 516.5h0M955.6 495.9h0M969.0 473.0h0M995.9 543.1h0M995.6 474.8h0M985.6 483.8h0" stroke="#6fc067" stroke-width="1.6" stroke-linecap="round" fill="none"/><path d="M820.0 631.4h0M786.0 616.1h0M823.9 617.1h0M889.8 719.8h0M989.9 690.4h0M979.4 680.3h0M1037.8 618.5h0M973.8 715.6h0M1022.2 727.5h0M1102.1 579.3h0M1063.5 642.0h0M1058.0 650.0h0M1066.7 643.2h0M976.8 734.8h0M1072.9 804.8h0M909.9 755.6h0M777.2 721.6h0M776.9 719.7h0M1033.5 686.5h0M937.3 510.5h0M990.5 506.4h0" stroke="#f8b070" stroke-width="1.6" stroke-linecap="round" fill="none"/><path d="M867.4 675.1h0M914.1 639.0h0M805.2 579.4h0M898.4 621.0h0M853.1 604.3h0M979.3 661.2h0M879.4 826.4h0M956.0 620.4h0M780.5 666.6h0M761.0 731.9h0M965.5 596.5h0M731.2 661.1h0M828.1 570.1h0M831.2 510.2h0M903.9 594.9h0M884.2 541.7h0M999.2 690.1h0M942.0 574.9h0M955.1 695.4h0M840.1 633.1h0M982.8 736.5h0M907.2 747.0h0M902.7 533.7h0M1086.1 771.9h0M1010.3 644.4h0M1007.0 764.1h0M1074.0 685.9h0M1129.9 719.6h0M967.9 720.7h0M952.4 664.6h0M1012.0 720.5h0M1037.3 699.3h0M1086.6 665.3h0M935.2 711.8h0M917.5 759.8h0M1052.3 781.6h0M920.2 746.7h0M960.9 789.4h0M1030.7 714.6h0M948.0 740.1h0M1047.9 742.8h0M752.6 731.3h0M751.6 693.5h0M810.7 693.1h0M778.2 701.5h0M809.3 734.0h0M1096.7 745.8h0M1099.5 639.0h0M1038.9 657.5h0M1054.3 635.6h0M1029.8 677.2h0M1057.6 600.7h0M1029.1 492.3h0" stroke="#c9e6a0" stroke-width="0.8" stroke-linecap="round" fill="none"/><path d="M872.1 634.6h0M942.5 694.0h0M916.8 608.1h0M843.1 635.7h0M863.1 635.8h0M821.8 669.9h0M893.0 461.3h0M928.0 746.5h0M798.5 655.6h0M917.8 574.8h0M926.3 684.9h0M810.1 657.5h0M880.0 611.4h0M860.7 625.8h0M973.0 585.2h0M942.8 808.5h0M839.1 666.7h0M910.5 679.5h0M665.6 544.2h0M964.3 544.7h0M822.6 629.3h0M861.2 609.2h0M1002.8 697.1h0M897.8 664.0h0M800.1 647.3h0M976.6 616.7h0M802.3 651.2h0M776.4 663.9h0M850.0 785.5h0M753.5 662.5h0M824.6 594.7h0M815.2 608.0h0M814.2 664.7h0M852.6 585.9h0M863.0 651.8h0M911.1 623.5h0M929.3 786.7h0M1021.6 612.4h0M930.4 752.6h0M963.7 658.2h0M908.7 727.0h0M873.9 499.3h0M981.5 599.0h0M945.5 610.9h0M885.5 522.5h0M966.2 616.2h0M989.3 765.8h0M896.5 587.7h0M967.7 640.8h0M914.9 475.9h0M826.8 798.2h0M1096.4 733.2h0M992.6 642.0h0M1033.8 692.3h0M947.5 688.0h0M987.9 758.4h0M1024.7 702.7h0M1021.4 707.1h0M985.9 699.9h0M1061.2 627.2h0M1091.8 775.5h0M1026.6 690.2h0M1061.4 672.1h0M969.8 769.9h0M1036.0 598.4h0M1028.4 676.7h0M1061.8 751.4h0M1046.3 729.0h0M950.8 768.7h0M992.8 757.4h0M925.8 751.6h0M888.9 743.4h0M853.1 715.7h0M1019.7 769.9h0M1004.6 719.0h0M938.1 797.5h0M1056.3 687.2h0M745.0 740.4h0M978.9 787.4h0M1078.7 681.6h0M1014.1 608.9h0M1061.0 679.9h0M1084.2 661.7h0M1046.7 578.4h0M983.0 492.9h0M905.9 495.2h0M902.8 533.8h0M1007.7 562.8h0M1033.3 528.6h0M1028.6 443.3h0M963.6 501.2h0M986.2 523.7h0M986.1 507.9h0" stroke="#a6d97a" stroke-width="0.8" stroke-linecap="round" fill="none"/><path d="M884.6 479.7h0M739.0 577.0h0M880.3 509.5h0M846.4 657.2h0M849.4 597.2h0M806.6 671.6h0M965.3 634.7h0M931.5 571.0h0M931.7 544.5h0M724.7 546.7h0M780.7 681.2h0M822.8 646.1h0M804.5 551.1h0M681.8 678.4h0M934.8 632.2h0M823.1 640.1h0M903.5 670.8h0M939.4 688.2h0M953.6 683.9h0M1020.7 765.9h0M940.2 696.8h0M1090.0 656.8h0M1109.0 692.0h0M982.8 688.8h0M1164.3 783.8h0M949.6 692.3h0M1100.6 703.2h0M789.7 735.3h0M777.5 714.1h0M772.2 722.3h0M761.9 746.4h0M765.1 702.5h0M1077.5 714.5h0M1083.8 624.1h0M1040.3 598.1h0M904.3 506.8h0M940.1 493.8h0M1029.4 510.4h0" stroke="#6fc067" stroke-width="0.8" stroke-linecap="round" fill="none"/><path d="M909.7 655.7h0M769.9 556.2h0M776.1 660.4h0M818.6 547.2h0M984.5 693.6h0M926.6 603.5h0M1113.8 636.5h0M967.7 778.5h0M972.6 703.1h0M802.8 708.8h0" stroke="#f8b070" stroke-width="0.8" stroke-linecap="round" fill="none"/><rect x="772.2" y="549.7" width="2.2" height="1" fill="#f58a4c" transform="rotate(-35 773.2 550.2)"/><rect x="794.1" y="558.4" width="2.2" height="1" fill="#f58a4c" transform="rotate(-35 795.1 558.9)"/><rect x="842.9" y="589.8" width="2.2" height="1" fill="#f58a4c" transform="rotate(-35 843.9 590.3)"/><rect x="884.7" y="610.7" width="2.2" height="1" fill="#f58a4c" transform="rotate(-35 885.7 611.2)"/><rect x="935.2" y="619.4" width="2.2" height="1" fill="#f58a4c" transform="rotate(-35 936.2 619.9)"/><rect x="907.4" y="656.0" width="2.2" height="1" fill="#f58a4c" transform="rotate(-35 908.4 656.5)"/><rect x="947.4" y="638.6" width="2.2" height="1" fill="#f58a4c" transform="rotate(-35 948.4 639.1)"/><rect x="952.7" y="668.2" width="2.2" height="1" fill="#f58a4c" transform="rotate(-35 953.7 668.7)"/><rect x="1013.6" y="668.2" width="2.2" height="1" fill="#f58a4c" transform="rotate(-35 1014.6 668.7)"/><rect x="1022.3" y="710.0" width="2.2" height="1" fill="#f58a4c" transform="rotate(-35 1023.3 710.5)"/><rect x="1104.2" y="718.7" width="2.2" height="1" fill="#f58a4c" transform="rotate(-35 1105.2 719.2)"/><rect x="982.3" y="636.8" width="2.2" height="1" fill="#f58a4c" transform="rotate(-35 983.3 637.3)"/><rect x="842.9" y="760.5" width="2.2" height="1" fill="#f58a4c" transform="rotate(-35 843.9 761.0)"/><rect x="1168.5" y="726.8" width="8" height="1.3" fill="#ea4b2e" transform="rotate(-55 1172.5 727.4)"/><path d="M1203.5 640c-3 5-4 10-3 16s3 11 1 17" fill="none" stroke="#2f9b4b" stroke-width="1.1" opacity=".85"/><g font-family="DejaVu Sans, Liberation Sans, sans-serif" text-anchor="middle" stroke="#f6f2c8" stroke-width="1.2" paint-order="stroke" stroke-linejoin="round"><text x="462.5" y="132.2" font-size="7.7" fill="#a272b4">Kıbrıs</text><text x="460.0" y="121.7" font-size="7.7" fill="#a272b4">Κύπρος</text><text x="457.0" y="151.8" font-size="6.7" fill="#33313b">Λεμεσός</text><text x="577.4" y="122.5" font-size="7.2" fill="#33313b">حماة</text><text x="549.2" y="133.1" font-size="6.7" fill="#33313b">طرطوس</text><text x="576.1" y="150.2" font-size="7.7" fill="#33313b">حمص</text><text x="547.4" y="151.1" font-size="6.7" fill="#33313b">طرابلس</text><text x="547.4" y="179.3" font-size="8.7" fill="#9868ad">لبنان</text><text x="562.4" y="200.6" font-size="7.7" fill="#33313b">دمشق</text><text x="606.1" y="193.5" font-size="6.7" fill="#a272b4">محافظة ريف دمشق</text><text x="526.2" y="196.5" font-size="6.7" fill="#33313b">صور</text><text x="521.2" y="213.2" font-size="7.2" fill="#33313b">חיפה</text><text x="548.7" y="224.0" font-size="6.7" fill="#33313b">إربد</text><text x="571.1" y="228.5" font-size="6.7" fill="#33313b">السويداء</text><text x="622.4" y="229.0" font-size="6.7" fill="#a272b4">المفرق</text><text x="513.7" y="240.1" font-size="7.7" fill="#33313b">תל אביב-יפו</text><text x="549.9" y="245.1" font-size="7.7" fill="#33313b">عمان</text><text x="507.4" y="258.4" font-size="7.7" fill="#33313b">ירושלים</text><text x="508.7" y="272.4" font-size="8.7" fill="#9868ad">ישראל</text><text x="433.7" y="271.7" font-size="7.2" fill="#33313b">بورسعيد</text><text x="481.7" y="290.2" font-size="6.7" fill="#33313b">العريش</text><text x="563.6" y="277.4" font-size="8.7" fill="#9868ad">الأردن</text><text x="596.6" y="269.7" font-size="6.7" fill="#33313b">القريات</text><text x="432.5" y="296.8" font-size="7.7" fill="#33313b">الإسماعيلية</text><text x="516.7" y="299.0" font-size="6.7" fill="#a272b4">מחוז הדרום</text><text x="475.0" y="307.2" font-size="6.7" fill="#a272b4">شمال سيناء</text><text x="440.7" y="320.6" font-size="7.7" fill="#33313b">السويس</text><text x="544.4" y="324.0" font-size="6.7" fill="#33313b">معان</text><text x="569.9" y="317.7" font-size="6.7" fill="#a272b4">معان</text><text x="521.2" y="337.2" font-size="6.7" fill="#33313b">العقبة</text><text x="552.4" y="340.9" font-size="6.7" fill="#33313b">منيشير</text><text x="460.0" y="354.2" font-size="6.7" fill="#33313b">أبو زنيمة</text><text x="483.7" y="375.9" font-size="6.7" fill="#a272b4">جنوب سيناء</text><text x="571.1" y="392.5" font-size="7.7" fill="#33313b">تبوك</text><text x="691.1" y="205.3" font-size="6.7" fill="#33313b">رطبة</text><text x="762.3" y="200.5" font-size="8.7" fill="#9868ad">العراق</text><text x="731.8" y="214.3" font-size="6.7" fill="#a272b4">محافظة الأنبار</text><text x="715.3" y="293.5" font-size="6.7" fill="#33313b">عرعر</text><text x="671.6" y="323.5" font-size="6.7" fill="#a272b4">منطقة الجوف</text><text x="767.3" y="321.0" font-size="6.7" fill="#a272b4">منطقة الحدود</text><text x="769.8" y="327.7" font-size="6.7" fill="#a272b4">الشمالية</text><text x="575.6" y="425.3" font-size="6.7" fill="#a272b4">منطقة تبوك</text><text x="483.2" y="422.3" font-size="6.7" fill="#33313b">الغردقة</text><text x="415.0" y="447.0" font-size="7.2" fill="#33313b">سوهاج</text><text x="447.0" y="460.0" font-size="7.2" fill="#33313b">قنا</text><text x="444.5" y="490.1" font-size="7.7" fill="#33313b">الأقصر</text><text x="491.9" y="486.0" font-size="6.7" fill="#a272b4">البحر الأحمر</text><text x="452.5" y="534.9" font-size="7.2" fill="#33313b">أسوان</text><text x="445.0" y="556.0" font-size="6.7" fill="#a272b4">أسوان</text><text x="619.4" y="536.0" font-size="6.7" fill="#33313b">ينبع</text><text x="668.6" y="534.4" font-size="7.2" fill="#33313b">المدينة المنورة</text><text x="684.8" y="503.0" font-size="6.7" fill="#a272b4">منطقة المدينة</text><text x="681.1" y="511.5" font-size="6.7" fill="#a272b4">المنورة</text><text x="731.0" y="427.8" font-size="6.7" fill="#a272b4">منطقة حائل</text><text x="676.6" y="628.0" font-size="7.7" fill="#33313b">مكة</text><text x="654.8" y="634.9" font-size="7.2" fill="#33313b">جدة</text><text x="727.3" y="638.9" font-size="6.7" fill="#a272b4">منطقة مكة</text><text x="727.3" y="647.2" font-size="6.7" fill="#a272b4">المكرمة</text><text x="591.9" y="690.6" font-size="7.7" fill="#33313b">بورتسودان</text><text x="579.9" y="717.9" font-size="7.2" fill="#33313b">سنكات</text><text x="539.2" y="699.8" font-size="6.7" fill="#a272b4">البحر الأحمر</text><text x="466.7" y="693.7" font-size="7.2" fill="#33313b">أبو حمد</text><text x="457.0" y="718.0" font-size="6.7" fill="#a272b4">نهر النيل</text><text x="487.4" y="767.4" font-size="7.2" fill="#33313b">عطبرة</text><text x="470.0" y="790.4" font-size="7.2" fill="#33313b">شندي</text><text x="482.4" y="817.4" font-size="7.2" fill="#33313b">أبو دليق</text><text x="440.7" y="826.8" font-size="7.7" fill="#33313b">الخرطوم</text><text x="469.5" y="849.9" font-size="7.2" fill="#33313b">تمبول</text><text x="469.5" y="867.7" font-size="6.7" fill="#a272b4">ولاية الجزيرة</text><text x="565.6" y="831.3" font-size="7.7" fill="#33313b">كسلا</text><text x="541.9" y="838.9" font-size="6.7" fill="#a272b4">كسلا</text><text x="548.7" y="860.9" font-size="6.7" fill="#33313b">المنصورة</text><text x="603.6" y="804.7" font-size="6.7" fill="#a272b4">Ansebā عنسبا</text><text x="639.8" y="839.9" font-size="8.7" fill="#9868ad">Eritrea</text><text x="639.3" y="851.1" font-size="7.2" fill="#a272b4">إرتريا</text><text x="729.8" y="676.8" font-size="6.7" fill="#33313b">الباحة</text><text x="766.8" y="676.8" font-size="6.7" fill="#33313b">بيشة</text><text x="746.0" y="692.8" font-size="6.7" fill="#33313b">سبت العلاية</text><text x="763.5" y="737.6" font-size="7.7" fill="#33313b">أبها</text><text x="764.8" y="795.2" font-size="6.7" fill="#33313b">جيزان</text><text x="773.5" y="852.5" font-size="7.7" fill="#33313b">الحديدة</text><text x="772.5" y="181.8" font-size="6.7" fill="#33313b">هيت</text><text x="805.0" y="192.3" font-size="6.7" fill="#33313b">الفلوجة</text><text x="824.5" y="207.6" font-size="7.7" fill="#33313b">بغداد</text><text x="813.0" y="220.6" font-size="7.7" fill="#33313b">كربلاء</text><text x="825.7" y="238.9" font-size="7.7" fill="#33313b">الحلة</text><text x="822.5" y="257.1" font-size="7.7" fill="#33313b">النجف</text><text x="856.7" y="237.3" font-size="6.7" fill="#33313b">الشوملي</text><text x="858.7" y="250.9" font-size="7.7" fill="#33313b">الديوانية</text><text x="851.2" y="273.5" font-size="6.7" fill="#33313b">الرميثة</text><text x="866.2" y="221.8" font-size="6.7" fill="#a272b4">محافظة واسط</text><text x="884.4" y="274.2" font-size="6.7" fill="#a272b4">محافظة ذي</text><text x="884.9" y="282.2" font-size="6.7" fill="#a272b4">قار</text><text x="805.5" y="283.5" font-size="6.7" fill="#a272b4">محافظة النجف</text><text x="856.2" y="309.7" font-size="6.7" fill="#a272b4">محافظة المثنى</text><text x="889.9" y="182.3" font-size="6.7" fill="#33313b">إيلام</text><text x="904.4" y="209.8" font-size="6.7" fill="#a272b4">استان ایلام</text><text x="951.1" y="192.3" font-size="6.7" fill="#a272b4">استان لرستان</text><text x="909.9" y="249.8" font-size="6.7" fill="#a272b4">محافظة ميسان</text><text x="918.6" y="262.4" font-size="7.2" fill="#33313b">قلعة صالح</text><text x="922.9" y="281.7" font-size="6.7" fill="#33313b">القرنة</text><text x="934.9" y="300.6" font-size="7.7" fill="#33313b">البصرة</text><text x="926.6" y="318.0" font-size="6.7" fill="#a272b4">محافظة البصرة</text><text x="956.6" y="332.2" font-size="6.7" fill="#33313b">الفاو</text><text x="931.9" y="352.1" font-size="8.7" fill="#9868ad">الكويت</text><text x="898.2" y="364.7" font-size="6.7" fill="#33313b">السالمي</text><text x="874.9" y="378.4" font-size="6.7" fill="#33313b">حفر الباطن</text><text x="954.4" y="242.9" font-size="7.2" fill="#33313b">دزفول</text><text x="973.1" y="275.2" font-size="6.7" fill="#a272b4">استان خوزستان</text><text x="1032.3" y="247.3" font-size="6.7" fill="#a272b4">استان چهارمحال</text><text x="1032.3" y="256.0" font-size="6.7" fill="#a272b4">و بختیاری</text><text x="1073.5" y="226.0" font-size="6.7" fill="#a272b4">استان اصفهان</text><text x="1042.3" y="295.5" font-size="6.7" fill="#a272b4">استان کهگیلویه</text><text x="1042.3" y="304.2" font-size="6.7" fill="#a272b4">و بویر احمد</text><text x="1044.8" y="347.7" font-size="6.7" fill="#33313b">برازجان</text><text x="1047.3" y="375.4" font-size="6.7" fill="#a272b4">استان بوشهر</text><text x="1112.3" y="347.9" font-size="6.7" fill="#a272b4">استان فارس</text><text x="994.8" y="429.8" font-size="6.7" fill="#33313b">الجبيل</text><text x="1008.1" y="450.2" font-size="7.7" fill="#33313b">الدمام</text><text x="1024.8" y="468.6" font-size="8.2" fill="#9868ad">البحرين</text><text x="1044.8" y="493.5" font-size="8.2" fill="#9868ad">قطر</text><text x="991.8" y="501.4" font-size="7.7" fill="#33313b">الأحساء</text><text x="899.9" y="528.8" font-size="7.7" fill="#33313b">الرياض</text><text x="918.6" y="543.5" font-size="6.7" fill="#33313b">السيح</text><text x="1001.1" y="537.2" font-size="6.7" fill="#a272b4">المنطقة الشرقية</text><text x="851.2" y="561.0" font-size="6.7" fill="#a272b4">منطقة الرياض</text><text x="789.5" y="458.0" font-size="6.7" fill="#a272b4">منطقة القصيم</text><text x="811.2" y="474.8" font-size="6.7" fill="#33313b">عنيزة</text><text x="785.7" y="477.3" font-size="6.7" fill="#33313b">الرس</text><text x="855.4" y="469.8" font-size="6.7" fill="#33313b">المجمعة</text><text x="1043.6" y="426.2" font-size="7.2" fill="#5b8ec4" stroke="none">الخليج العربي</text><text x="1119.8" y="526.7" font-size="8.7" fill="#9868ad">الإمارات العربية</text><text x="1122.3" y="535.9" font-size="8.7" fill="#9868ad">المتحدة</text><text x="837.4" y="662.2" font-size="6.7" fill="#33313b">وادي الدواسر</text><text x="1208.7" y="423.9" font-size="7.7" fill="#33313b">بندرعباس</text><text x="1171.2" y="436.1" font-size="6.7" fill="#a272b4">استان هرمزگان</text><text x="1206.2" y="452.3" font-size="6.7" fill="#5b8ec4" stroke="none">مضيق</text><text x="1206.2" y="460.3" font-size="6.7" fill="#5b8ec4" stroke="none">هرمز</text><text x="1197.9" y="474.8" font-size="6.7" fill="#33313b">رأس الخيمة</text><text x="1177.4" y="492.6" font-size="7.7" fill="#33313b">دبي</text><text x="1211.9" y="500.5" font-size="6.7" fill="#33313b">كلباء</text><text x="1192.4" y="516.8" font-size="6.7" fill="#33313b">المدام</text><text x="1191.9" y="542.6" font-size="7.7" fill="#33313b">العين</text><text x="1224.2" y="537.2" font-size="6.7" fill="#33313b">صحار</text><text x="1246.2" y="556.0" font-size="6.7" fill="#33313b">السويق</text><text x="1277.4" y="566.3" font-size="7.7" fill="#33313b">مسقط</text><text x="1216.2" y="566.0" font-size="6.7" fill="#33313b">عبري</text><text x="1249.4" y="575.6" font-size="7.7" fill="#33313b">نزوى</text><text x="1288.6" y="586.0" font-size="6.7" fill="#33313b">سمد الشأن</text><text x="1314.9" y="598.5" font-size="6.7" fill="#33313b">صور</text><text x="1323.6" y="609.7" font-size="6.7" fill="#33313b">جعلان بني</text><text x="1319.9" y="617.9" font-size="6.7" fill="#33313b">بو علي</text><text x="1201.9" y="591.0" font-size="6.7" fill="#a272b4">محافظة الظاهرة</text><text x="1244.4" y="605.4" font-size="6.7" fill="#a272b4">محافظة الداخلية</text><text x="1303.6" y="630.4" font-size="6.7" fill="#a272b4">جنوب الشرقية</text><text x="1238.2" y="657.1" font-size="8.7" fill="#9868ad">عمان</text><text x="1296.6" y="536.2" font-size="7.2" fill="#5b8ec4" stroke="none">خليج عمان</text><text x="1351.8" y="433.6" font-size="6.7" fill="#33313b">ایرانشهر</text><text x="1350.6" y="504.0" font-size="6.7" fill="#33313b">جابهار</text><text x="1404.8" y="509.0" font-size="6.7" fill="#33313b">گوادر</text><text x="1427.3" y="476.8" font-size="6.7" fill="#33313b">تربت</text><text x="1367.3" y="387.3" font-size="6.7" fill="#a272b4">استان سیستان</text><text x="1367.3" y="396.1" font-size="6.7" fill="#a272b4">و بلوچستان</text><text x="819.5" y="774.6" font-size="7.7" fill="#33313b">نجران</text><text x="912.4" y="774.2" font-size="6.7" fill="#33313b">شرورة</text><text x="804.5" y="792.2" font-size="6.7" fill="#33313b">صعدة</text><text x="863.7" y="799.7" font-size="6.7" fill="#a272b4">محافظة الجوف</text><text x="961.1" y="804.7" font-size="6.7" fill="#a272b4">محافظة حضرموت</text><text x="916.9" y="829.9" font-size="8.7" fill="#9868ad">اليمن</text><text x="818.7" y="833.8" font-size="7.7" fill="#33313b">صنعاء</text><text x="858.7" y="842.7" font-size="6.7" fill="#a272b4">محافظة مأرب</text><text x="824.5" y="862.9" font-size="6.7" fill="#33313b">ذمار</text><text x="901.2" y="867.2" font-size="6.7" fill="#a272b4">محافظة شبوة</text><text x="977.9" y="862.9" font-size="6.7" fill="#33313b">المكلا</text><text x="879.9" y="744.8" font-size="6.7" fill="#a272b4">منطقة نجران</text><text x="778.7" y="714.3" font-size="6.7" fill="#a272b4">منطقة عسير</text><text x="1066.1" y="786.7" font-size="6.7" fill="#a272b4">محافظة المهرة</text><text x="1132.3" y="743.5" font-size="6.7" fill="#a272b4">ظفار</text><text x="1219.4" y="694.3" font-size="6.7" fill="#a272b4">محافظة الوسطى</text><text x="1144.5" y="743.5" font-size="6.7" fill="#a272b4">محافظة ظفار</text><text x="1138.7" y="790.2" font-size="6.7" fill="#33313b">صلالة</text><text x="1304.4" y="127.8" font-size="6.7" fill="#33313b">تربت حیدریه</text><text x="1446.0" y="123.6" font-size="6.7" fill="#a272b4">ولایت بادغیس</text><text x="1396.1" y="163.6" font-size="6.7" fill="#a272b4">ولایت هرات</text><text x="1318.1" y="217.0" font-size="7.2" fill="#33313b">بیرجند</text><text x="1271.9" y="213.5" font-size="6.7" fill="#a272b4">استان خراسان</text><text x="1271.9" y="222.3" font-size="6.7" fill="#a272b4">جنوبی</text><text x="1407.3" y="231.0" font-size="6.7" fill="#a272b4">ولایت فراه</text><text x="1147.5" y="248.9" font-size="7.7" fill="#33313b">یزد</text><text x="1153.2" y="269.0" font-size="6.7" fill="#a272b4">استان یزد</text><text x="1377.8" y="282.4" font-size="7.2" fill="#33313b">زابل</text><text x="1409.8" y="294.7" font-size="6.7" fill="#a272b4">ولایت نیمروز</text><text x="1459.8" y="273.0" font-size="6.7" fill="#a272b4">هلمند ولایت</text><text x="1234.9" y="308.8" font-size="7.7" fill="#33313b">کرمان</text><text x="1199.9" y="316.5" font-size="6.7" fill="#33313b">رفسنجان</text><text x="1189.4" y="340.9" font-size="6.7" fill="#33313b">سیرجان</text><text x="1241.2" y="354.2" font-size="6.7" fill="#a272b4">استان کرمان</text><text x="1276.1" y="363.4" font-size="6.7" fill="#33313b">بم</text><text x="1356.8" y="352.0" font-size="7.7" fill="#33313b">زاهدان</text></g><circle cx="562.4" cy="188.9" r="1.7" fill="#fff" stroke="#555" stroke-width=".6"/><circle cx="562.4" cy="188.9" r=".7" fill="#555"/><circle cx="549.9" cy="248.9" r="1.7" fill="#fff" stroke="#555" stroke-width=".6"/><circle cx="549.9" cy="248.9" r=".7" fill="#555"/><circle cx="527.4" cy="255.4" r="1.7" fill="#fff" stroke="#555" stroke-width=".6"/><circle cx="527.4" cy="255.4" r=".7" fill="#555"/><circle cx="824.2" cy="196.7" r="1.7" fill="#fff" stroke="#555" stroke-width=".6"/><circle cx="824.2" cy="196.7" r=".7" fill="#555"/><circle cx="899.9" cy="517.4" r="1.7" fill="#fff" stroke="#555" stroke-width=".6"/><circle cx="899.9" cy="517.4" r=".7" fill="#555"/><circle cx="1277.4" cy="554.9" r="1.7" fill="#fff" stroke="#555" stroke-width=".6"/><circle cx="1277.4" cy="554.9" r=".7" fill="#555"/><circle cx="818.7" cy="838.1" r="1.7" fill="#fff" stroke="#555" stroke-width=".6"/><circle cx="818.7" cy="838.1" r=".7" fill="#555"/><circle cx="441.2" cy="831.1" r="1.7" fill="#fff" stroke="#555" stroke-width=".6"/><circle cx="441.2" cy="831.1" r=".7" fill="#555"/><circle cx="577.4" cy="125.5" r="1.3" fill="#fbfbf0" stroke="#666" stroke-width=".5"/><circle cx="576.1" cy="140.7" r="1.3" fill="#fbfbf0" stroke="#666" stroke-width=".5"/><circle cx="571.1" cy="381.8" r="1.3" fill="#fbfbf0" stroke="#666" stroke-width=".5"/><circle cx="447.0" cy="463.2" r="1.3" fill="#fbfbf0" stroke="#666" stroke-width=".5"/><circle cx="444.5" cy="479.4" r="1.3" fill="#fbfbf0" stroke="#666" stroke-width=".5"/><circle cx="654.8" cy="621.8" r="1.3" fill="#fbfbf0" stroke="#666" stroke-width=".5"/><circle cx="676.6" cy="631.1" r="1.3" fill="#fbfbf0" stroke="#666" stroke-width=".5"/><circle cx="592.4" cy="692.9" r="1.3" fill="#fbfbf0" stroke="#666" stroke-width=".5"/><circle cx="579.4" cy="719.9" r="1.3" fill="#fbfbf0" stroke="#666" stroke-width=".5"/><circle cx="466.7" cy="695.7" r="1.3" fill="#fbfbf0" stroke="#666" stroke-width=".5"/><circle cx="487.4" cy="758.9" r="1.3" fill="#fbfbf0" stroke="#666" stroke-width=".5"/><circle cx="565.6" cy="834.3" r="1.3" fill="#fbfbf0" stroke="#666" stroke-width=".5"/><circle cx="826.2" cy="227.9" r="1.3" fill="#fbfbf0" stroke="#666" stroke-width=".5"/><circle cx="822.5" cy="246.7" r="1.3" fill="#fbfbf0" stroke="#666" stroke-width=".5"/><circle cx="842.4" cy="247.4" r="1.3" fill="#fbfbf0" stroke="#666" stroke-width=".5"/><circle cx="935.6" cy="304.1" r="1.3" fill="#fbfbf0" stroke="#666" stroke-width=".5"/><circle cx="954.4" cy="232.4" r="1.3" fill="#fbfbf0" stroke="#666" stroke-width=".5"/><circle cx="1009.3" cy="453.2" r="1.3" fill="#fbfbf0" stroke="#666" stroke-width=".5"/><circle cx="992.3" cy="490.7" r="1.3" fill="#fbfbf0" stroke="#666" stroke-width=".5"/><circle cx="1208.7" cy="426.7" r="1.3" fill="#fbfbf0" stroke="#666" stroke-width=".5"/><circle cx="1177.4" cy="495.7" r="1.3" fill="#fbfbf0" stroke="#666" stroke-width=".5"/><circle cx="1191.9" cy="531.9" r="1.3" fill="#fbfbf0" stroke="#666" stroke-width=".5"/><circle cx="1249.4" cy="578.6" r="1.3" fill="#fbfbf0" stroke="#666" stroke-width=".5"/><circle cx="819.5" cy="764.1" r="1.3" fill="#fbfbf0" stroke="#666" stroke-width=".5"/><circle cx="912.4" cy="765.4" r="1.3" fill="#fbfbf0" stroke="#666" stroke-width=".5"/><circle cx="1304.4" cy="214.2" r="1.3" fill="#fbfbf0" stroke="#666" stroke-width=".5"/><circle cx="1147.0" cy="251.7" r="1.3" fill="#fbfbf0" stroke="#666" stroke-width=".5"/><circle cx="1234.4" cy="311.1" r="1.3" fill="#fbfbf0" stroke="#666" stroke-width=".5"/><circle cx="1356.8" cy="341.1" r="1.3" fill="#fbfbf0" stroke="#666" stroke-width=".5"/><circle cx="1377.8" cy="283.6" r="1.3" fill="#fbfbf0" stroke="#666" stroke-width=".5"/><circle cx="1351.8" cy="425.0" r="1.3" fill="#fbfbf0" stroke="#666" stroke-width=".5"/><circle cx="1350.6" cy="494.9" r="1.3" fill="#fbfbf0" stroke="#666" stroke-width=".5"/><circle cx="1404.8" cy="500.4" r="1.3" fill="#fbfbf0" stroke="#666" stroke-width=".5"/><circle cx="763.5" cy="741.2" r="1.3" fill="#fbfbf0" stroke="#666" stroke-width=".5"/></svg></div><div class="tabl"></div><div class="ctl"><div class="trk"></div><div class="trk2"></div><div class="dot" style="left:35.7px"></div><div class="sl" style="left:-17.8px"><span>1 YEAR AVERAGE</span></div><div class="dot" style="left:156.9px"></div><div class="sl" style="left:103.4px"><span>5 YEAR AVERAGE</span></div><div class="dot off" style="left:278.1px"></div><div class="sl off" style="left:224.6px"><span>10 YEAR AVERAGE</span></div><div class="dot off" style="left:399.3px"></div><div class="sl off" style="left:345.8px"><span>20 YEAR AVERAGE</span></div><div class="vdiv"></div><div class="pill" style="left:480.5px;font-size:10.5px">07/19/2002</div><div class="to">To</div><div class="pill" style="left:576px">End Date</div></div><div class="legend"><div class="lg" style="top:20.00px;background:#e63c2b"></div><div class="lg" style="top:50.15px;background:#fb7447"></div><div class="lg" style="top:80.30px;background:#fdad60"></div><div class="lg" style="top:110.45px;background:#fdf0ae"></div><div class="lg" style="top:140.60px;background:#c5e688"></div><div class="lg" style="top:170.75px;background:#98d36c"></div><div class="lg" style="top:200.90px;background:#54b95e"></div><div class="lg" style="top:231.05px;background:#129c4f"></div><div class="ll" style="top:16.20px">-0.4</div><div class="ll" style="top:46.35px">-0.3</div><div class="ll" style="top:76.50px">-0.2</div><div class="ll" style="top:106.65px">-0.1</div><div class="ll" style="top:136.80px">0.0</div><div class="ll" style="top:166.95px">0.1</div><div class="ll" style="top:197.10px">0.2</div><div class="ll" style="top:227.25px">0.3</div><div class="ll" style="top:257.40px">0.4</div></div><div class="mini"><svg class="abs" style="left:0;top:0" width="74" height="74" viewBox="1 1 74 74"><defs><filter id="mb"><feGaussianBlur stdDeviation=".7"/></filter><filter id="mb2"><feGaussianBlur stdDeviation="3.2"/></filter><filter id="mn" x="0" y="0" width="100%" height="100%"><feTurbulence type="fractalNoise" baseFrequency=".2" numOctaves="3" seed="3"/><feColorMatrix type="matrix" values="0 0 0 0 .45  0 0 0 0 .36  0 0 0 0 .22  0 1.6 0 0 -.62"/></filter></defs><rect width="78" height="78" fill="#d2a76c"/><g filter="url(#mb2)"><ellipse cx="36" cy="30" rx="24" ry="13" fill="#e9b87a" transform="rotate(38 36 30)"/><ellipse cx="52" cy="52" rx="16" ry="10" fill="#ecbf88" transform="rotate(-30 52 52)"/><ellipse cx="30" cy="8" rx="26" ry="8" fill="#c4a878"/><ellipse cx="64" cy="12" rx="16" ry="12" fill="#b89c72"/><ellipse cx="10" cy="58" rx="10" ry="18" fill="#ad8b55"/><ellipse cx="20" cy="40" rx="8" ry="10" fill="#c39d62" transform="rotate(40 20 40)"/></g><rect width="78" height="78" filter="url(#mn)" opacity=".55"/><g filter="url(#mb)"><path d="M0 29c4 2 7 6 10 10l8 11 8 10 7 8 8 9H32l-7-8-7-9-8-11-10-12z" fill="#0f1d36"/><path d="M0 37l9 11 8 11 7 9 7 8" fill="none" stroke="#e9e9e2" stroke-width="1.6" opacity=".85"/><path d="M2 30l8 9 8 11" fill="none" stroke="#d9d9d0" stroke-width=".8" opacity=".6"/><path d="M38 76c3-2 7-3 10-5s7-4 10-7 5-6 7-9 4-4 6-6 5-3 5-3V76z" fill="#0e1c35"/><path d="M38 13l4 2 5 6 4 6 4 3 4-1 3-4 3-3 3 2-2 4-3 5-5 4-6-1-5-5-4-7-3-6z" fill="#1d4950"/><path d="M47 25c2 4 5 8 9 8s5-3 7-6" fill="none" stroke="#3f8f8a" stroke-width=".9" opacity=".8"/><path d="M67 27c3 3 6 6 9 8v9c-3-3-7-8-10-13z" fill="#15303f"/><ellipse cx="7" cy="13" rx="8" ry="6" fill="#f4f4f0" opacity=".85"/><ellipse cx="40" cy="4" rx="14" ry="3" fill="#ecece6" opacity=".7"/><ellipse cx="20" cy="5" rx="8" ry="2.5" fill="#f0f0ea" opacity=".6"/></g><g transform="translate(38 36.5) rotate(-32)" fill="#fff"><rect x="-12.5" y="-3.8" width="7.6" height="7.6" rx=".8"/><rect x="4.9" y="-3.8" width="7.6" height="7.6" rx=".8"/><rect x="-3.4" y="-3" width="6.8" height="6" rx="1.2"/><rect x="-11" y="-2.4" width="1.5" height="4.8" fill="#cfa468"/><rect x="-8.2" y="-2.4" width="1.5" height="4.8" fill="#cfa468"/><rect x="6.7" y="-2.4" width="1.5" height="4.8" fill="#cfa468"/><rect x="9.5" y="-2.4" width="1.5" height="4.8" fill="#cfa468"/><path d="M-.5 6.5a5 5 0 0 0 6.6-1.4" fill="none" stroke="#fff" stroke-width="1.1"/><path d="M-2 8.6a8 8 0 0 0 10.4-2.2" fill="none" stroke="#fff" stroke-width="1.1"/></g></svg></div><div class="zoom"><b style="top:10px">+</b><i></i><b style="top:48px">&#8722;</b></div><div class="chart"><svg class="abs" style="left:0;top:0" width="1068" height="125" viewBox="406 872 1068 125" font-family="Liberation Sans, sans-serif"><rect x="443" y="904.6" width="1029" height="4.4" rx="2" fill="#efeef2"/><rect x="741" y="904.4" width="417" height="4.8" fill="#d3d3d4"/><circle cx="741" cy="906.8" r="5.6" fill="#d4d4d6"/><rect x="739.3" y="904" width="3.4" height="5.6" fill="#a9a9ae"/><rect x="740.65" y="904" width=".7" height="5.6" fill="#d4d4d6"/><circle cx="1158" cy="906.8" r="5.6" fill="#d4d4d6"/><rect x="1156.3" y="904" width="3.4" height="5.6" fill="#a9a9ae"/><rect x="1157.65" y="904" width=".7" height="5.6" fill="#d4d4d6"/><line x1="443" x2="1472" y1="915" y2="915" stroke="#e9e8ee" stroke-width=".8"/><line x1="443" x2="1472" y1="937.7" y2="937.7" stroke="#e9e8ee" stroke-width=".8"/><line x1="443" x2="1472" y1="960.4" y2="960.4" stroke="#e9e8ee" stroke-width=".8"/><line x1="504.4" x2="504.4" y1="915" y2="960.4" stroke="#e6e5ec" stroke-width=".8"/><line x1="570.4" x2="570.4" y1="915" y2="960.4" stroke="#e6e5ec" stroke-width=".8"/><line x1="633.5" x2="633.5" y1="915" y2="960.4" stroke="#e6e5ec" stroke-width=".8"/><line x1="699" x2="699" y1="915" y2="960.4" stroke="#e6e5ec" stroke-width=".8"/><line x1="762.5" x2="762.5" y1="915" y2="960.4" stroke="#e6e5ec" stroke-width=".8"/><line x1="828" x2="828" y1="915" y2="960.4" stroke="#e6e5ec" stroke-width=".8"/><line x1="893" x2="893" y1="915" y2="960.4" stroke="#e6e5ec" stroke-width=".8"/><line x1="955" x2="955" y1="915" y2="960.4" stroke="#e6e5ec" stroke-width=".8"/><line x1="1020.2" x2="1020.2" y1="915" y2="960.4" stroke="#e6e5ec" stroke-width=".8"/><line x1="1083.8" x2="1083.8" y1="915" y2="960.4" stroke="#e6e5ec" stroke-width=".8"/><line x1="1149.5" x2="1149.5" y1="915" y2="960.4" stroke="#e6e5ec" stroke-width=".8"/><line x1="1213" x2="1213" y1="915" y2="960.4" stroke="#e6e5ec" stroke-width=".8"/><line x1="1278.5" x2="1278.5" y1="915" y2="960.4" stroke="#e6e5ec" stroke-width=".8"/><line x1="1344" x2="1344" y1="915" y2="960.4" stroke="#e6e5ec" stroke-width=".8"/><line x1="1407.5" x2="1407.5" y1="915" y2="960.4" stroke="#e6e5ec" stroke-width=".8"/><text x="441" y="917.3" font-size="6.4" text-anchor="end" fill="#26262e" font-weight="bold">300</text><text x="441" y="940.3" font-size="6.4" text-anchor="end" fill="#26262e" font-weight="bold">200</text><text x="441" y="963.3" font-size="6.4" text-anchor="end" fill="#26262e" font-weight="bold">100</text><text x="472" y="968.3" font-size="6.2" text-anchor="middle" fill="#26262e" font-weight="bold">Jul</text><text x="537" y="968.3" font-size="6.2" text-anchor="middle" fill="#26262e" font-weight="bold">Aug</text><text x="602" y="968.3" font-size="6.2" text-anchor="middle" fill="#26262e" font-weight="bold">Sep</text><text x="666" y="968.3" font-size="6.2" text-anchor="middle" fill="#26262e" font-weight="bold">Oct</text><text x="731" y="968.3" font-size="6.2" text-anchor="middle" fill="#26262e" font-weight="bold">Nov</text><text x="795" y="968.3" font-size="6.2" text-anchor="middle" fill="#26262e" font-weight="bold">Dec</text><text x="860" y="968.3" font-size="6.2" text-anchor="middle" fill="#26262e" font-weight="bold">Jan 2024</text><text x="924" y="968.3" font-size="6.2" text-anchor="middle" fill="#26262e" font-weight="bold">Feb</text><text x="988" y="968.3" font-size="6.2" text-anchor="middle" fill="#26262e" font-weight="bold">Mar</text><text x="1052" y="968.3" font-size="6.2" text-anchor="middle" fill="#26262e" font-weight="bold">Apr</text><text x="1117" y="968.3" font-size="6.2" text-anchor="middle" fill="#26262e" font-weight="bold">May</text><text x="1181" y="968.3" font-size="6.2" text-anchor="middle" fill="#26262e" font-weight="bold">Jun</text><text x="1246" y="968.3" font-size="6.2" text-anchor="middle" fill="#26262e" font-weight="bold">Jul</text><text x="1311" y="968.3" font-size="6.2" text-anchor="middle" fill="#26262e" font-weight="bold">Aug</text><text x="1376" y="968.3" font-size="6.2" text-anchor="middle" fill="#26262e" font-weight="bold">Sep</text><text x="1440" y="968.3" font-size="6.2" text-anchor="middle" fill="#26262e" font-weight="bold">Oct</text><path d="M442.6 927.0 445.0 927.3 447.3 928.1 449.7 928.8 452.4 928.6 455.0 929.1 457.7 929.7 460.4 929.5 463.0 929.5 465.7 928.7 468.3 928.8 471.0 928.5 473.4 928.9 475.7 929.5 478.1 930.6 480.5 930.5 482.8 929.9 485.2 929.4 487.6 929.0 489.9 927.9 492.3 927.8 494.7 928.0 497.0 928.2 499.4 928.4 501.8 928.6 504.1 928.0 506.5 928.5 509.2 928.7 511.8 928.6 514.5 928.4 517.2 928.8 519.4 929.1 521.6 930.4 523.8 931.0 526.0 931.3 528.3 930.7 530.6 930.8 532.9 930.0 535.2 929.8 537.4 929.3 539.7 928.6 542.0 928.1 544.7 928.7 547.3 929.1 550.0 929.4 552.7 930.2 555.0 930.3 557.4 929.5 559.8 929.3 562.1 929.6 564.5 929.2 566.9 929.2 569.2 928.7 571.6 928.1 574.0 928.2 576.3 927.0 578.7 926.7 581.1 926.3 583.7 926.2 586.4 925.6 589.1 925.4 591.7 925.3 594.4 924.3 597.0 923.7 599.7 923.2 602.4 922.1 605.0 921.1 607.7 920.8 610.4 920.7 613.0 919.9 615.7 920.0 618.3 920.3 621.0 920.4 623.7 921.0 626.3 921.2 629.0 922.4 631.7 923.2 634.3 923.5 636.7 923.5 639.1 923.5 641.4 922.5 643.8 922.6 646.2 923.0 648.5 922.4 651.2 922.4 653.8 923.0 656.5 922.8 659.2 922.8 661.8 922.2 664.5 921.6 667.2 921.4 669.8 921.0 672.2 921.0 674.6 921.5 676.9 921.0 679.3 920.8 681.7 920.9 684.0 921.4 686.4 922.6 688.8 923.1 691.1 924.2 693.8 923.6 696.4 924.1 699.1 923.3 701.8 923.1 704.4 923.2 707.1 923.6 709.8 924.2 712.4 924.9 715.1 924.1 717.7 923.4 720.4 923.3 723.1 922.8 725.3 923.3 727.5 922.5 729.7 922.9 731.9 923.2 734.2 922.9 736.4 923.5 738.6 923.1 740.8 923.1 743.5 923.8 746.1 924.1 748.8 925.2 751.5 926.0 754.1 926.1 756.8 925.7 759.5 925.2 762.1 924.9 764.5 924.4 766.9 924.1 769.2 923.8 771.6 923.5 774.0 923.8 776.3 923.1 778.7 922.4 781.1 922.9 783.4 922.3 785.8 922.4 788.2 921.6 790.5 921.4 792.7 921.4 795.0 921.4 797.2 921.3 799.4 921.0 801.6 920.5 803.8 920.6 806.1 921.1 808.3 920.7 810.5 921.0 812.7 920.4 814.9 920.7 817.2 920.7 819.4 920.6 821.6 920.7 823.8 920.4 826.0 920.3 828.4 921.1 830.8 921.3 833.1 922.1 835.5 922.5 837.9 921.7 840.2 922.5 842.6 922.5 845.0 922.2 847.3 922.1 849.7 922.7 852.1 922.2 854.4 923.2 856.8 923.2 859.2 922.9 861.5 923.5 864.2 924.1 866.9 924.6 869.5 925.3 872.2 925.6 874.4 926.2 876.6 926.8 878.8 928.4 881.1 928.8 883.3 928.7 885.6 927.7 887.9 927.9 890.2 927.4 892.5 927.1 894.8 926.4 897.0 926.0 899.4 925.9 901.8 926.5 904.1 926.4 906.5 927.0 908.9 927.1 911.2 927.0 913.6 926.9 916.0 926.4 918.3 926.3 920.7 926.7 923.1 926.4 925.4 926.3 927.9 926.5 930.3 926.1 932.7 926.4 935.1 926.8 937.6 926.6 940.0 926.7 942.4 927.5 944.7 927.9 947.1 927.7 949.5 928.6 951.8 928.9 954.2 929.5 956.6 928.5 958.9 927.5 961.3 926.9 963.7 926.4 966.0 924.7 968.4 924.2 971.1 924.9 973.7 925.8 976.4 926.1 979.1 926.7 981.7 927.3 984.4 927.5 987.0 927.1 989.7 927.8 992.4 928.3 995.0 929.2 997.7 930.4 1000.4 930.9 1003.0 931.5 1005.7 931.2 1008.3 932.1 1011.0 932.0 1013.2 932.1 1015.4 932.9 1017.7 933.2 1019.9 933.8 1022.4 933.7 1024.9 933.1 1027.3 932.1 1029.8 931.9 1032.3 931.7 1034.7 931.8 1037.0 932.1 1039.4 932.0 1041.8 931.7 1044.1 932.0 1046.5 932.4 1048.9 932.4 1051.2 932.8 1053.6 933.2 1056.0 933.0 1058.3 933.1 1060.7 933.1 1063.1 933.3 1065.4 934.3 1067.8 934.3 1070.2 935.1 1072.5 935.0 1074.9 935.6 1077.3 935.5 1079.6 935.1 1082.0 934.6 1084.4 934.1 1086.7 934.3 1089.1 933.8 1091.5 934.1 1093.8 933.7 1096.2 933.8 1098.6 933.9 1100.9 934.7 1103.3 934.5 1105.7 935.0 1108.0 934.6 1110.4 934.9 1112.8 934.8 1115.1 935.2 1117.5 935.2 1119.9 935.3 1122.2 936.0 1124.6 935.5 1127.0 936.1 1129.3 935.9 1131.7 936.3 1134.1 935.4 1136.4 935.0 1138.8 935.4 1141.2 934.9 1143.5 934.5 1145.9 933.8 1148.6 935.0 1151.2 935.1 1153.9 936.3 1156.6 937.0 1158.9 936.9 1161.3 937.1 1163.7 936.9 1166.0 936.9 1168.4 936.0 1170.8 936.3 1173.4 937.0 1176.1 937.6 1178.8 938.0 1181.4 938.4 1183.8 938.1 1186.2 938.5 1188.5 938.0 1190.9 938.0 1193.3 938.2 1195.6 937.7 1198.0 937.9 1200.4 938.2 1202.7 938.6 1205.1 939.2 1207.5 939.9 1209.8 939.8 1212.2 939.9 1214.6 940.1 1216.9 940.6 1219.3 940.3 1221.7 940.6 1224.0 940.9 1226.2 939.9 1228.5 939.5 1230.7 938.9 1232.9 938.0 1235.4 938.3 1237.9 939.2 1240.4 939.2 1242.8 939.2 1245.3 939.8 1247.7 940.8 1250.1 941.3 1252.4 941.8 1254.8 942.0 1257.2 942.3 1259.5 943.0 1262.2 942.8 1264.8 942.8 1267.5 943.4 1270.2 943.0 1272.8 942.8 1275.5 941.8 1278.2 941.4 1280.8 941.2 1283.2 941.7 1285.6 941.1 1287.9 941.7 1290.3 941.6 1292.7 941.6 1295.0 941.6 1297.2 941.3 1299.5 941.4 1301.7 941.0 1303.9 940.9 1306.1 940.7 1308.3 940.9 1310.6 940.6 1312.8 940.9 1315.2 940.7 1317.7 939.5 1320.1 939.4 1322.5 938.6 1325.0 938.0 1327.4 937.3 1329.9 936.9 1332.3 935.9 1334.5 936.4 1336.7 936.5 1339.0 936.9 1341.2 937.0 1343.8 937.8 1346.5 938.6 1349.2 939.1 1351.8 940.2 1354.2 940.8 1356.6 941.0 1358.9 941.7 1361.3 942.9 1363.7 942.9 1366.0 943.7 1368.4 944.2 1370.8 944.8 1373.1 944.6 1375.5 945.0 1377.9 945.4 1380.2 945.9 1382.6 946.6 1385.0 946.1 1387.3 947.3 1389.7 947.0 1392.1 947.3 1394.4 948.0 1396.8 949.0 1399.2 949.2 1401.5 950.1 1403.9 949.5 1406.3 949.1 1408.6 948.3 1411.0 949.1 1413.4 949.7 1415.7 949.9 1418.1 950.6 1420.5 951.1 1422.8 951.2 1425.2 950.8 1427.6 950.1 1429.9 949.1 1432.3 948.0 1434.7 947.7 1437.0 946.9 1439.4 947.1 1441.8 947.8 1444.1 948.3 1446.5 948.4 1448.9 948.3 1451.2 949.1 1453.9 948.4 1456.6 948.5 1459.2 947.9 1461.9 947.3 1464.1 948.3 1466.3 948.8 1468.5 949.3 1470.8 950.1" fill="none" stroke="#b1a6dd" stroke-width="1" stroke-linejoin="round"/><circle cx="1459.4" cy="926.7" r="7.4" fill="#9a70c6"/><rect x="1456.6" y="926.3" width="5.6" height=".9" fill="#c9b0e4"/><path d="M422 976c4 0 5-7 8-7s4 7 7 7h6" fill="none" stroke="#55555c" stroke-width=".7"/><path d="M422 976h6c3 0 4-5 6.5-5s3 3 4.5 3 1.5-1.5 3-1.5" fill="none" stroke="#9b9ba3" stroke-width=".6"/></svg></div><div class="upb"><svg class="abs" style="left:8px;top:9px" width="11" height="8" viewBox="0 0 11 8"><path d="M1.5 6 5.5 2 9.5 6" fill="none" stroke="#fff" stroke-width="1.2" stroke-linecap="round" stroke-linejoin="round"/></svg></div></div></div></body></html>
